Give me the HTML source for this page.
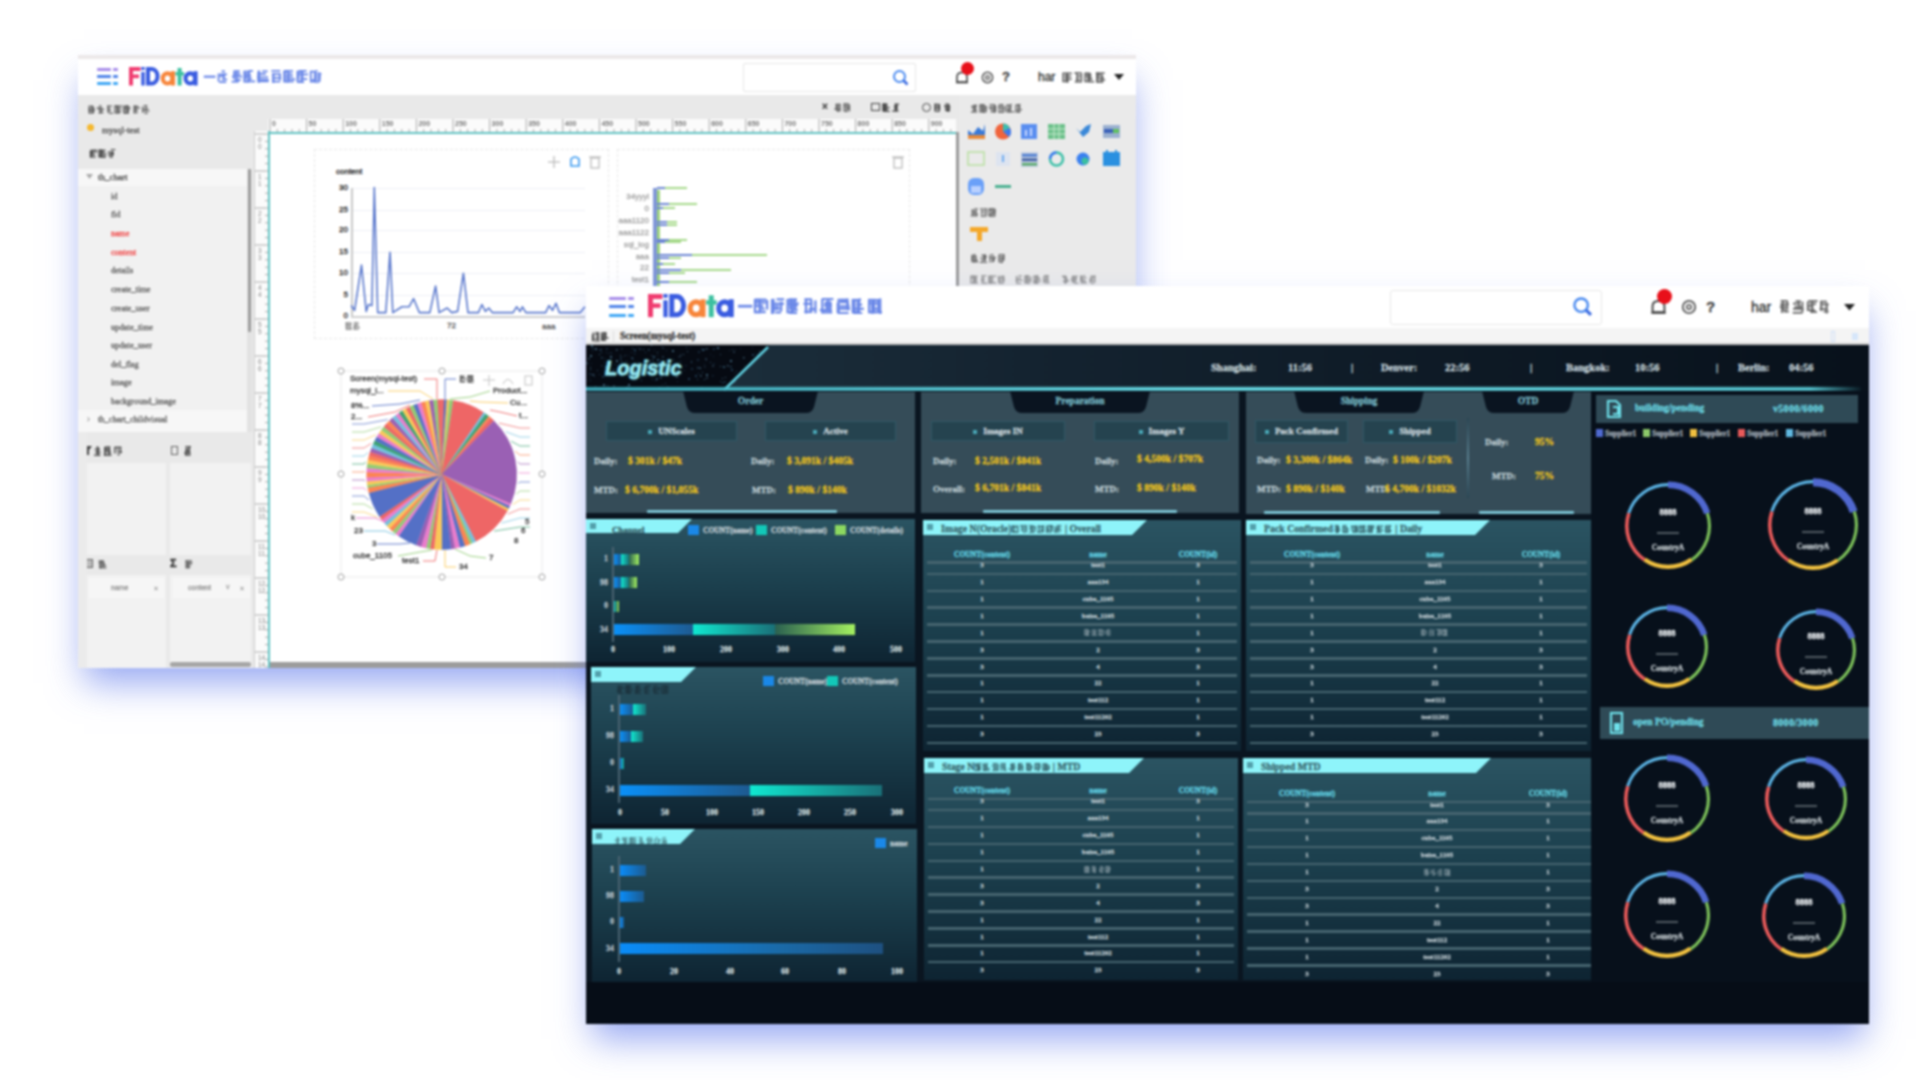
<!DOCTYPE html>
<html><head><meta charset="utf-8">
<style>
*{margin:0;padding:0;box-sizing:border-box}
html,body{width:1920px;height:1080px;overflow:hidden;background:#fff;font-family:"Liberation Sans",sans-serif}
.a{position:absolute}
.t{white-space:nowrap;-webkit-text-stroke:0.35px currentColor}
.win{position:absolute;overflow:hidden}
.inner{position:absolute;width:1920px;height:1080px}
.ser{font-family:"Liberation Serif",serif}
</style></head><body>
<div id="all" style="position:absolute;left:0;top:0;width:1920px;height:1080px;filter:blur(1px)"><div class="win" id="back" style="left:78px;top:55px;width:1058px;height:613px;background:#e9e9e9;box-shadow:1px 20px 34px -5px rgba(70,100,232,.56)"><div class="inner" style="left:-78px;top:-55px">
<div class="a" style="left:78px;top:55px;width:1058px;height:4px;background:#ece8e9"></div>
<div class="a" style="left:78px;top:59px;width:1058px;height:36px;background:#fff"></div>
<div class="a" style="left:97px;top:68px;width:14px;height:3px;background:#a68ce9;border-radius:1px"></div>
<div class="a" style="left:113px;top:68px;width:5px;height:3px;background:#a68ce9;border-radius:1px"></div>
<div class="a" style="left:97px;top:75px;width:14px;height:3px;background:#4f83e8;border-radius:1px"></div>
<div class="a" style="left:113px;top:75px;width:5px;height:3px;background:#4f83e8;border-radius:1px"></div>
<div class="a" style="left:97px;top:82px;width:14px;height:3px;background:#3ea6f4;border-radius:1px"></div>
<div class="a" style="left:113px;top:82px;width:5px;height:3px;background:#3ea6f4;border-radius:1px"></div>
<svg class="a" style="left:129px;top:67px;overflow:visible" width="70.0" height="19.0" viewBox="0 0 70 19"><rect x="0" y="0" width="4" height="18.5" fill="#f03c70"/><rect x="0" y="0" width="11.5" height="4" fill="#f03c70"/><rect x="0" y="7.5" width="10" height="3.6" fill="#f03c70"/><rect x="12.3" y="0" width="3.4" height="3" fill="#3a5ce0"/><rect x="12.3" y="5" width="3.4" height="13.5" fill="#3a5ce0"/><path d="M17 0 H23 A7.5 9.25 0 0 1 23 18.5 H17 Z M21 4 V14.5 H23 A3.5 5.25 0 0 0 23 4 Z" fill="#3a5ce0" fill-rule="evenodd"/><path d="M38.5 4.2 A6.8 7.2 0 1 0 38.5 18.6 A6.8 7.2 0 1 0 38.5 4.2 Z M38.5 8.4 A2.7 3 0 1 1 38.5 14.4 A2.7 3 0 1 1 38.5 8.4 Z" fill="#f7853a" fill-rule="evenodd"/><rect x="42" y="4.2" width="4" height="14.3" fill="#f7853a"/><rect x="48.6" y="1" width="4" height="17.5" fill="#3cc0a0"/><rect x="46.5" y="5" width="8.5" height="3.5" fill="#3cc0a0"/><path d="M61.3 4.2 A6.8 7.2 0 1 0 61.3 18.6 A6.8 7.2 0 1 0 61.3 4.2 Z M61.3 8.4 A2.7 3 0 1 1 61.3 14.4 A2.7 3 0 1 1 61.3 8.4 Z" fill="#3a5ce0" fill-rule="evenodd"/><rect x="64.6" y="4.2" width="4" height="14.3" fill="#3a5ce0"/></svg>
<svg class="a" style="left:203px;top:70.3px;opacity:0.89" width="120" height="13"><g stroke="#5a7be6" fill="none"><line x1="0.8" y1="6.7" x2="12.5" y2="6.7" stroke-width="2.23"/><line x1="18.6" y1="1.3" x2="22.0" y2="1.3" stroke-width="1.86"/><line x1="16.6" y1="4.4" x2="24.0" y2="4.4" stroke-width="1.86"/><line x1="16.5" y1="6.2" x2="21.8" y2="6.2" stroke-width="1.86"/><line x1="18.8" y1="9.4" x2="24.1" y2="9.4" stroke-width="1.86"/><line x1="16.2" y1="12.1" x2="23.2" y2="12.1" stroke-width="1.86"/><line x1="21.1" y1="3.3" x2="21.1" y2="9.6" stroke-width="1.86"/><line x1="15.6" y1="3.5" x2="15.6" y2="11.7" stroke-width="1.86"/><line x1="31.8" y1="1.3" x2="36.9" y2="1.3" stroke-width="1.86"/><line x1="30.0" y1="4.2" x2="37.5" y2="4.2" stroke-width="1.86"/><line x1="28.9" y1="6.6" x2="39.1" y2="6.6" stroke-width="1.86"/><line x1="31.8" y1="10.0" x2="37.7" y2="10.0" stroke-width="1.86"/><line x1="28.6" y1="11.7" x2="35.8" y2="11.7" stroke-width="1.86"/><line x1="33.8" y1="0.4" x2="33.8" y2="9.7" stroke-width="1.86"/><line x1="31.3" y1="0.3" x2="31.3" y2="9.4" stroke-width="1.86"/><rect x="41.3" y="1.6" width="4.1" height="10.0" fill="none" stroke-width="1.86"/><line x1="45.5" y1="0.9" x2="49.9" y2="0.9" stroke-width="1.86"/><line x1="42.8" y1="5.5" x2="48.1" y2="5.5" stroke-width="1.86"/><line x1="44.8" y1="8.6" x2="49.0" y2="8.6" stroke-width="1.86"/><line x1="42.4" y1="11.4" x2="52.2" y2="11.4" stroke-width="1.86"/><line x1="43.1" y1="2.8" x2="43.1" y2="9.4" stroke-width="1.86"/><line x1="46.2" y1="1.9" x2="46.2" y2="12.0" stroke-width="1.86"/><line x1="56.3" y1="0.7" x2="56.3" y2="12.6" stroke-width="1.86"/><line x1="59.2" y1="1.3" x2="64.6" y2="1.3" stroke-width="1.86"/><line x1="56.0" y1="3.9" x2="62.9" y2="3.9" stroke-width="1.86"/><line x1="54.0" y1="7.3" x2="65.1" y2="7.3" stroke-width="1.86"/><line x1="57.1" y1="9.9" x2="65.7" y2="9.9" stroke-width="1.86"/><line x1="55.0" y1="11.3" x2="65.7" y2="11.3" stroke-width="1.86"/><line x1="55.6" y1="0.6" x2="55.6" y2="11.1" stroke-width="1.86"/><line x1="55.3" y1="2.4" x2="55.3" y2="12.6" stroke-width="1.86"/><line x1="68.4" y1="0.8" x2="77.3" y2="0.8" stroke-width="1.86"/><line x1="69.2" y1="4.2" x2="77.2" y2="4.2" stroke-width="1.86"/><line x1="70.4" y1="7.9" x2="78.2" y2="7.9" stroke-width="1.86"/><line x1="69.3" y1="11.5" x2="77.3" y2="11.5" stroke-width="1.86"/><line x1="77.0" y1="3.3" x2="77.0" y2="10.3" stroke-width="1.86"/><line x1="70.2" y1="3.0" x2="70.2" y2="13.1" stroke-width="1.86"/><line x1="70.3" y1="3.8" x2="70.3" y2="12.8" stroke-width="1.86"/><rect x="81.2" y="1.6" width="4.1" height="10.0" fill="none" stroke-width="1.86"/><line x1="81.2" y1="0.7" x2="90.0" y2="0.7" stroke-width="1.86"/><line x1="84.5" y1="3.7" x2="89.5" y2="3.7" stroke-width="1.86"/><line x1="85.4" y1="6.5" x2="89.9" y2="6.5" stroke-width="1.86"/><line x1="85.5" y1="9.3" x2="92.2" y2="9.3" stroke-width="1.86"/><line x1="83.1" y1="11.5" x2="90.7" y2="11.5" stroke-width="1.86"/><line x1="84.4" y1="3.7" x2="84.4" y2="10.1" stroke-width="1.86"/><line x1="81.9" y1="1.1" x2="81.9" y2="11.1" stroke-width="1.86"/><rect x="94.5" y="1.6" width="4.1" height="10.0" fill="none" stroke-width="1.86"/><line x1="95.8" y1="0.9" x2="103.6" y2="0.9" stroke-width="1.86"/><line x1="95.8" y1="4.4" x2="105.1" y2="4.4" stroke-width="1.86"/><line x1="97.4" y1="9.1" x2="104.2" y2="9.1" stroke-width="1.86"/><line x1="94.6" y1="12.1" x2="101.1" y2="12.1" stroke-width="1.86"/><line x1="99.5" y1="1.4" x2="99.5" y2="10.6" stroke-width="1.86"/><line x1="95.4" y1="2.4" x2="95.4" y2="9.6" stroke-width="1.86"/><rect x="107.8" y="1.6" width="4.1" height="10.0" fill="none" stroke-width="1.86"/><line x1="112.5" y1="1.1" x2="114.6" y2="1.1" stroke-width="1.86"/><line x1="111.1" y1="4.1" x2="118.4" y2="4.1" stroke-width="1.86"/><line x1="110.9" y1="7.0" x2="117.9" y2="7.0" stroke-width="1.86"/><line x1="109.1" y1="9.9" x2="117.4" y2="9.9" stroke-width="1.86"/><line x1="111.8" y1="12.5" x2="116.2" y2="12.5" stroke-width="1.86"/><line x1="116.5" y1="2.3" x2="116.5" y2="11.8" stroke-width="1.86"/><line x1="111.9" y1="2.3" x2="111.9" y2="11.7" stroke-width="1.86"/></g></svg>
<div class="a" style="left:743px;top:63px;width:173px;height:29px;background:#fff;border:1px solid #e6e6e6;border-radius:2px"></div>
<svg class="a" style="left:892px;top:69px" width="18" height="18" viewBox="0 0 18 18"><circle cx="7.5" cy="7.5" r="5.5" fill="none" stroke="#4a8af0" stroke-width="2"/><line x1="11.5" y1="11.5" x2="15.5" y2="15.5" stroke="#3a6ae0" stroke-width="2.5"/></svg>
<svg class="a" style="left:954px;top:70px" width="16" height="16" viewBox="0 0 16 16"><path d="M3 12 L3 7 Q3 2.5 8 2.5 Q13 2.5 13 7 L13 12 Z" fill="none" stroke="#444" stroke-width="1.6"/><line x1="2" y1="12.5" x2="14" y2="12.5" stroke="#444" stroke-width="1.6"/></svg>
<div class="a" style="left:961px;top:62px;width:13px;height:13px;background:#e8101a;border-radius:50%"></div>
<svg class="a" style="left:980px;top:70px" width="15" height="15" viewBox="0 0 16 16"><circle cx="8" cy="8" r="5.5" fill="none" stroke="#555" stroke-width="1.6"/><circle cx="8" cy="8" r="2" fill="none" stroke="#555" stroke-width="1.4"/></svg>
<div class="a t " style="left:1002px;top:69.2px;font-size:13px;line-height:15.6px;color:#444;font-weight:bold">?</div>
<div class="a t " style="left:1038px;top:69.8px;font-size:12px;line-height:14.4px;color:#333;">har</div>
<svg class="a" style="left:1062px;top:71.5px;opacity:0.84" width="44" height="11"><g stroke="#444" fill="none"><rect x="1.1" y="1.3" width="3.4" height="8.2" fill="none" stroke-width="1.54"/><line x1="5.0" y1="1.3" x2="9.9" y2="1.3" stroke-width="1.54"/><line x1="2.4" y1="4.3" x2="9.3" y2="4.3" stroke-width="1.54"/><line x1="2.6" y1="7.1" x2="9.7" y2="7.1" stroke-width="1.54"/><line x1="3.9" y1="9.4" x2="6.6" y2="9.4" stroke-width="1.54"/><line x1="5.4" y1="0.8" x2="5.4" y2="10.0" stroke-width="1.54"/><line x1="5.5" y1="2.0" x2="5.5" y2="10.7" stroke-width="1.54"/><line x1="12.3" y1="1.0" x2="19.8" y2="1.0" stroke-width="1.54"/><line x1="14.9" y1="4.1" x2="18.8" y2="4.1" stroke-width="1.54"/><line x1="13.8" y1="7.4" x2="18.4" y2="7.4" stroke-width="1.54"/><line x1="12.8" y1="9.8" x2="19.9" y2="9.8" stroke-width="1.54"/><line x1="19.4" y1="1.3" x2="19.4" y2="9.6" stroke-width="1.54"/><line x1="15.1" y1="0.4" x2="15.1" y2="9.3" stroke-width="1.54"/><rect x="23.1" y="1.3" width="3.4" height="8.2" fill="none" stroke-width="1.54"/><line x1="23.9" y1="1.6" x2="29.1" y2="1.6" stroke-width="1.54"/><line x1="23.9" y1="4.0" x2="29.3" y2="4.0" stroke-width="1.54"/><line x1="25.4" y1="6.9" x2="30.4" y2="6.9" stroke-width="1.54"/><line x1="26.3" y1="9.7" x2="32.3" y2="9.7" stroke-width="1.54"/><line x1="26.1" y1="2.7" x2="26.1" y2="8.6" stroke-width="1.54"/><line x1="28.3" y1="2.2" x2="28.3" y2="8.6" stroke-width="1.54"/><line x1="26.4" y1="2.1" x2="26.4" y2="9.6" stroke-width="1.54"/><line x1="35.6" y1="0.6" x2="35.6" y2="10.4" stroke-width="1.54"/><line x1="33.8" y1="1.1" x2="42.7" y2="1.1" stroke-width="1.54"/><line x1="34.3" y1="3.0" x2="39.6" y2="3.0" stroke-width="1.54"/><line x1="35.6" y1="5.6" x2="41.9" y2="5.6" stroke-width="1.54"/><line x1="37.2" y1="7.9" x2="43.2" y2="7.9" stroke-width="1.54"/><line x1="34.5" y1="10.1" x2="41.3" y2="10.1" stroke-width="1.54"/><line x1="40.2" y1="2.5" x2="40.2" y2="9.5" stroke-width="1.54"/><line x1="34.9" y1="0.7" x2="34.9" y2="10.3" stroke-width="1.54"/></g></svg>
<svg class="a" style="left:1114px;top:74px" width="10" height="7"><path d="M0 0 L10 0 L5 6 Z" fill="#222"/></svg>
<svg class="a" style="left:87px;top:105.0px;opacity:0.79" width="63" height="9"><g stroke="#444" fill="none"><line x1="2.1" y1="0.5" x2="2.1" y2="8.5" stroke-width="1.26"/><line x1="3.0" y1="1.2" x2="6.0" y2="1.2" stroke-width="1.26"/><line x1="3.7" y1="2.6" x2="6.5" y2="2.6" stroke-width="1.26"/><line x1="1.2" y1="4.5" x2="8.1" y2="4.5" stroke-width="1.26"/><line x1="2.5" y1="5.9" x2="7.4" y2="5.9" stroke-width="1.26"/><line x1="3.5" y1="8.1" x2="6.4" y2="8.1" stroke-width="1.26"/><line x1="5.5" y1="0.6" x2="5.5" y2="8.2" stroke-width="1.26"/><line x1="6.5" y1="1.7" x2="6.5" y2="8.2" stroke-width="1.26"/><line x1="2.7" y1="2.4" x2="2.7" y2="8.9" stroke-width="1.26"/><line x1="12.1" y1="0.7" x2="14.3" y2="0.7" stroke-width="1.26"/><line x1="9.7" y1="2.7" x2="15.4" y2="2.7" stroke-width="1.26"/><line x1="10.5" y1="4.4" x2="17.2" y2="4.4" stroke-width="1.26"/><line x1="12.6" y1="6.0" x2="15.7" y2="6.0" stroke-width="1.26"/><line x1="11.4" y1="7.7" x2="16.5" y2="7.7" stroke-width="1.26"/><line x1="13.3" y1="2.7" x2="13.3" y2="8.7" stroke-width="1.26"/><line x1="13.6" y1="1.8" x2="13.6" y2="7.5" stroke-width="1.26"/><line x1="20.1" y1="1.1" x2="25.1" y2="1.1" stroke-width="1.26"/><line x1="20.5" y1="3.6" x2="23.8" y2="3.6" stroke-width="1.26"/><line x1="21.8" y1="5.7" x2="24.1" y2="5.7" stroke-width="1.26"/><line x1="21.9" y1="8.3" x2="26.0" y2="8.3" stroke-width="1.26"/><line x1="21.3" y1="0.4" x2="21.3" y2="7.8" stroke-width="1.26"/><line x1="21.1" y1="1.3" x2="21.1" y2="7.4" stroke-width="1.26"/><rect x="27.9" y="1.1" width="2.8" height="6.8" fill="none" stroke-width="1.26"/><line x1="27.6" y1="1.0" x2="35.4" y2="1.0" stroke-width="1.26"/><line x1="29.0" y1="3.3" x2="34.8" y2="3.3" stroke-width="1.26"/><line x1="29.3" y1="5.8" x2="34.5" y2="5.8" stroke-width="1.26"/><line x1="29.5" y1="7.7" x2="33.6" y2="7.7" stroke-width="1.26"/><line x1="30.0" y1="1.3" x2="30.0" y2="6.6" stroke-width="1.26"/><line x1="31.1" y1="2.2" x2="31.1" y2="8.7" stroke-width="1.26"/><line x1="31.4" y1="0.9" x2="31.4" y2="6.8" stroke-width="1.26"/><rect x="36.9" y="1.1" width="2.8" height="6.8" fill="none" stroke-width="1.26"/><line x1="39.3" y1="0.6" x2="41.4" y2="0.6" stroke-width="1.26"/><line x1="37.3" y1="2.4" x2="43.5" y2="2.4" stroke-width="1.26"/><line x1="37.8" y1="4.3" x2="43.3" y2="4.3" stroke-width="1.26"/><line x1="39.1" y1="5.9" x2="41.7" y2="5.9" stroke-width="1.26"/><line x1="37.4" y1="8.1" x2="41.9" y2="8.1" stroke-width="1.26"/><line x1="37.5" y1="1.7" x2="37.5" y2="8.5" stroke-width="1.26"/><line x1="41.2" y1="1.5" x2="41.2" y2="8.6" stroke-width="1.26"/><line x1="40.7" y1="0.6" x2="40.7" y2="6.9" stroke-width="1.26"/><line x1="47.1" y1="0.5" x2="47.1" y2="8.5" stroke-width="1.26"/><line x1="47.8" y1="1.3" x2="51.4" y2="1.3" stroke-width="1.26"/><line x1="47.7" y1="3.0" x2="53.1" y2="3.0" stroke-width="1.26"/><line x1="48.3" y1="5.4" x2="50.9" y2="5.4" stroke-width="1.26"/><line x1="48.7" y1="7.7" x2="50.7" y2="7.7" stroke-width="1.26"/><line x1="48.0" y1="0.3" x2="48.0" y2="8.5" stroke-width="1.26"/><line x1="49.0" y1="2.1" x2="49.0" y2="6.6" stroke-width="1.26"/><line x1="56.6" y1="0.5" x2="60.4" y2="0.5" stroke-width="1.26"/><line x1="55.8" y1="3.6" x2="61.5" y2="3.6" stroke-width="1.26"/><line x1="55.8" y1="5.8" x2="62.5" y2="5.8" stroke-width="1.26"/><line x1="57.4" y1="8.4" x2="60.8" y2="8.4" stroke-width="1.26"/><line x1="55.6" y1="1.5" x2="55.6" y2="7.7" stroke-width="1.26"/><line x1="58.9" y1="0.4" x2="58.9" y2="6.8" stroke-width="1.26"/></g></svg>
<div class="a" style="left:87px;top:124px;width:7px;height:7px;background:#f5b82e;border-radius:50%"></div>
<div class="a t ser" style="left:102px;top:124.6px;font-size:9px;line-height:10.8px;color:#555;">mysql-test</div>
<svg class="a" style="left:89px;top:148.5px;opacity:0.84" width="27" height="9"><g stroke="#333" fill="none"><line x1="2.1" y1="0.5" x2="2.1" y2="8.5" stroke-width="1.26"/><line x1="4.1" y1="1.2" x2="8.2" y2="1.2" stroke-width="1.26"/><line x1="0.8" y1="2.9" x2="8.3" y2="2.9" stroke-width="1.26"/><line x1="3.3" y1="5.7" x2="6.3" y2="5.7" stroke-width="1.26"/><line x1="2.4" y1="8.1" x2="6.7" y2="8.1" stroke-width="1.26"/><line x1="1.4" y1="1.9" x2="1.4" y2="8.6" stroke-width="1.26"/><line x1="2.5" y1="1.2" x2="2.5" y2="8.3" stroke-width="1.26"/><line x1="3.9" y1="0.5" x2="3.9" y2="6.7" stroke-width="1.26"/><rect x="9.9" y="1.1" width="2.8" height="6.8" fill="none" stroke-width="1.26"/><line x1="12.4" y1="1.3" x2="16.5" y2="1.3" stroke-width="1.26"/><line x1="11.8" y1="3.0" x2="15.6" y2="3.0" stroke-width="1.26"/><line x1="11.3" y1="4.6" x2="17.4" y2="4.6" stroke-width="1.26"/><line x1="10.5" y1="6.6" x2="17.2" y2="6.6" stroke-width="1.26"/><line x1="12.3" y1="8.3" x2="16.9" y2="8.3" stroke-width="1.26"/><line x1="11.2" y1="0.9" x2="11.2" y2="7.8" stroke-width="1.26"/><line x1="12.7" y1="1.2" x2="12.7" y2="6.8" stroke-width="1.26"/><line x1="11.6" y1="0.5" x2="11.6" y2="8.5" stroke-width="1.26"/><line x1="21.7" y1="0.5" x2="26.4" y2="0.5" stroke-width="1.26"/><line x1="18.7" y1="3.1" x2="24.2" y2="3.1" stroke-width="1.26"/><line x1="19.6" y1="4.9" x2="24.0" y2="4.9" stroke-width="1.26"/><line x1="19.2" y1="6.2" x2="23.5" y2="6.2" stroke-width="1.26"/><line x1="20.3" y1="8.1" x2="24.0" y2="8.1" stroke-width="1.26"/><line x1="24.2" y1="2.6" x2="24.2" y2="6.4" stroke-width="1.26"/><line x1="23.2" y1="2.0" x2="23.2" y2="7.0" stroke-width="1.26"/></g></svg>
<div class="a" style="left:78px;top:169px;width:169px;height:263px;background:#f1f1f1"></div>
<div class="a" style="left:78px;top:169px;width:169px;height:17px;background:#f7f7f7"></div>
<div class="a" style="left:78px;top:410px;width:169px;height:22px;background:#f7f7f7"></div>
<svg class="a" style="left:86px;top:174px" width="7" height="6"><path d="M0 0 L7 0 L3.5 5 Z" fill="#aaa"/></svg>
<div class="a t ser" style="left:98px;top:171.6px;font-size:9px;line-height:10.8px;color:#555;">th_chart</div>
<div class="a t ser" style="left:111px;top:190.9px;font-size:8.5px;line-height:10.2px;color:#666;">id</div>
<div class="a t ser" style="left:111px;top:208.9px;font-size:8.5px;line-height:10.2px;color:#666;">fid</div>
<div class="a t ser" style="left:111px;top:227.9px;font-size:8.5px;line-height:10.2px;color:#f04a4a;">name</div>
<div class="a t ser" style="left:111px;top:246.9px;font-size:8.5px;line-height:10.2px;color:#f04a4a;">content</div>
<div class="a t ser" style="left:111px;top:264.9px;font-size:8.5px;line-height:10.2px;color:#666;">details</div>
<div class="a t ser" style="left:111px;top:283.9px;font-size:8.5px;line-height:10.2px;color:#666;">create_time</div>
<div class="a t ser" style="left:111px;top:302.9px;font-size:8.5px;line-height:10.2px;color:#666;">create_user</div>
<div class="a t ser" style="left:111px;top:321.9px;font-size:8.5px;line-height:10.2px;color:#666;">update_time</div>
<div class="a t ser" style="left:111px;top:339.9px;font-size:8.5px;line-height:10.2px;color:#666;">update_user</div>
<div class="a t ser" style="left:111px;top:358.9px;font-size:8.5px;line-height:10.2px;color:#666;">del_flag</div>
<div class="a t ser" style="left:111px;top:376.9px;font-size:8.5px;line-height:10.2px;color:#666;">image</div>
<div class="a t ser" style="left:111px;top:395.9px;font-size:8.5px;line-height:10.2px;color:#666;">background_image</div>
<div class="a t " style="left:87px;top:413.6px;font-size:9px;line-height:10.8px;color:#aaa;">›</div>
<div class="a t ser" style="left:98px;top:413.9px;font-size:8.5px;line-height:10.2px;color:#666;">th_chart_childvisual</div>
<div class="a" style="left:247px;top:169px;width:5px;height:263px;background:#e2e2e2"></div>
<div class="a" style="left:248px;top:169px;width:3px;height:163px;background:#9c9c9c;border-radius:1px"></div>
<div class="a" style="left:78px;top:432px;width:174px;height:236px;background:#e9e9e9"></div>
<svg class="a" style="left:84px;top:446px" width="8" height="10"><path d="M0 0 L8 0 L5 4 L5 9 L3 9 L3 4 Z" fill="#444"/></svg>
<svg class="a" style="left:93px;top:446.0px;opacity:0.84" width="30" height="10"><g stroke="#333" fill="none"><line x1="3.2" y1="1.3" x2="5.9" y2="1.3" stroke-width="1.40"/><line x1="1.7" y1="3.4" x2="7.1" y2="3.4" stroke-width="1.40"/><line x1="2.2" y1="6.4" x2="7.7" y2="6.4" stroke-width="1.40"/><line x1="1.0" y1="9.3" x2="7.4" y2="9.3" stroke-width="1.40"/><line x1="5.3" y1="2.0" x2="5.3" y2="9.9" stroke-width="1.40"/><line x1="4.2" y1="2.8" x2="4.2" y2="8.2" stroke-width="1.40"/><line x1="12.4" y1="0.5" x2="12.4" y2="9.5" stroke-width="1.40"/><line x1="13.0" y1="1.0" x2="17.4" y2="1.0" stroke-width="1.40"/><line x1="11.7" y1="3.0" x2="17.3" y2="3.0" stroke-width="1.40"/><line x1="12.7" y1="4.8" x2="17.6" y2="4.8" stroke-width="1.40"/><line x1="14.3" y1="6.8" x2="18.2" y2="6.8" stroke-width="1.40"/><line x1="10.7" y1="9.2" x2="18.6" y2="9.2" stroke-width="1.40"/><line x1="15.9" y1="1.2" x2="15.9" y2="9.1" stroke-width="1.40"/><line x1="11.9" y1="0.9" x2="11.9" y2="8.2" stroke-width="1.40"/><line x1="21.5" y1="1.3" x2="28.4" y2="1.3" stroke-width="1.40"/><line x1="23.6" y1="3.4" x2="26.0" y2="3.4" stroke-width="1.40"/><line x1="23.8" y1="5.9" x2="29.1" y2="5.9" stroke-width="1.40"/><line x1="24.4" y1="8.6" x2="26.7" y2="8.6" stroke-width="1.40"/><line x1="21.8" y1="1.3" x2="21.8" y2="7.4" stroke-width="1.40"/><line x1="27.5" y1="1.1" x2="27.5" y2="7.5" stroke-width="1.40"/></g></svg>
<div class="a" style="left:171px;top:446px;width:7px;height:9px;border:1px solid #666"></div>
<svg class="a" style="left:183px;top:446.0px;opacity:0.84" width="10" height="10"><g stroke="#333" fill="none"><line x1="2.3" y1="0.6" x2="8.0" y2="0.6" stroke-width="1.40"/><line x1="3.3" y1="3.1" x2="7.2" y2="3.1" stroke-width="1.40"/><line x1="3.8" y1="5.2" x2="6.4" y2="5.2" stroke-width="1.40"/><line x1="1.1" y1="6.8" x2="7.6" y2="6.8" stroke-width="1.40"/><line x1="1.8" y1="9.0" x2="7.7" y2="9.0" stroke-width="1.40"/><line x1="3.4" y1="1.8" x2="3.4" y2="9.2" stroke-width="1.40"/><line x1="6.4" y1="0.6" x2="6.4" y2="7.8" stroke-width="1.40"/><line x1="3.2" y1="2.9" x2="3.2" y2="8.5" stroke-width="1.40"/></g></svg>
<div class="a" style="left:87px;top:463px;width:79px;height:92px;background:#f2f2f2"></div>
<div class="a" style="left:170px;top:463px;width:81px;height:92px;background:#f2f2f2"></div>
<div class="a" style="left:85px;top:559px;width:8px;height:9px;border:1px solid #666;background:#bbb"></div>
<svg class="a" style="left:98px;top:559.5px;opacity:0.84" width="9" height="9"><g stroke="#444" fill="none"><line x1="2.1" y1="0.5" x2="2.1" y2="8.5" stroke-width="1.26"/><line x1="0.6" y1="1.0" x2="6.1" y2="1.0" stroke-width="1.26"/><line x1="0.7" y1="2.9" x2="6.0" y2="2.9" stroke-width="1.26"/><line x1="3.2" y1="5.5" x2="8.2" y2="5.5" stroke-width="1.26"/><line x1="1.4" y1="7.8" x2="8.4" y2="7.8" stroke-width="1.26"/><line x1="4.4" y1="0.6" x2="4.4" y2="7.2" stroke-width="1.26"/><line x1="6.1" y1="2.3" x2="6.1" y2="6.5" stroke-width="1.26"/><line x1="2.1" y1="2.2" x2="2.1" y2="8.0" stroke-width="1.26"/></g></svg>
<div class="a t " style="left:170px;top:557.4px;font-size:11px;line-height:13.2px;color:#333;font-weight:bold">Σ</div>
<svg class="a" style="left:184px;top:559.5px;opacity:0.84" width="9" height="9"><g stroke="#444" fill="none"><line x1="2.1" y1="0.5" x2="2.1" y2="8.5" stroke-width="1.26"/><line x1="1.5" y1="0.8" x2="7.9" y2="0.8" stroke-width="1.26"/><line x1="2.9" y1="2.6" x2="8.4" y2="2.6" stroke-width="1.26"/><line x1="2.5" y1="4.3" x2="7.7" y2="4.3" stroke-width="1.26"/><line x1="2.1" y1="6.7" x2="6.5" y2="6.7" stroke-width="1.26"/><line x1="3.7" y1="7.7" x2="5.5" y2="7.7" stroke-width="1.26"/><line x1="4.1" y1="1.5" x2="4.1" y2="8.5" stroke-width="1.26"/><line x1="4.3" y1="2.2" x2="4.3" y2="6.3" stroke-width="1.26"/></g></svg>
<div class="a" style="left:87px;top:575px;width:79px;height:93px;background:#f2f2f2"></div>
<div class="a" style="left:170px;top:575px;width:81px;height:93px;background:#f2f2f2"></div>
<div class="a" style="left:89px;top:578px;width:75px;height:20px;background:#f6f6f6"></div>
<div class="a t " style="left:111px;top:583.8px;font-size:7px;line-height:8.4px;color:#999;">name</div>
<div class="a t " style="left:154px;top:584.8px;font-size:7px;line-height:8.4px;color:#aaa;">×</div>
<div class="a" style="left:173px;top:578px;width:77px;height:20px;background:#f6f6f6"></div>
<div class="a t " style="left:188px;top:583.8px;font-size:7px;line-height:8.4px;color:#999;">content</div>
<div class="a t " style="left:226px;top:582.8px;font-size:7px;line-height:8.4px;color:#aaa;">v</div>
<div class="a t " style="left:240px;top:584.8px;font-size:7px;line-height:8.4px;color:#aaa;">×</div>
<div class="a" style="left:170px;top:662px;width:81px;height:5px;background:#a6a6a6;border-radius:2px"></div>
<div class="a" style="left:78px;top:432px;width:9px;height:236px;background:#ebebeb"></div>
<div class="a" style="left:268px;top:119px;width:688px;height:13px;background:#fbfbfb"></div>
<div class="a" style="left:255px;top:131px;width:13px;height:537px;background:#fbfbfb"></div>
<svg class="a" style="left:268px;top:119px" width="688" height="13"><line x1="2.0" y1="0" x2="2.0" y2="13" stroke="#aaa" stroke-width="1"/><text x="4.0" y="7" font-size="7" fill="#777" font-weight="bold" font-family="Liberation Sans">0</text><line x1="9.3" y1="10" x2="9.3" y2="13" stroke="#aaa" stroke-width="1"/><line x1="16.6" y1="10" x2="16.6" y2="13" stroke="#aaa" stroke-width="1"/><line x1="24.0" y1="10" x2="24.0" y2="13" stroke="#aaa" stroke-width="1"/><line x1="31.3" y1="10" x2="31.3" y2="13" stroke="#aaa" stroke-width="1"/><line x1="38.6" y1="0" x2="38.6" y2="13" stroke="#aaa" stroke-width="1"/><text x="40.6" y="7" font-size="7" fill="#777" font-weight="bold" font-family="Liberation Sans">50</text><line x1="45.9" y1="10" x2="45.9" y2="13" stroke="#aaa" stroke-width="1"/><line x1="53.2" y1="10" x2="53.2" y2="13" stroke="#aaa" stroke-width="1"/><line x1="60.6" y1="10" x2="60.6" y2="13" stroke="#aaa" stroke-width="1"/><line x1="67.9" y1="10" x2="67.9" y2="13" stroke="#aaa" stroke-width="1"/><line x1="75.2" y1="0" x2="75.2" y2="13" stroke="#aaa" stroke-width="1"/><text x="77.2" y="7" font-size="7" fill="#777" font-weight="bold" font-family="Liberation Sans">100</text><line x1="82.5" y1="10" x2="82.5" y2="13" stroke="#aaa" stroke-width="1"/><line x1="89.8" y1="10" x2="89.8" y2="13" stroke="#aaa" stroke-width="1"/><line x1="97.2" y1="10" x2="97.2" y2="13" stroke="#aaa" stroke-width="1"/><line x1="104.5" y1="10" x2="104.5" y2="13" stroke="#aaa" stroke-width="1"/><line x1="111.8" y1="0" x2="111.8" y2="13" stroke="#aaa" stroke-width="1"/><text x="113.8" y="7" font-size="7" fill="#777" font-weight="bold" font-family="Liberation Sans">150</text><line x1="119.1" y1="10" x2="119.1" y2="13" stroke="#aaa" stroke-width="1"/><line x1="126.4" y1="10" x2="126.4" y2="13" stroke="#aaa" stroke-width="1"/><line x1="133.8" y1="10" x2="133.8" y2="13" stroke="#aaa" stroke-width="1"/><line x1="141.1" y1="10" x2="141.1" y2="13" stroke="#aaa" stroke-width="1"/><line x1="148.4" y1="0" x2="148.4" y2="13" stroke="#aaa" stroke-width="1"/><text x="150.4" y="7" font-size="7" fill="#777" font-weight="bold" font-family="Liberation Sans">200</text><line x1="155.7" y1="10" x2="155.7" y2="13" stroke="#aaa" stroke-width="1"/><line x1="163.0" y1="10" x2="163.0" y2="13" stroke="#aaa" stroke-width="1"/><line x1="170.4" y1="10" x2="170.4" y2="13" stroke="#aaa" stroke-width="1"/><line x1="177.7" y1="10" x2="177.7" y2="13" stroke="#aaa" stroke-width="1"/><line x1="185.0" y1="0" x2="185.0" y2="13" stroke="#aaa" stroke-width="1"/><text x="187.0" y="7" font-size="7" fill="#777" font-weight="bold" font-family="Liberation Sans">250</text><line x1="192.3" y1="10" x2="192.3" y2="13" stroke="#aaa" stroke-width="1"/><line x1="199.6" y1="10" x2="199.6" y2="13" stroke="#aaa" stroke-width="1"/><line x1="207.0" y1="10" x2="207.0" y2="13" stroke="#aaa" stroke-width="1"/><line x1="214.3" y1="10" x2="214.3" y2="13" stroke="#aaa" stroke-width="1"/><line x1="221.6" y1="0" x2="221.6" y2="13" stroke="#aaa" stroke-width="1"/><text x="223.6" y="7" font-size="7" fill="#777" font-weight="bold" font-family="Liberation Sans">300</text><line x1="228.9" y1="10" x2="228.9" y2="13" stroke="#aaa" stroke-width="1"/><line x1="236.2" y1="10" x2="236.2" y2="13" stroke="#aaa" stroke-width="1"/><line x1="243.6" y1="10" x2="243.6" y2="13" stroke="#aaa" stroke-width="1"/><line x1="250.9" y1="10" x2="250.9" y2="13" stroke="#aaa" stroke-width="1"/><line x1="258.2" y1="0" x2="258.2" y2="13" stroke="#aaa" stroke-width="1"/><text x="260.2" y="7" font-size="7" fill="#777" font-weight="bold" font-family="Liberation Sans">350</text><line x1="265.5" y1="10" x2="265.5" y2="13" stroke="#aaa" stroke-width="1"/><line x1="272.8" y1="10" x2="272.8" y2="13" stroke="#aaa" stroke-width="1"/><line x1="280.2" y1="10" x2="280.2" y2="13" stroke="#aaa" stroke-width="1"/><line x1="287.5" y1="10" x2="287.5" y2="13" stroke="#aaa" stroke-width="1"/><line x1="294.8" y1="0" x2="294.8" y2="13" stroke="#aaa" stroke-width="1"/><text x="296.8" y="7" font-size="7" fill="#777" font-weight="bold" font-family="Liberation Sans">400</text><line x1="302.1" y1="10" x2="302.1" y2="13" stroke="#aaa" stroke-width="1"/><line x1="309.4" y1="10" x2="309.4" y2="13" stroke="#aaa" stroke-width="1"/><line x1="316.8" y1="10" x2="316.8" y2="13" stroke="#aaa" stroke-width="1"/><line x1="324.1" y1="10" x2="324.1" y2="13" stroke="#aaa" stroke-width="1"/><line x1="331.4" y1="0" x2="331.4" y2="13" stroke="#aaa" stroke-width="1"/><text x="333.4" y="7" font-size="7" fill="#777" font-weight="bold" font-family="Liberation Sans">450</text><line x1="338.7" y1="10" x2="338.7" y2="13" stroke="#aaa" stroke-width="1"/><line x1="346.0" y1="10" x2="346.0" y2="13" stroke="#aaa" stroke-width="1"/><line x1="353.4" y1="10" x2="353.4" y2="13" stroke="#aaa" stroke-width="1"/><line x1="360.7" y1="10" x2="360.7" y2="13" stroke="#aaa" stroke-width="1"/><line x1="368.0" y1="0" x2="368.0" y2="13" stroke="#aaa" stroke-width="1"/><text x="370.0" y="7" font-size="7" fill="#777" font-weight="bold" font-family="Liberation Sans">500</text><line x1="375.3" y1="10" x2="375.3" y2="13" stroke="#aaa" stroke-width="1"/><line x1="382.6" y1="10" x2="382.6" y2="13" stroke="#aaa" stroke-width="1"/><line x1="390.0" y1="10" x2="390.0" y2="13" stroke="#aaa" stroke-width="1"/><line x1="397.3" y1="10" x2="397.3" y2="13" stroke="#aaa" stroke-width="1"/><line x1="404.6" y1="0" x2="404.6" y2="13" stroke="#aaa" stroke-width="1"/><text x="406.6" y="7" font-size="7" fill="#777" font-weight="bold" font-family="Liberation Sans">550</text><line x1="411.9" y1="10" x2="411.9" y2="13" stroke="#aaa" stroke-width="1"/><line x1="419.2" y1="10" x2="419.2" y2="13" stroke="#aaa" stroke-width="1"/><line x1="426.6" y1="10" x2="426.6" y2="13" stroke="#aaa" stroke-width="1"/><line x1="433.9" y1="10" x2="433.9" y2="13" stroke="#aaa" stroke-width="1"/><line x1="441.2" y1="0" x2="441.2" y2="13" stroke="#aaa" stroke-width="1"/><text x="443.2" y="7" font-size="7" fill="#777" font-weight="bold" font-family="Liberation Sans">600</text><line x1="448.5" y1="10" x2="448.5" y2="13" stroke="#aaa" stroke-width="1"/><line x1="455.8" y1="10" x2="455.8" y2="13" stroke="#aaa" stroke-width="1"/><line x1="463.2" y1="10" x2="463.2" y2="13" stroke="#aaa" stroke-width="1"/><line x1="470.5" y1="10" x2="470.5" y2="13" stroke="#aaa" stroke-width="1"/><line x1="477.8" y1="0" x2="477.8" y2="13" stroke="#aaa" stroke-width="1"/><text x="479.8" y="7" font-size="7" fill="#777" font-weight="bold" font-family="Liberation Sans">650</text><line x1="485.1" y1="10" x2="485.1" y2="13" stroke="#aaa" stroke-width="1"/><line x1="492.4" y1="10" x2="492.4" y2="13" stroke="#aaa" stroke-width="1"/><line x1="499.8" y1="10" x2="499.8" y2="13" stroke="#aaa" stroke-width="1"/><line x1="507.1" y1="10" x2="507.1" y2="13" stroke="#aaa" stroke-width="1"/><line x1="514.4" y1="0" x2="514.4" y2="13" stroke="#aaa" stroke-width="1"/><text x="516.4" y="7" font-size="7" fill="#777" font-weight="bold" font-family="Liberation Sans">700</text><line x1="521.7" y1="10" x2="521.7" y2="13" stroke="#aaa" stroke-width="1"/><line x1="529.0" y1="10" x2="529.0" y2="13" stroke="#aaa" stroke-width="1"/><line x1="536.4" y1="10" x2="536.4" y2="13" stroke="#aaa" stroke-width="1"/><line x1="543.7" y1="10" x2="543.7" y2="13" stroke="#aaa" stroke-width="1"/><line x1="551.0" y1="0" x2="551.0" y2="13" stroke="#aaa" stroke-width="1"/><text x="553.0" y="7" font-size="7" fill="#777" font-weight="bold" font-family="Liberation Sans">750</text><line x1="558.3" y1="10" x2="558.3" y2="13" stroke="#aaa" stroke-width="1"/><line x1="565.6" y1="10" x2="565.6" y2="13" stroke="#aaa" stroke-width="1"/><line x1="573.0" y1="10" x2="573.0" y2="13" stroke="#aaa" stroke-width="1"/><line x1="580.3" y1="10" x2="580.3" y2="13" stroke="#aaa" stroke-width="1"/><line x1="587.6" y1="0" x2="587.6" y2="13" stroke="#aaa" stroke-width="1"/><text x="589.6" y="7" font-size="7" fill="#777" font-weight="bold" font-family="Liberation Sans">800</text><line x1="594.9" y1="10" x2="594.9" y2="13" stroke="#aaa" stroke-width="1"/><line x1="602.2" y1="10" x2="602.2" y2="13" stroke="#aaa" stroke-width="1"/><line x1="609.6" y1="10" x2="609.6" y2="13" stroke="#aaa" stroke-width="1"/><line x1="616.9" y1="10" x2="616.9" y2="13" stroke="#aaa" stroke-width="1"/><line x1="624.2" y1="0" x2="624.2" y2="13" stroke="#aaa" stroke-width="1"/><text x="626.2" y="7" font-size="7" fill="#777" font-weight="bold" font-family="Liberation Sans">850</text><line x1="631.5" y1="10" x2="631.5" y2="13" stroke="#aaa" stroke-width="1"/><line x1="638.8" y1="10" x2="638.8" y2="13" stroke="#aaa" stroke-width="1"/><line x1="646.2" y1="10" x2="646.2" y2="13" stroke="#aaa" stroke-width="1"/><line x1="653.5" y1="10" x2="653.5" y2="13" stroke="#aaa" stroke-width="1"/><line x1="660.8" y1="0" x2="660.8" y2="13" stroke="#aaa" stroke-width="1"/><text x="662.8" y="7" font-size="7" fill="#777" font-weight="bold" font-family="Liberation Sans">900</text><line x1="668.1" y1="10" x2="668.1" y2="13" stroke="#aaa" stroke-width="1"/><line x1="675.4" y1="10" x2="675.4" y2="13" stroke="#aaa" stroke-width="1"/><line x1="682.8" y1="10" x2="682.8" y2="13" stroke="#aaa" stroke-width="1"/><line x1="690.1" y1="10" x2="690.1" y2="13" stroke="#aaa" stroke-width="1"/></svg>
<svg class="a" style="left:255px;top:131px" width="13" height="537"><line x1="0" y1="3.0" x2="13" y2="3.0" stroke="#aaa" stroke-width="1"/><text x="3" y="11.0" font-size="6.5" fill="#888" font-family="Liberation Sans">0</text><text x="3" y="18.0" font-size="6.5" fill="#888" font-family="Liberation Sans">0</text><line x1="10" y1="10.4" x2="13" y2="10.4" stroke="#aaa" stroke-width="1"/><line x1="10" y1="17.8" x2="13" y2="17.8" stroke="#aaa" stroke-width="1"/><line x1="10" y1="25.2" x2="13" y2="25.2" stroke="#aaa" stroke-width="1"/><line x1="10" y1="32.6" x2="13" y2="32.6" stroke="#aaa" stroke-width="1"/><line x1="0" y1="40.0" x2="13" y2="40.0" stroke="#aaa" stroke-width="1"/><text x="3" y="48.0" font-size="6.5" fill="#888" font-family="Liberation Sans">1</text><text x="3" y="55.0" font-size="6.5" fill="#888" font-family="Liberation Sans">1</text><line x1="10" y1="47.4" x2="13" y2="47.4" stroke="#aaa" stroke-width="1"/><line x1="10" y1="54.8" x2="13" y2="54.8" stroke="#aaa" stroke-width="1"/><line x1="10" y1="62.2" x2="13" y2="62.2" stroke="#aaa" stroke-width="1"/><line x1="10" y1="69.6" x2="13" y2="69.6" stroke="#aaa" stroke-width="1"/><line x1="0" y1="77.0" x2="13" y2="77.0" stroke="#aaa" stroke-width="1"/><text x="3" y="85.0" font-size="6.5" fill="#888" font-family="Liberation Sans">2</text><text x="3" y="92.0" font-size="6.5" fill="#888" font-family="Liberation Sans">2</text><line x1="10" y1="84.4" x2="13" y2="84.4" stroke="#aaa" stroke-width="1"/><line x1="10" y1="91.8" x2="13" y2="91.8" stroke="#aaa" stroke-width="1"/><line x1="10" y1="99.2" x2="13" y2="99.2" stroke="#aaa" stroke-width="1"/><line x1="10" y1="106.6" x2="13" y2="106.6" stroke="#aaa" stroke-width="1"/><line x1="0" y1="114.0" x2="13" y2="114.0" stroke="#aaa" stroke-width="1"/><text x="3" y="122.0" font-size="6.5" fill="#888" font-family="Liberation Sans">3</text><text x="3" y="129.0" font-size="6.5" fill="#888" font-family="Liberation Sans">3</text><line x1="10" y1="121.4" x2="13" y2="121.4" stroke="#aaa" stroke-width="1"/><line x1="10" y1="128.8" x2="13" y2="128.8" stroke="#aaa" stroke-width="1"/><line x1="10" y1="136.2" x2="13" y2="136.2" stroke="#aaa" stroke-width="1"/><line x1="10" y1="143.6" x2="13" y2="143.6" stroke="#aaa" stroke-width="1"/><line x1="0" y1="151.0" x2="13" y2="151.0" stroke="#aaa" stroke-width="1"/><text x="3" y="159.0" font-size="6.5" fill="#888" font-family="Liberation Sans">4</text><text x="3" y="166.0" font-size="6.5" fill="#888" font-family="Liberation Sans">4</text><line x1="10" y1="158.4" x2="13" y2="158.4" stroke="#aaa" stroke-width="1"/><line x1="10" y1="165.8" x2="13" y2="165.8" stroke="#aaa" stroke-width="1"/><line x1="10" y1="173.2" x2="13" y2="173.2" stroke="#aaa" stroke-width="1"/><line x1="10" y1="180.6" x2="13" y2="180.6" stroke="#aaa" stroke-width="1"/><line x1="0" y1="188.0" x2="13" y2="188.0" stroke="#aaa" stroke-width="1"/><text x="3" y="196.0" font-size="6.5" fill="#888" font-family="Liberation Sans">5</text><text x="3" y="203.0" font-size="6.5" fill="#888" font-family="Liberation Sans">5</text><line x1="10" y1="195.4" x2="13" y2="195.4" stroke="#aaa" stroke-width="1"/><line x1="10" y1="202.8" x2="13" y2="202.8" stroke="#aaa" stroke-width="1"/><line x1="10" y1="210.2" x2="13" y2="210.2" stroke="#aaa" stroke-width="1"/><line x1="10" y1="217.6" x2="13" y2="217.6" stroke="#aaa" stroke-width="1"/><line x1="0" y1="225.0" x2="13" y2="225.0" stroke="#aaa" stroke-width="1"/><text x="3" y="233.0" font-size="6.5" fill="#888" font-family="Liberation Sans">6</text><text x="3" y="240.0" font-size="6.5" fill="#888" font-family="Liberation Sans">6</text><line x1="10" y1="232.4" x2="13" y2="232.4" stroke="#aaa" stroke-width="1"/><line x1="10" y1="239.8" x2="13" y2="239.8" stroke="#aaa" stroke-width="1"/><line x1="10" y1="247.2" x2="13" y2="247.2" stroke="#aaa" stroke-width="1"/><line x1="10" y1="254.6" x2="13" y2="254.6" stroke="#aaa" stroke-width="1"/><line x1="0" y1="262.0" x2="13" y2="262.0" stroke="#aaa" stroke-width="1"/><text x="3" y="270.0" font-size="6.5" fill="#888" font-family="Liberation Sans">7</text><text x="3" y="277.0" font-size="6.5" fill="#888" font-family="Liberation Sans">7</text><line x1="10" y1="269.4" x2="13" y2="269.4" stroke="#aaa" stroke-width="1"/><line x1="10" y1="276.8" x2="13" y2="276.8" stroke="#aaa" stroke-width="1"/><line x1="10" y1="284.2" x2="13" y2="284.2" stroke="#aaa" stroke-width="1"/><line x1="10" y1="291.6" x2="13" y2="291.6" stroke="#aaa" stroke-width="1"/><line x1="0" y1="299.0" x2="13" y2="299.0" stroke="#aaa" stroke-width="1"/><text x="3" y="307.0" font-size="6.5" fill="#888" font-family="Liberation Sans">8</text><text x="3" y="314.0" font-size="6.5" fill="#888" font-family="Liberation Sans">8</text><line x1="10" y1="306.4" x2="13" y2="306.4" stroke="#aaa" stroke-width="1"/><line x1="10" y1="313.8" x2="13" y2="313.8" stroke="#aaa" stroke-width="1"/><line x1="10" y1="321.2" x2="13" y2="321.2" stroke="#aaa" stroke-width="1"/><line x1="10" y1="328.6" x2="13" y2="328.6" stroke="#aaa" stroke-width="1"/><line x1="0" y1="336.0" x2="13" y2="336.0" stroke="#aaa" stroke-width="1"/><text x="3" y="344.0" font-size="6.5" fill="#888" font-family="Liberation Sans">9</text><text x="3" y="351.0" font-size="6.5" fill="#888" font-family="Liberation Sans">9</text><line x1="10" y1="343.4" x2="13" y2="343.4" stroke="#aaa" stroke-width="1"/><line x1="10" y1="350.8" x2="13" y2="350.8" stroke="#aaa" stroke-width="1"/><line x1="10" y1="358.2" x2="13" y2="358.2" stroke="#aaa" stroke-width="1"/><line x1="10" y1="365.6" x2="13" y2="365.6" stroke="#aaa" stroke-width="1"/><line x1="0" y1="373.0" x2="13" y2="373.0" stroke="#aaa" stroke-width="1"/><text x="3" y="381.0" font-size="6.5" fill="#888" font-family="Liberation Sans">10</text><text x="3" y="388.0" font-size="6.5" fill="#888" font-family="Liberation Sans">10</text><line x1="10" y1="380.4" x2="13" y2="380.4" stroke="#aaa" stroke-width="1"/><line x1="10" y1="387.8" x2="13" y2="387.8" stroke="#aaa" stroke-width="1"/><line x1="10" y1="395.2" x2="13" y2="395.2" stroke="#aaa" stroke-width="1"/><line x1="10" y1="402.6" x2="13" y2="402.6" stroke="#aaa" stroke-width="1"/><line x1="0" y1="410.0" x2="13" y2="410.0" stroke="#aaa" stroke-width="1"/><text x="3" y="418.0" font-size="6.5" fill="#888" font-family="Liberation Sans">11</text><text x="3" y="425.0" font-size="6.5" fill="#888" font-family="Liberation Sans">11</text><line x1="10" y1="417.4" x2="13" y2="417.4" stroke="#aaa" stroke-width="1"/><line x1="10" y1="424.8" x2="13" y2="424.8" stroke="#aaa" stroke-width="1"/><line x1="10" y1="432.2" x2="13" y2="432.2" stroke="#aaa" stroke-width="1"/><line x1="10" y1="439.6" x2="13" y2="439.6" stroke="#aaa" stroke-width="1"/><line x1="0" y1="447.0" x2="13" y2="447.0" stroke="#aaa" stroke-width="1"/><text x="3" y="455.0" font-size="6.5" fill="#888" font-family="Liberation Sans">12</text><text x="3" y="462.0" font-size="6.5" fill="#888" font-family="Liberation Sans">12</text><line x1="10" y1="454.4" x2="13" y2="454.4" stroke="#aaa" stroke-width="1"/><line x1="10" y1="461.8" x2="13" y2="461.8" stroke="#aaa" stroke-width="1"/><line x1="10" y1="469.2" x2="13" y2="469.2" stroke="#aaa" stroke-width="1"/><line x1="10" y1="476.6" x2="13" y2="476.6" stroke="#aaa" stroke-width="1"/><line x1="0" y1="484.0" x2="13" y2="484.0" stroke="#aaa" stroke-width="1"/><text x="3" y="492.0" font-size="6.5" fill="#888" font-family="Liberation Sans">13</text><text x="3" y="499.0" font-size="6.5" fill="#888" font-family="Liberation Sans">13</text><line x1="10" y1="491.4" x2="13" y2="491.4" stroke="#aaa" stroke-width="1"/><line x1="10" y1="498.8" x2="13" y2="498.8" stroke="#aaa" stroke-width="1"/><line x1="10" y1="506.2" x2="13" y2="506.2" stroke="#aaa" stroke-width="1"/><line x1="10" y1="513.6" x2="13" y2="513.6" stroke="#aaa" stroke-width="1"/><line x1="0" y1="521.0" x2="13" y2="521.0" stroke="#aaa" stroke-width="1"/><text x="3" y="529.0" font-size="6.5" fill="#888" font-family="Liberation Sans">14</text><text x="3" y="536.0" font-size="6.5" fill="#888" font-family="Liberation Sans">14</text><line x1="10" y1="528.4" x2="13" y2="528.4" stroke="#aaa" stroke-width="1"/><line x1="10" y1="535.8" x2="13" y2="535.8" stroke="#aaa" stroke-width="1"/><line x1="10" y1="543.2" x2="13" y2="543.2" stroke="#aaa" stroke-width="1"/><line x1="10" y1="550.6" x2="13" y2="550.6" stroke="#aaa" stroke-width="1"/></svg>
<div class="a" style="left:254px;top:131px;width:1px;height:537px;background:#cfcfcf"></div>
<div class="a" style="left:268px;top:132px;width:688px;height:2px;background:#62c3c3"></div>
<div class="a" style="left:268px;top:131px;width:2px;height:537px;background:#62c3c3"></div>
<div class="a" style="left:270px;top:134px;width:686px;height:534px;background:#fff"></div>
<div class="a" style="left:956px;top:132px;width:3px;height:160px;background:#9a9a9a"></div>
<div class="a" style="left:270px;top:662px;width:686px;height:6px;background:#9c9c9c"></div>
<div class="a t " style="left:822px;top:101.0px;font-size:10px;line-height:12.0px;color:#444;font-weight:bold">×</div>
<svg class="a" style="left:833px;top:102.5px;opacity:0.84" width="18" height="9"><g stroke="#444" fill="none"><line x1="2.7" y1="1.3" x2="7.5" y2="1.3" stroke-width="1.26"/><line x1="3.3" y1="3.3" x2="6.3" y2="3.3" stroke-width="1.26"/><line x1="1.3" y1="6.0" x2="7.4" y2="6.0" stroke-width="1.26"/><line x1="3.8" y1="7.9" x2="6.3" y2="7.9" stroke-width="1.26"/><line x1="4.9" y1="2.5" x2="4.9" y2="8.8" stroke-width="1.26"/><line x1="7.1" y1="1.2" x2="7.1" y2="8.5" stroke-width="1.26"/><line x1="3.3" y1="0.9" x2="3.3" y2="7.4" stroke-width="1.26"/><line x1="11.1" y1="0.5" x2="11.1" y2="8.5" stroke-width="1.26"/><line x1="10.8" y1="0.8" x2="15.4" y2="0.8" stroke-width="1.26"/><line x1="10.9" y1="3.2" x2="14.9" y2="3.2" stroke-width="1.26"/><line x1="12.4" y1="5.8" x2="16.0" y2="5.8" stroke-width="1.26"/><line x1="11.5" y1="8.4" x2="14.9" y2="8.4" stroke-width="1.26"/><line x1="15.9" y1="0.8" x2="15.9" y2="6.4" stroke-width="1.26"/><line x1="13.6" y1="1.5" x2="13.6" y2="7.8" stroke-width="1.26"/><line x1="16.5" y1="1.8" x2="16.5" y2="8.5" stroke-width="1.26"/></g></svg>
<div class="a" style="left:871px;top:103px;width:9px;height:8px;border:1.5px solid #444"></div>
<svg class="a" style="left:882px;top:102.5px;opacity:0.89" width="18" height="9"><g stroke="#333" fill="none"><rect x="0.9" y="1.1" width="2.8" height="6.8" fill="none" stroke-width="1.26"/><line x1="0.8" y1="1.2" x2="5.6" y2="1.2" stroke-width="1.26"/><line x1="3.7" y1="2.9" x2="5.6" y2="2.9" stroke-width="1.26"/><line x1="1.1" y1="4.6" x2="7.7" y2="4.6" stroke-width="1.26"/><line x1="1.4" y1="6.4" x2="6.0" y2="6.4" stroke-width="1.26"/><line x1="2.4" y1="8.3" x2="7.7" y2="8.3" stroke-width="1.26"/><line x1="3.6" y1="2.2" x2="3.6" y2="7.2" stroke-width="1.26"/><line x1="2.2" y1="1.3" x2="2.2" y2="8.5" stroke-width="1.26"/><line x1="1.8" y1="1.7" x2="1.8" y2="6.4" stroke-width="1.26"/><line x1="12.5" y1="1.2" x2="17.1" y2="1.2" stroke-width="1.26"/><line x1="11.8" y1="3.7" x2="16.0" y2="3.7" stroke-width="1.26"/><line x1="12.4" y1="5.9" x2="15.6" y2="5.9" stroke-width="1.26"/><line x1="10.1" y1="8.0" x2="16.6" y2="8.0" stroke-width="1.26"/><line x1="14.7" y1="0.9" x2="14.7" y2="7.4" stroke-width="1.26"/><line x1="13.7" y1="0.7" x2="13.7" y2="8.7" stroke-width="1.26"/><line x1="13.3" y1="2.0" x2="13.3" y2="7.1" stroke-width="1.26"/></g></svg>
<div class="a" style="left:922px;top:103px;width:9px;height:9px;border:1.5px solid #444;border-radius:50%"></div>
<svg class="a" style="left:933px;top:102.5px;opacity:0.89" width="18" height="9"><g stroke="#333" fill="none"><line x1="2.1" y1="0.5" x2="2.1" y2="8.5" stroke-width="1.26"/><line x1="3.2" y1="1.3" x2="5.3" y2="1.3" stroke-width="1.26"/><line x1="3.4" y1="3.3" x2="6.3" y2="3.3" stroke-width="1.26"/><line x1="1.8" y1="5.4" x2="7.2" y2="5.4" stroke-width="1.26"/><line x1="2.2" y1="8.2" x2="6.9" y2="8.2" stroke-width="1.26"/><line x1="2.5" y1="0.8" x2="2.5" y2="6.8" stroke-width="1.26"/><line x1="6.1" y1="0.8" x2="6.1" y2="7.8" stroke-width="1.26"/><line x1="6.5" y1="1.3" x2="6.5" y2="7.0" stroke-width="1.26"/><line x1="12.3" y1="1.0" x2="14.6" y2="1.0" stroke-width="1.26"/><line x1="11.0" y1="3.0" x2="15.0" y2="3.0" stroke-width="1.26"/><line x1="12.4" y1="4.2" x2="17.4" y2="4.2" stroke-width="1.26"/><line x1="12.3" y1="6.6" x2="16.8" y2="6.6" stroke-width="1.26"/><line x1="12.8" y1="7.7" x2="17.1" y2="7.7" stroke-width="1.26"/><line x1="16.1" y1="1.2" x2="16.1" y2="7.0" stroke-width="1.26"/><line x1="13.0" y1="2.4" x2="13.0" y2="7.4" stroke-width="1.26"/><line x1="15.2" y1="0.4" x2="15.2" y2="8.8" stroke-width="1.26"/></g></svg>
<div class="a" style="left:314px;top:149px;width:295px;height:190px;border:1px dashed #e8e8e8"></div>
<div class="a t " style="left:336px;top:167.2px;font-size:8px;line-height:9.6px;color:#333;">content</div>
<div class="a t" style="left:320px;width:28px;text-align:right;top:183px;font-size:8px;line-height:10px;color:#333">30</div>
<div class="a" style="left:353px;top:188px;width:232px;height:1px;background:#eef0f6"></div>
<div class="a t" style="left:320px;width:28px;text-align:right;top:205px;font-size:8px;line-height:10px;color:#333">25</div>
<div class="a" style="left:353px;top:210px;width:232px;height:1px;background:#eef0f6"></div>
<div class="a t" style="left:320px;width:28px;text-align:right;top:225px;font-size:8px;line-height:10px;color:#333">20</div>
<div class="a" style="left:353px;top:230px;width:232px;height:1px;background:#eef0f6"></div>
<div class="a t" style="left:320px;width:28px;text-align:right;top:247px;font-size:8px;line-height:10px;color:#333">15</div>
<div class="a" style="left:353px;top:252px;width:232px;height:1px;background:#eef0f6"></div>
<div class="a t" style="left:320px;width:28px;text-align:right;top:268px;font-size:8px;line-height:10px;color:#333">10</div>
<div class="a" style="left:353px;top:273px;width:232px;height:1px;background:#eef0f6"></div>
<div class="a t" style="left:320px;width:28px;text-align:right;top:290px;font-size:8px;line-height:10px;color:#333">5</div>
<div class="a" style="left:353px;top:295px;width:232px;height:1px;background:#eef0f6"></div>
<div class="a t" style="left:320px;width:28px;text-align:right;top:311px;font-size:8px;line-height:10px;color:#333">0</div>
<div class="a" style="left:353px;top:316px;width:232px;height:1px;background:#eef0f6"></div>
<div class="a" style="left:351px;top:188px;width:2px;height:130px;background:#c9c9c9"></div>
<div class="a" style="left:351px;top:316px;width:234px;height:2px;background:#cfcfcf"></div>
<svg class="a" style="left:345px;top:322.0px;opacity:0.73" width="16" height="8"><g stroke="#666" fill="none"><line x1="1.9" y1="0.4" x2="1.9" y2="7.6" stroke-width="1.12"/><line x1="0.6" y1="0.8" x2="6.3" y2="0.8" stroke-width="1.12"/><line x1="1.1" y1="2.1" x2="7.3" y2="2.1" stroke-width="1.12"/><line x1="0.9" y1="3.7" x2="5.7" y2="3.7" stroke-width="1.12"/><line x1="2.2" y1="5.7" x2="7.2" y2="5.7" stroke-width="1.12"/><line x1="0.7" y1="7.4" x2="6.8" y2="7.4" stroke-width="1.12"/><line x1="1.3" y1="0.5" x2="1.3" y2="6.1" stroke-width="1.12"/><line x1="5.0" y1="1.9" x2="5.0" y2="6.7" stroke-width="1.12"/><line x1="1.4" y1="1.0" x2="1.4" y2="6.8" stroke-width="1.12"/><line x1="8.7" y1="0.6" x2="13.6" y2="0.6" stroke-width="1.12"/><line x1="10.7" y1="2.4" x2="13.7" y2="2.4" stroke-width="1.12"/><line x1="8.8" y1="4.1" x2="13.8" y2="4.1" stroke-width="1.12"/><line x1="11.5" y1="5.6" x2="15.0" y2="5.6" stroke-width="1.12"/><line x1="8.5" y1="7.3" x2="13.8" y2="7.3" stroke-width="1.12"/><line x1="10.5" y1="1.4" x2="10.5" y2="6.7" stroke-width="1.12"/><line x1="9.2" y1="2.4" x2="9.2" y2="7.5" stroke-width="1.12"/><line x1="10.3" y1="1.5" x2="10.3" y2="6.3" stroke-width="1.12"/></g></svg>
<div class="a t " style="left:447px;top:321.2px;font-size:8px;line-height:9.6px;color:#666;">72</div>
<div class="a t " style="left:542px;top:322.2px;font-size:8px;line-height:9.6px;color:#666;">aaa</div>
<svg class="a" style="left:0;top:0" width="1920" height="1080"><polyline points="351.1,305.6 354.6,310.3 361.5,265.1 366.2,311.4 368.5,304.5 371.9,305.6 374.3,187.6 377.7,312.6 385.8,312.6 390.0,252.4 392.8,312.6 402.0,306.8 409.0,306.8 413.6,298.7 419.4,312.6 429.8,312.6 435.6,286.0 439.1,312.6 447.2,308.0 451.8,312.6 457.6,311.4 463.4,273.2 468.0,312.6 478.4,312.6 481.9,304.5 485.4,311.4 488.8,308.0 492.3,312.6 513.1,312.6 516.6,306.8 520.1,311.4 522.4,306.8 525.9,312.6 545.6,312.6 549.0,305.6 552.5,310.3 556.0,303.3 559.4,312.6 580.3,312.6 584.9,306.8" fill="none" stroke="#5a78cc" stroke-width="1.6" stroke-linejoin="round"/></svg>
<svg class="a" style="left:546px;top:154px" width="60" height="16" viewBox="0 0 60 16"><g stroke="#bbb" stroke-width="1.3" fill="none"><line x1="8" y1="2" x2="8" y2="14"/><line x1="2" y1="8" x2="14" y2="8"/></g><path d="M25 5 Q29 1 33 5 L33 12 L25 12 Z" fill="none" stroke="#3a9af0" stroke-width="1.6"/><rect x="45" y="4" width="8" height="10" fill="none" stroke="#bbb" stroke-width="1.3"/><line x1="43" y1="3" x2="55" y2="3" stroke="#bbb" stroke-width="1.3"/></svg>
<div class="a" style="left:617px;top:149px;width:293px;height:200px;border:1px dashed #e8e8e8"></div>
<svg class="a" style="left:890px;top:154px" width="16" height="16"><rect x="4" y="4" width="8" height="10" fill="none" stroke="#bbb" stroke-width="1.3"/><line x1="2" y1="3" x2="14" y2="3" stroke="#bbb" stroke-width="1.3"/></svg>
<div class="a t" style="left:590px;width:59px;text-align:right;top:192px;font-size:8px;line-height:10px;color:#aaa">34yyyl</div>
<div class="a t" style="left:590px;width:59px;text-align:right;top:204px;font-size:8px;line-height:10px;color:#aaa">0</div>
<div class="a t" style="left:590px;width:59px;text-align:right;top:216px;font-size:8px;line-height:10px;color:#aaa">aaa1120</div>
<div class="a t" style="left:590px;width:59px;text-align:right;top:228px;font-size:8px;line-height:10px;color:#aaa">aaa1122</div>
<div class="a t" style="left:590px;width:59px;text-align:right;top:240px;font-size:8px;line-height:10px;color:#aaa">sql_log</div>
<div class="a t" style="left:590px;width:59px;text-align:right;top:252px;font-size:8px;line-height:10px;color:#aaa">aaa</div>
<div class="a t" style="left:590px;width:59px;text-align:right;top:263px;font-size:8px;line-height:10px;color:#aaa">22</div>
<div class="a t" style="left:590px;width:59px;text-align:right;top:275px;font-size:8px;line-height:10px;color:#aaa">test1</div>
<div class="a" style="left:653px;top:188px;width:4px;height:100px;background:#7f96d8"></div>
<div class="a" style="left:657px;top:190px;width:3px;height:98px;background:#9fd47c"></div>
<div class="a" style="left:657px;top:187px;width:8px;height:2px;background:#6c86d2"></div>
<div class="a" style="left:665px;top:187px;width:22px;height:1.5px;background:#a6d98a"></div>
<div class="a" style="left:657px;top:203px;width:12px;height:2px;background:#6c86d2"></div>
<div class="a" style="left:669px;top:203px;width:28px;height:1.5px;background:#a6d98a"></div>
<div class="a" style="left:657px;top:207px;width:6px;height:2px;background:#6c86d2"></div>
<div class="a" style="left:663px;top:207px;width:12px;height:1.5px;background:#a6d98a"></div>
<div class="a" style="left:657px;top:221px;width:10px;height:2px;background:#6c86d2"></div>
<div class="a" style="left:667px;top:221px;width:10px;height:1.5px;background:#a6d98a"></div>
<div class="a" style="left:657px;top:224px;width:10px;height:2px;background:#6c86d2"></div>
<div class="a" style="left:667px;top:224px;width:10px;height:1.5px;background:#a6d98a"></div>
<div class="a" style="left:657px;top:239px;width:12px;height:2px;background:#6c86d2"></div>
<div class="a" style="left:669px;top:239px;width:18px;height:1.5px;background:#a6d98a"></div>
<div class="a" style="left:657px;top:241px;width:8px;height:2px;background:#6c86d2"></div>
<div class="a" style="left:665px;top:241px;width:16px;height:1.5px;background:#a6d98a"></div>
<div class="a" style="left:657px;top:254px;width:35px;height:2px;background:#6c86d2"></div>
<div class="a" style="left:692px;top:254px;width:75px;height:1.5px;background:#a6d98a"></div>
<div class="a" style="left:657px;top:257px;width:12px;height:2px;background:#6c86d2"></div>
<div class="a" style="left:669px;top:257px;width:12px;height:1.5px;background:#a6d98a"></div>
<div class="a" style="left:657px;top:263px;width:6px;height:2px;background:#6c86d2"></div>
<div class="a" style="left:663px;top:263px;width:12px;height:1.5px;background:#a6d98a"></div>
<div class="a" style="left:657px;top:269px;width:24px;height:2px;background:#6c86d2"></div>
<div class="a" style="left:681px;top:269px;width:50px;height:1.5px;background:#a6d98a"></div>
<div class="a" style="left:657px;top:272px;width:12px;height:2px;background:#6c86d2"></div>
<div class="a" style="left:669px;top:272px;width:16px;height:1.5px;background:#a6d98a"></div>
<div class="a" style="left:657px;top:281px;width:12px;height:2px;background:#6c86d2"></div>
<div class="a" style="left:669px;top:281px;width:28px;height:1.5px;background:#a6d98a"></div>
<div class="a" style="left:959px;top:95px;width:177px;height:191px;background:#eaeaea"></div>
<svg class="a" style="left:970px;top:104.0px;opacity:0.79" width="54" height="9"><g stroke="#444" fill="none"><line x1="3.2" y1="1.3" x2="7.1" y2="1.3" stroke-width="1.26"/><line x1="1.2" y1="2.3" x2="6.5" y2="2.3" stroke-width="1.26"/><line x1="1.6" y1="4.1" x2="6.2" y2="4.1" stroke-width="1.26"/><line x1="2.8" y1="6.3" x2="6.7" y2="6.3" stroke-width="1.26"/><line x1="0.9" y1="8.0" x2="7.3" y2="8.0" stroke-width="1.26"/><line x1="5.6" y1="1.9" x2="5.6" y2="6.8" stroke-width="1.26"/><line x1="3.9" y1="2.3" x2="3.9" y2="7.9" stroke-width="1.26"/><rect x="9.9" y="1.1" width="2.8" height="6.8" fill="none" stroke-width="1.26"/><line x1="10.1" y1="0.7" x2="14.7" y2="0.7" stroke-width="1.26"/><line x1="9.8" y1="3.2" x2="17.2" y2="3.2" stroke-width="1.26"/><line x1="11.4" y1="5.6" x2="16.3" y2="5.6" stroke-width="1.26"/><line x1="12.5" y1="8.3" x2="15.5" y2="8.3" stroke-width="1.26"/><line x1="16.2" y1="1.7" x2="16.2" y2="8.3" stroke-width="1.26"/><line x1="14.2" y1="0.9" x2="14.2" y2="8.4" stroke-width="1.26"/><line x1="11.9" y1="2.7" x2="11.9" y2="7.7" stroke-width="1.26"/><line x1="19.6" y1="0.6" x2="24.7" y2="0.6" stroke-width="1.26"/><line x1="19.3" y1="2.8" x2="24.3" y2="2.8" stroke-width="1.26"/><line x1="18.9" y1="4.3" x2="25.6" y2="4.3" stroke-width="1.26"/><line x1="20.5" y1="6.1" x2="24.2" y2="6.1" stroke-width="1.26"/><line x1="20.7" y1="7.9" x2="24.9" y2="7.9" stroke-width="1.26"/><line x1="25.6" y1="1.4" x2="25.6" y2="8.2" stroke-width="1.26"/><line x1="24.6" y1="0.5" x2="24.6" y2="8.9" stroke-width="1.26"/><line x1="29.1" y1="0.5" x2="29.1" y2="8.5" stroke-width="1.26"/><line x1="29.2" y1="0.6" x2="33.6" y2="0.6" stroke-width="1.26"/><line x1="27.9" y1="3.2" x2="35.1" y2="3.2" stroke-width="1.26"/><line x1="30.7" y1="5.5" x2="33.7" y2="5.5" stroke-width="1.26"/><line x1="28.4" y1="8.3" x2="34.1" y2="8.3" stroke-width="1.26"/><line x1="31.9" y1="0.7" x2="31.9" y2="8.8" stroke-width="1.26"/><line x1="34.6" y1="2.2" x2="34.6" y2="7.9" stroke-width="1.26"/><rect x="36.9" y="1.1" width="2.8" height="6.8" fill="none" stroke-width="1.26"/><line x1="39.7" y1="0.7" x2="42.1" y2="0.7" stroke-width="1.26"/><line x1="39.5" y1="3.4" x2="41.9" y2="3.4" stroke-width="1.26"/><line x1="36.8" y1="5.7" x2="41.4" y2="5.7" stroke-width="1.26"/><line x1="40.1" y1="7.8" x2="44.3" y2="7.8" stroke-width="1.26"/><line x1="39.3" y1="1.8" x2="39.3" y2="8.3" stroke-width="1.26"/><line x1="39.8" y1="1.6" x2="39.8" y2="8.5" stroke-width="1.26"/><rect x="45.9" y="1.1" width="2.8" height="6.8" fill="none" stroke-width="1.26"/><line x1="47.2" y1="0.6" x2="50.7" y2="0.6" stroke-width="1.26"/><line x1="47.6" y1="3.2" x2="50.8" y2="3.2" stroke-width="1.26"/><line x1="46.5" y1="5.7" x2="52.1" y2="5.7" stroke-width="1.26"/><line x1="47.8" y1="7.9" x2="50.4" y2="7.9" stroke-width="1.26"/><line x1="48.9" y1="1.3" x2="48.9" y2="6.6" stroke-width="1.26"/><line x1="48.5" y1="2.4" x2="48.5" y2="8.8" stroke-width="1.26"/></g></svg>
<svg class="a" style="left:0;top:0" width="1920" height="1080"><path d="M968 139 L968 130 L973 134 L978 127 L983 131 L985 124 L985 139 Z" fill="#3a7ad8"/><rect x="968" y="135" width="17" height="4" fill="#e88a3a"/><circle cx="1003" cy="131.5" r="8" fill="#f0643c"/><path d="M1003 131.5 L1003 123.5 A8 8 0 0 1 1010 128 Z" fill="#39bfb0"/><path d="M1003 131.5 L1010 128 A8 8 0 0 1 1009 137 Z" fill="#3a7af0"/><rect x="1021" y="124" width="16" height="15" fill="#5a8ef0"/><rect x="1025" y="130" width="2" height="6" fill="#c8d8ff"/><rect x="1030" y="128" width="2" height="8" fill="#c8d8ff"/><rect x="1048" y="124" width="17" height="15" fill="#6cc08a"/><g stroke="#c8ecd0" stroke-width="1"><line x1="1048" y1="129" x2="1065" y2="129"/><line x1="1048" y1="134" x2="1065" y2="134"/><line x1="1054" y1="124" x2="1054" y2="139"/><line x1="1059" y1="124" x2="1059" y2="139"/></g><path d="M1076 128 L1080 132 L1086 126 L1091 124 L1089 132 L1083 137 Z" fill="#3a88d8"/><rect x="1103" y="125" width="17" height="13" fill="#9ab0d0"/><rect x="1104" y="129" width="15" height="4" fill="#3a60b8"/><rect x="1113" y="129" width="6" height="4" fill="#60c060"/><rect x="968" y="152" width="16" height="13" fill="none" stroke="#b8e0a0" stroke-width="1.5"/><rect x="996" y="152" width="14" height="14" fill="#dde4f0"/><path d="M1003 155 L1003 162" stroke="#4a9af0" stroke-width="1.5"/><rect x="1021" y="152" width="17" height="15" fill="#c0cce0"/><rect x="1022" y="154" width="15" height="2.5" fill="#4a7ad0"/><rect x="1022" y="158.5" width="15" height="2.5" fill="#3a5aa0"/><rect x="1022" y="163" width="15" height="2.5" fill="#5aaa6a"/><circle cx="1056.5" cy="159" r="6.5" fill="none" stroke="#3cc0a8" stroke-width="2.5"/><path d="M1050 159 A6.5 6.5 0 0 1 1056.5 152.5" fill="none" stroke="#3a7af0" stroke-width="2.5"/><circle cx="1083" cy="159" r="6.5" fill="#3a80f0"/><circle cx="1085" cy="161" r="3.5" fill="#3cc0a0"/><rect x="1103" y="152" width="17" height="14" fill="#2a90e0"/><rect x="1106" y="150" width="2" height="4" fill="#2a90e0"/><rect x="1115" y="150" width="2" height="4" fill="#2a90e0"/><rect x="968" y="178" width="16" height="17" rx="6" fill="#6aa0f8"/><rect x="971" y="186" width="10" height="7" fill="#b8d0ff"/><rect x="995" y="185" width="16" height="3" fill="#4ab090"/><path d="M970 227 L988 227 L988 232 L982 232 L982 241 L977 241 L977 232 L970 232 Z" fill="#f4a82a"/></svg>
<svg class="a" style="left:970px;top:207.5px;opacity:0.79" width="27" height="9"><g stroke="#555" fill="none"><line x1="4.1" y1="0.9" x2="7.9" y2="0.9" stroke-width="1.26"/><line x1="2.0" y1="3.0" x2="6.7" y2="3.0" stroke-width="1.26"/><line x1="3.8" y1="4.6" x2="7.0" y2="4.6" stroke-width="1.26"/><line x1="2.1" y1="6.3" x2="8.2" y2="6.3" stroke-width="1.26"/><line x1="0.7" y1="7.9" x2="7.6" y2="7.9" stroke-width="1.26"/><line x1="6.0" y1="1.6" x2="6.0" y2="8.3" stroke-width="1.26"/><line x1="3.3" y1="1.6" x2="3.3" y2="6.5" stroke-width="1.26"/><line x1="2.1" y1="1.2" x2="2.1" y2="7.7" stroke-width="1.26"/><line x1="9.9" y1="0.9" x2="17.2" y2="0.9" stroke-width="1.26"/><line x1="11.9" y1="3.3" x2="17.3" y2="3.3" stroke-width="1.26"/><line x1="13.1" y1="6.0" x2="16.6" y2="6.0" stroke-width="1.26"/><line x1="10.9" y1="8.4" x2="16.0" y2="8.4" stroke-width="1.26"/><line x1="11.7" y1="2.0" x2="11.7" y2="7.8" stroke-width="1.26"/><line x1="16.1" y1="0.3" x2="16.1" y2="8.4" stroke-width="1.26"/><rect x="18.9" y="1.1" width="2.8" height="6.8" fill="none" stroke-width="1.26"/><line x1="19.4" y1="0.5" x2="24.2" y2="0.5" stroke-width="1.26"/><line x1="18.8" y1="2.5" x2="26.1" y2="2.5" stroke-width="1.26"/><line x1="20.0" y1="4.8" x2="24.4" y2="4.8" stroke-width="1.26"/><line x1="18.7" y1="6.4" x2="23.4" y2="6.4" stroke-width="1.26"/><line x1="19.6" y1="8.5" x2="24.9" y2="8.5" stroke-width="1.26"/><line x1="24.9" y1="0.5" x2="24.9" y2="8.6" stroke-width="1.26"/><line x1="23.7" y1="0.2" x2="23.7" y2="7.2" stroke-width="1.26"/><line x1="24.8" y1="2.4" x2="24.8" y2="6.3" stroke-width="1.26"/></g></svg>
<svg class="a" style="left:970px;top:253.5px;opacity:0.79" width="36" height="9"><g stroke="#444" fill="none"><line x1="2.1" y1="0.5" x2="2.1" y2="8.5" stroke-width="1.26"/><line x1="3.7" y1="0.6" x2="5.5" y2="0.6" stroke-width="1.26"/><line x1="3.1" y1="2.9" x2="6.3" y2="2.9" stroke-width="1.26"/><line x1="3.6" y1="6.1" x2="7.6" y2="6.1" stroke-width="1.26"/><line x1="3.0" y1="7.8" x2="8.3" y2="7.8" stroke-width="1.26"/><line x1="4.0" y1="0.5" x2="4.0" y2="8.6" stroke-width="1.26"/><line x1="2.1" y1="1.9" x2="2.1" y2="7.0" stroke-width="1.26"/><line x1="5.9" y1="1.4" x2="5.9" y2="7.1" stroke-width="1.26"/><line x1="11.4" y1="1.2" x2="14.7" y2="1.2" stroke-width="1.26"/><line x1="13.0" y1="2.7" x2="17.1" y2="2.7" stroke-width="1.26"/><line x1="10.3" y1="4.2" x2="14.7" y2="4.2" stroke-width="1.26"/><line x1="11.2" y1="6.5" x2="14.5" y2="6.5" stroke-width="1.26"/><line x1="9.8" y1="8.5" x2="17.2" y2="8.5" stroke-width="1.26"/><line x1="14.1" y1="0.8" x2="14.1" y2="7.0" stroke-width="1.26"/><line x1="15.4" y1="0.2" x2="15.4" y2="7.1" stroke-width="1.26"/><line x1="20.1" y1="0.5" x2="20.1" y2="8.5" stroke-width="1.26"/><line x1="21.2" y1="0.6" x2="23.4" y2="0.6" stroke-width="1.26"/><line x1="19.1" y1="3.6" x2="26.1" y2="3.6" stroke-width="1.26"/><line x1="21.8" y1="5.8" x2="25.1" y2="5.8" stroke-width="1.26"/><line x1="21.7" y1="7.7" x2="23.5" y2="7.7" stroke-width="1.26"/><line x1="22.9" y1="1.7" x2="22.9" y2="7.3" stroke-width="1.26"/><line x1="23.5" y1="2.1" x2="23.5" y2="7.7" stroke-width="1.26"/><line x1="29.1" y1="0.5" x2="29.1" y2="8.5" stroke-width="1.26"/><line x1="29.1" y1="0.6" x2="34.4" y2="0.6" stroke-width="1.26"/><line x1="28.5" y1="3.3" x2="34.6" y2="3.3" stroke-width="1.26"/><line x1="28.5" y1="5.9" x2="34.0" y2="5.9" stroke-width="1.26"/><line x1="29.7" y1="8.4" x2="33.1" y2="8.4" stroke-width="1.26"/><line x1="32.1" y1="1.9" x2="32.1" y2="7.8" stroke-width="1.26"/><line x1="33.9" y1="0.5" x2="33.9" y2="6.7" stroke-width="1.26"/></g></svg>
<svg class="a" style="left:970px;top:274.5px;opacity:0.63" width="36" height="9"><g stroke="#666" fill="none"><rect x="0.9" y="1.1" width="2.8" height="6.8" fill="none" stroke-width="1.26"/><line x1="2.3" y1="1.2" x2="7.6" y2="1.2" stroke-width="1.26"/><line x1="0.7" y1="3.0" x2="5.7" y2="3.0" stroke-width="1.26"/><line x1="2.8" y1="4.2" x2="7.1" y2="4.2" stroke-width="1.26"/><line x1="2.8" y1="6.5" x2="5.5" y2="6.5" stroke-width="1.26"/><line x1="3.0" y1="8.0" x2="7.9" y2="8.0" stroke-width="1.26"/><line x1="6.2" y1="1.3" x2="6.2" y2="8.1" stroke-width="1.26"/><line x1="4.6" y1="1.0" x2="4.6" y2="7.0" stroke-width="1.26"/><line x1="4.5" y1="1.8" x2="4.5" y2="7.9" stroke-width="1.26"/><line x1="11.2" y1="0.7" x2="16.5" y2="0.7" stroke-width="1.26"/><line x1="13.0" y1="3.5" x2="14.7" y2="3.5" stroke-width="1.26"/><line x1="11.7" y1="5.9" x2="14.7" y2="5.9" stroke-width="1.26"/><line x1="11.4" y1="8.3" x2="17.4" y2="8.3" stroke-width="1.26"/><line x1="11.9" y1="2.4" x2="11.9" y2="6.7" stroke-width="1.26"/><line x1="12.8" y1="0.8" x2="12.8" y2="7.4" stroke-width="1.26"/><rect x="18.9" y="1.1" width="2.8" height="6.8" fill="none" stroke-width="1.26"/><line x1="21.1" y1="1.1" x2="26.4" y2="1.1" stroke-width="1.26"/><line x1="19.6" y1="3.4" x2="23.7" y2="3.4" stroke-width="1.26"/><line x1="20.0" y1="6.0" x2="23.6" y2="6.0" stroke-width="1.26"/><line x1="19.6" y1="7.9" x2="26.3" y2="7.9" stroke-width="1.26"/><line x1="19.6" y1="1.1" x2="19.6" y2="8.1" stroke-width="1.26"/><line x1="19.7" y1="0.9" x2="19.7" y2="8.2" stroke-width="1.26"/><line x1="29.1" y1="0.5" x2="29.1" y2="8.5" stroke-width="1.26"/><line x1="30.9" y1="1.2" x2="33.0" y2="1.2" stroke-width="1.26"/><line x1="27.7" y1="2.6" x2="33.6" y2="2.6" stroke-width="1.26"/><line x1="30.4" y1="4.3" x2="34.8" y2="4.3" stroke-width="1.26"/><line x1="29.0" y1="6.3" x2="34.2" y2="6.3" stroke-width="1.26"/><line x1="29.2" y1="8.3" x2="33.8" y2="8.3" stroke-width="1.26"/><line x1="33.8" y1="0.6" x2="33.8" y2="7.3" stroke-width="1.26"/><line x1="28.8" y1="1.9" x2="28.8" y2="7.3" stroke-width="1.26"/></g></svg>
<svg class="a" style="left:1015px;top:274.5px;opacity:0.63" width="36" height="9"><g stroke="#666" fill="none"><line x1="3.2" y1="0.9" x2="6.9" y2="0.9" stroke-width="1.26"/><line x1="2.9" y1="3.4" x2="6.0" y2="3.4" stroke-width="1.26"/><line x1="0.7" y1="5.3" x2="7.6" y2="5.3" stroke-width="1.26"/><line x1="1.0" y1="8.3" x2="6.1" y2="8.3" stroke-width="1.26"/><line x1="1.5" y1="0.9" x2="1.5" y2="7.3" stroke-width="1.26"/><line x1="1.9" y1="2.4" x2="1.9" y2="7.2" stroke-width="1.26"/><rect x="9.9" y="1.1" width="2.8" height="6.8" fill="none" stroke-width="1.26"/><line x1="10.4" y1="0.8" x2="14.4" y2="0.8" stroke-width="1.26"/><line x1="11.7" y1="2.4" x2="14.4" y2="2.4" stroke-width="1.26"/><line x1="11.1" y1="4.3" x2="16.0" y2="4.3" stroke-width="1.26"/><line x1="12.1" y1="6.0" x2="15.1" y2="6.0" stroke-width="1.26"/><line x1="11.9" y1="8.3" x2="14.8" y2="8.3" stroke-width="1.26"/><line x1="15.6" y1="1.4" x2="15.6" y2="7.5" stroke-width="1.26"/><line x1="11.2" y1="1.4" x2="11.2" y2="7.3" stroke-width="1.26"/><rect x="18.9" y="1.1" width="2.8" height="6.8" fill="none" stroke-width="1.26"/><line x1="20.7" y1="0.8" x2="23.7" y2="0.8" stroke-width="1.26"/><line x1="21.2" y1="3.0" x2="24.8" y2="3.0" stroke-width="1.26"/><line x1="21.3" y1="4.1" x2="25.6" y2="4.1" stroke-width="1.26"/><line x1="18.8" y1="6.4" x2="26.0" y2="6.4" stroke-width="1.26"/><line x1="19.8" y1="8.2" x2="23.7" y2="8.2" stroke-width="1.26"/><line x1="20.8" y1="1.7" x2="20.8" y2="6.5" stroke-width="1.26"/><line x1="22.0" y1="1.1" x2="22.0" y2="6.5" stroke-width="1.26"/><line x1="21.8" y1="0.9" x2="21.8" y2="7.6" stroke-width="1.26"/><line x1="29.0" y1="0.6" x2="33.8" y2="0.6" stroke-width="1.26"/><line x1="29.9" y1="3.0" x2="33.1" y2="3.0" stroke-width="1.26"/><line x1="28.8" y1="5.3" x2="33.6" y2="5.3" stroke-width="1.26"/><line x1="29.6" y1="7.8" x2="34.5" y2="7.8" stroke-width="1.26"/><line x1="32.8" y1="0.1" x2="32.8" y2="7.4" stroke-width="1.26"/><line x1="30.6" y1="0.2" x2="30.6" y2="7.4" stroke-width="1.26"/><line x1="28.7" y1="1.3" x2="28.7" y2="7.9" stroke-width="1.26"/></g></svg>
<svg class="a" style="left:1061px;top:274.5px;opacity:0.63" width="36" height="9"><g stroke="#666" fill="none"><line x1="0.8" y1="1.2" x2="5.4" y2="1.2" stroke-width="1.26"/><line x1="1.9" y1="2.5" x2="6.2" y2="2.5" stroke-width="1.26"/><line x1="3.7" y1="4.8" x2="7.3" y2="4.8" stroke-width="1.26"/><line x1="1.8" y1="6.2" x2="8.1" y2="6.2" stroke-width="1.26"/><line x1="3.1" y1="7.7" x2="6.0" y2="7.7" stroke-width="1.26"/><line x1="5.3" y1="1.7" x2="5.3" y2="7.4" stroke-width="1.26"/><line x1="4.0" y1="0.7" x2="4.0" y2="8.5" stroke-width="1.26"/><line x1="10.9" y1="1.3" x2="16.8" y2="1.3" stroke-width="1.26"/><line x1="10.5" y1="2.9" x2="15.9" y2="2.9" stroke-width="1.26"/><line x1="9.6" y1="4.5" x2="16.2" y2="4.5" stroke-width="1.26"/><line x1="10.5" y1="6.1" x2="15.0" y2="6.1" stroke-width="1.26"/><line x1="12.8" y1="8.1" x2="17.4" y2="8.1" stroke-width="1.26"/><line x1="11.8" y1="1.3" x2="11.8" y2="8.1" stroke-width="1.26"/><line x1="13.8" y1="1.7" x2="13.8" y2="7.8" stroke-width="1.26"/><line x1="21.7" y1="0.8" x2="24.3" y2="0.8" stroke-width="1.26"/><line x1="21.0" y1="2.9" x2="25.5" y2="2.9" stroke-width="1.26"/><line x1="21.5" y1="4.9" x2="23.8" y2="4.9" stroke-width="1.26"/><line x1="20.3" y1="6.4" x2="25.1" y2="6.4" stroke-width="1.26"/><line x1="19.6" y1="8.0" x2="25.7" y2="8.0" stroke-width="1.26"/><line x1="20.8" y1="0.7" x2="20.8" y2="7.2" stroke-width="1.26"/><line x1="20.5" y1="1.4" x2="20.5" y2="6.6" stroke-width="1.26"/><line x1="19.7" y1="0.2" x2="19.7" y2="6.6" stroke-width="1.26"/><line x1="29.4" y1="1.2" x2="34.4" y2="1.2" stroke-width="1.26"/><line x1="29.8" y1="2.9" x2="33.6" y2="2.9" stroke-width="1.26"/><line x1="28.8" y1="5.7" x2="33.6" y2="5.7" stroke-width="1.26"/><line x1="30.0" y1="8.3" x2="33.1" y2="8.3" stroke-width="1.26"/><line x1="30.7" y1="1.8" x2="30.7" y2="6.8" stroke-width="1.26"/><line x1="33.8" y1="0.6" x2="33.8" y2="7.8" stroke-width="1.26"/><line x1="29.2" y1="2.7" x2="29.2" y2="8.0" stroke-width="1.26"/></g></svg>
<svg class="a" style="left:0;top:0" width="1920" height="1080"><path d="M441.7,474.6 L441.70,399.60 A75,75 0 0 1 444.32,399.65 Z" fill="#ee6666" stroke="#ee6666" stroke-width="0.4"/><path d="M441.7,474.6 L444.32,399.65 A75,75 0 0 1 446.93,399.78 Z" fill="#5470c6" stroke="#5470c6" stroke-width="0.4"/><path d="M441.7,474.6 L446.93,399.78 A75,75 0 0 1 449.54,400.01 Z" fill="#fac858" stroke="#fac858" stroke-width="0.4"/><path d="M441.7,474.6 L449.54,400.01 A75,75 0 0 1 453.43,400.52 Z" fill="#91cc75" stroke="#91cc75" stroke-width="0.4"/><path d="M441.7,474.6 L453.43,400.52 A75,75 0 0 1 483.64,412.42 Z" fill="#ee6666" stroke="#ee6666" stroke-width="0.4"/><path d="M441.7,474.6 L483.64,412.42 A75,75 0 0 1 485.78,413.92 Z" fill="#73c0de" stroke="#73c0de" stroke-width="0.4"/><path d="M441.7,474.6 L485.78,413.92 A75,75 0 0 1 488.90,416.31 Z" fill="#3ba272" stroke="#3ba272" stroke-width="0.4"/><path d="M441.7,474.6 L488.90,416.31 A75,75 0 0 1 490.90,418.00 Z" fill="#fc8452" stroke="#fc8452" stroke-width="0.4"/><path d="M441.7,474.6 L490.90,418.00 A75,75 0 0 1 493.80,420.65 Z" fill="#ee6666" stroke="#ee6666" stroke-width="0.4"/><path d="M441.7,474.6 L493.80,420.65 A75,75 0 0 1 510.74,503.90 Z" fill="#9a60b4" stroke="#9a60b4" stroke-width="0.4"/><path d="M441.7,474.6 L510.74,503.90 A75,75 0 0 1 509.67,506.30 Z" fill="#ea7ccc" stroke="#ea7ccc" stroke-width="0.4"/><path d="M441.7,474.6 L509.67,506.30 A75,75 0 0 1 508.53,508.65 Z" fill="#5470c6" stroke="#5470c6" stroke-width="0.4"/><path d="M441.7,474.6 L508.53,508.65 A75,75 0 0 1 507.30,510.96 Z" fill="#fac858" stroke="#fac858" stroke-width="0.4"/><path d="M441.7,474.6 L507.30,510.96 A75,75 0 0 1 475.75,541.43 Z" fill="#ee6666" stroke="#ee6666" stroke-width="0.4"/><path d="M441.7,474.6 L475.75,541.43 A75,75 0 0 1 472.21,543.12 Z" fill="#73c0de" stroke="#73c0de" stroke-width="0.4"/><path d="M441.7,474.6 L472.21,543.12 A75,75 0 0 1 469.80,544.14 Z" fill="#91cc75" stroke="#91cc75" stroke-width="0.4"/><path d="M441.7,474.6 L469.80,544.14 A75,75 0 0 1 464.88,545.93 Z" fill="#fc8452" stroke="#fc8452" stroke-width="0.4"/><path d="M441.7,474.6 L464.88,545.93 A75,75 0 0 1 459.84,547.37 Z" fill="#5470c6" stroke="#5470c6" stroke-width="0.4"/><path d="M441.7,474.6 L459.84,547.37 A75,75 0 0 1 454.72,548.46 Z" fill="#ea7ccc" stroke="#ea7ccc" stroke-width="0.4"/><path d="M441.7,474.6 L454.72,548.46 A75,75 0 0 1 450.84,549.04 Z" fill="#9a60b4" stroke="#9a60b4" stroke-width="0.4"/><path d="M441.7,474.6 L450.84,549.04 A75,75 0 0 1 441.70,549.60 Z" fill="#5470c6" stroke="#5470c6" stroke-width="0.4"/><path d="M441.7,474.6 L441.70,549.60 A75,75 0 0 1 433.86,549.19 Z" fill="#fac858" stroke="#fac858" stroke-width="0.4"/><path d="M441.7,474.6 L433.86,549.19 A75,75 0 0 1 429.97,548.68 Z" fill="#ee6666" stroke="#ee6666" stroke-width="0.4"/><path d="M441.7,474.6 L429.97,548.68 A75,75 0 0 1 426.11,547.96 Z" fill="#91cc75" stroke="#91cc75" stroke-width="0.4"/><path d="M441.7,474.6 L426.11,547.96 A75,75 0 0 1 421.03,546.69 Z" fill="#ea7ccc" stroke="#ea7ccc" stroke-width="0.4"/><path d="M441.7,474.6 L421.03,546.69 A75,75 0 0 1 416.05,545.08 Z" fill="#9a60b4" stroke="#9a60b4" stroke-width="0.4"/><path d="M441.7,474.6 L416.05,545.08 A75,75 0 0 1 398.68,536.04 Z" fill="#5470c6" stroke="#5470c6" stroke-width="0.4"/><path d="M441.7,474.6 L398.68,536.04 A75,75 0 0 1 395.53,533.70 Z" fill="#ea7ccc" stroke="#ea7ccc" stroke-width="0.4"/><path d="M441.7,474.6 L395.53,533.70 A75,75 0 0 1 392.50,531.20 Z" fill="#91cc75" stroke="#91cc75" stroke-width="0.4"/><path d="M441.7,474.6 L392.50,531.20 A75,75 0 0 1 389.60,528.55 Z" fill="#fc8452" stroke="#fc8452" stroke-width="0.4"/><path d="M441.7,474.6 L389.60,528.55 A75,75 0 0 1 386.85,525.75 Z" fill="#fac858" stroke="#fac858" stroke-width="0.4"/><path d="M441.7,474.6 L386.85,525.75 A75,75 0 0 1 384.25,522.81 Z" fill="#73c0de" stroke="#73c0de" stroke-width="0.4"/><path d="M441.7,474.6 L384.25,522.81 A75,75 0 0 1 381.80,519.74 Z" fill="#ea7ccc" stroke="#ea7ccc" stroke-width="0.4"/><path d="M441.7,474.6 L381.80,519.74 A75,75 0 0 1 379.52,516.54 Z" fill="#ee6666" stroke="#ee6666" stroke-width="0.4"/><path d="M441.7,474.6 L379.52,516.54 A75,75 0 0 1 368.93,492.74 Z" fill="#5470c6" stroke="#5470c6" stroke-width="0.4"/><path d="M441.7,474.6 L368.93,492.74 A75,75 0 0 1 367.84,487.62 Z" fill="#fc8452" stroke="#fc8452" stroke-width="0.4"/><path d="M441.7,474.6 L367.84,487.62 A75,75 0 0 1 367.43,485.04 Z" fill="#91cc75" stroke="#91cc75" stroke-width="0.4"/><path d="M441.7,474.6 L367.43,485.04 A75,75 0 0 1 366.99,481.14 Z" fill="#fac858" stroke="#fac858" stroke-width="0.4"/><path d="M441.7,474.6 L366.99,481.14 A75,75 0 0 1 366.75,477.22 Z" fill="#ea7ccc" stroke="#ea7ccc" stroke-width="0.4"/><path d="M441.7,474.6 L366.75,477.22 A75,75 0 0 1 366.75,471.98 Z" fill="#fc8452" stroke="#fc8452" stroke-width="0.4"/><path d="M441.7,474.6 L366.75,471.98 A75,75 0 0 1 367.00,467.88 Z" fill="#ea7ccc" stroke="#ea7ccc" stroke-width="0.4"/><path d="M441.7,474.6 L367.00,467.88 A75,75 0 0 1 367.48,463.79 Z" fill="#91cc75" stroke="#91cc75" stroke-width="0.4"/><path d="M441.7,474.6 L367.48,463.79 A75,75 0 0 1 368.19,459.74 Z" fill="#fac858" stroke="#fac858" stroke-width="0.4"/><path d="M441.7,474.6 L368.19,459.74 A75,75 0 0 1 369.11,455.73 Z" fill="#fc8452" stroke="#fc8452" stroke-width="0.4"/><path d="M441.7,474.6 L369.11,455.73 A75,75 0 0 1 370.26,451.78 Z" fill="#ee6666" stroke="#ee6666" stroke-width="0.4"/><path d="M441.7,474.6 L370.26,451.78 A75,75 0 0 1 371.61,447.90 Z" fill="#9a60b4" stroke="#9a60b4" stroke-width="0.4"/><path d="M441.7,474.6 L371.61,447.90 A75,75 0 0 1 373.18,444.09 Z" fill="#73c0de" stroke="#73c0de" stroke-width="0.4"/><path d="M441.7,474.6 L373.18,444.09 A75,75 0 0 1 374.96,440.38 Z" fill="#3ba272" stroke="#3ba272" stroke-width="0.4"/><path d="M441.7,474.6 L374.96,440.38 A75,75 0 0 1 376.94,436.78 Z" fill="#5470c6" stroke="#5470c6" stroke-width="0.4"/><path d="M441.7,474.6 L376.94,436.78 A75,75 0 0 1 379.11,433.28 Z" fill="#ea7ccc" stroke="#ea7ccc" stroke-width="0.4"/><path d="M441.7,474.6 L379.11,433.28 A75,75 0 0 1 381.47,429.91 Z" fill="#fac858" stroke="#fac858" stroke-width="0.4"/><path d="M441.7,474.6 L381.47,429.91 A75,75 0 0 1 384.01,426.68 Z" fill="#91cc75" stroke="#91cc75" stroke-width="0.4"/><path d="M441.7,474.6 L384.01,426.68 A75,75 0 0 1 386.72,423.59 Z" fill="#ee6666" stroke="#ee6666" stroke-width="0.4"/><path d="M441.7,474.6 L386.72,423.59 A75,75 0 0 1 389.60,420.65 Z" fill="#fc8452" stroke="#fc8452" stroke-width="0.4"/><path d="M441.7,474.6 L389.60,420.65 A75,75 0 0 1 392.64,417.87 Z" fill="#9a60b4" stroke="#9a60b4" stroke-width="0.4"/><path d="M441.7,474.6 L392.64,417.87 A75,75 0 0 1 395.82,415.27 Z" fill="#73c0de" stroke="#73c0de" stroke-width="0.4"/><path d="M441.7,474.6 L395.82,415.27 A75,75 0 0 1 399.14,412.84 Z" fill="#ea7ccc" stroke="#ea7ccc" stroke-width="0.4"/><path d="M441.7,474.6 L399.14,412.84 A75,75 0 0 1 402.59,410.60 Z" fill="#3ba272" stroke="#3ba272" stroke-width="0.4"/><path d="M441.7,474.6 L402.59,410.60 A75,75 0 0 1 406.16,408.56 Z" fill="#fac858" stroke="#fac858" stroke-width="0.4"/><path d="M441.7,474.6 L406.16,408.56 A75,75 0 0 1 409.83,406.71 Z" fill="#ee6666" stroke="#ee6666" stroke-width="0.4"/><path d="M441.7,474.6 L409.83,406.71 A75,75 0 0 1 413.60,405.06 Z" fill="#91cc75" stroke="#91cc75" stroke-width="0.4"/><path d="M441.7,474.6 L413.60,405.06 A75,75 0 0 1 417.46,403.63 Z" fill="#5470c6" stroke="#5470c6" stroke-width="0.4"/><path d="M441.7,474.6 L417.46,403.63 A75,75 0 0 1 421.39,402.40 Z" fill="#ea7ccc" stroke="#ea7ccc" stroke-width="0.4"/><path d="M441.7,474.6 L421.39,402.40 A75,75 0 0 1 425.38,401.40 Z" fill="#fc8452" stroke="#fc8452" stroke-width="0.4"/><path d="M441.7,474.6 L425.38,401.40 A75,75 0 0 1 429.41,400.61 Z" fill="#fac858" stroke="#fac858" stroke-width="0.4"/><path d="M441.7,474.6 L429.41,400.61 A75,75 0 0 1 433.49,400.05 Z" fill="#9a60b4" stroke="#9a60b4" stroke-width="0.4"/><path d="M441.7,474.6 L433.49,400.05 A75,75 0 0 1 437.59,399.71 Z" fill="#91cc75" stroke="#91cc75" stroke-width="0.4"/><path d="M441.7,474.6 L437.59,399.71 A75,75 0 0 1 441.70,399.60 Z" fill="#ee6666" stroke="#ee6666" stroke-width="0.4"/><polyline points="352,424 364,424 387.8,419.6" fill="none" stroke="#5470c6" stroke-width="0.9" opacity=".8"/><polyline points="352,432 364,432 381.3,426.8" fill="none" stroke="#91cc75" stroke-width="0.9" opacity=".8"/><polyline points="352,440 364,440 375.8,434.8" fill="none" stroke="#fac858" stroke-width="0.9" opacity=".8"/><polyline points="352,448 364,448 371.3,443.4" fill="none" stroke="#ee6666" stroke-width="0.9" opacity=".8"/><polyline points="352,456 364,456 368.0,452.4" fill="none" stroke="#73c0de" stroke-width="0.9" opacity=".8"/><polyline points="352,464 364,464 365.8,461.8" fill="none" stroke="#3ba272" stroke-width="0.9" opacity=".8"/><polyline points="352,472 364,472 364.8,471.5" fill="none" stroke="#fc8452" stroke-width="0.9" opacity=".8"/><polyline points="352,480 364,480 365.0,481.1" fill="none" stroke="#9a60b4" stroke-width="0.9" opacity=".8"/><polyline points="352,488 364,488 366.4,490.7" fill="none" stroke="#ea7ccc" stroke-width="0.9" opacity=".8"/><polyline points="352,496 364,496 369.0,500.0" fill="none" stroke="#5470c6" stroke-width="0.9" opacity=".8"/><polyline points="352,504 364,504 372.8,508.9" fill="none" stroke="#91cc75" stroke-width="0.9" opacity=".8"/><polyline points="352,512 364,512 377.6,517.3" fill="none" stroke="#fac858" stroke-width="0.9" opacity=".8"/><polyline points="530,428 520,428 499.0,423.1" fill="none" stroke="#ee6666" stroke-width="0.9" opacity=".8"/><polyline points="530,437 520,437 505.7,431.7" fill="none" stroke="#73c0de" stroke-width="0.9" opacity=".8"/><polyline points="530,446 520,446 511.1,441.2" fill="none" stroke="#3ba272" stroke-width="0.9" opacity=".8"/><polyline points="530,455 520,455 515.1,451.3" fill="none" stroke="#fc8452" stroke-width="0.9" opacity=".8"/><polyline points="530,464 520,464 517.6,461.8" fill="none" stroke="#9a60b4" stroke-width="0.9" opacity=".8"/><polyline points="530,473 520,473 518.7,472.7" fill="none" stroke="#ea7ccc" stroke-width="0.9" opacity=".8"/><polyline points="530,482 520,482 518.2,483.5" fill="none" stroke="#5470c6" stroke-width="0.9" opacity=".8"/><polyline points="530,491 520,491 516.2,494.2" fill="none" stroke="#91cc75" stroke-width="0.9" opacity=".8"/><polyline points="530,500 520,500 512.7,504.5" fill="none" stroke="#fac858" stroke-width="0.9" opacity=".8"/><polyline points="530,509 520,509 507.7,514.2" fill="none" stroke="#ee6666" stroke-width="0.9" opacity=".8"/><polyline points="530,518 520,518 501.5,523.1" fill="none" stroke="#73c0de" stroke-width="0.9" opacity=".8"/><polyline points="530,527 520,527 494.1,531.1" fill="none" stroke="#3ba272" stroke-width="0.9" opacity=".8"/><polyline points="424,379 437,379 437,399" fill="none" stroke="#ee6666" stroke-width="0.9"/><polyline points="456,379 445,379 445,399" fill="none" stroke="#5470c6" stroke-width="0.9"/><polyline points="388,391 420,391 433,399" fill="none" stroke="#fac858" stroke-width="0.9"/><polyline points="372,406 400,404 420,400" fill="none" stroke="#5470c6" stroke-width="0.9"/><polyline points="368,417 395,412 410,405" fill="none" stroke="#ee6666" stroke-width="0.9"/><polyline points="490,391 470,397 450,399" fill="none" stroke="#91cc75" stroke-width="0.9"/><polyline points="508,403 480,402 470,401" fill="none" stroke="#fac858" stroke-width="0.9"/><polyline points="517,416 500,412 490,410" fill="none" stroke="#ee6666" stroke-width="0.9"/><polyline points="356,518 375,518 385,522" fill="none" stroke="#ea7ccc" stroke-width="0.9"/><polyline points="364,531 385,531 395,535" fill="none" stroke="#73c0de" stroke-width="0.9"/><polyline points="377,544 400,544 410,543" fill="none" stroke="#5470c6" stroke-width="0.9"/><polyline points="398,556 420,552 432,550" fill="none" stroke="#91cc75" stroke-width="0.9"/><polyline points="423,561 435,561 437,550" fill="none" stroke="#ee6666" stroke-width="0.9"/><polyline points="456,567 445,567 445,550" fill="none" stroke="#fac858" stroke-width="0.9"/><polyline points="486,558 470,556 455,549" fill="none" stroke="#91cc75" stroke-width="0.9"/><rect x="341" y="371" width="201" height="206" fill="none" stroke="#e4e4e4" stroke-width="0.8"/><circle cx="341" cy="371" r="3" fill="#fff" stroke="#999" stroke-width="0.9"/><circle cx="341" cy="474" r="3" fill="#fff" stroke="#999" stroke-width="0.9"/><circle cx="341" cy="577" r="3" fill="#fff" stroke="#999" stroke-width="0.9"/><circle cx="442" cy="371" r="3" fill="#fff" stroke="#999" stroke-width="0.9"/><circle cx="442" cy="577" r="3" fill="#fff" stroke="#999" stroke-width="0.9"/><circle cx="542" cy="371" r="3" fill="#fff" stroke="#999" stroke-width="0.9"/><circle cx="542" cy="474" r="3" fill="#fff" stroke="#999" stroke-width="0.9"/><circle cx="542" cy="577" r="3" fill="#fff" stroke="#999" stroke-width="0.9"/><g stroke="#c8c8c8" stroke-width="1.1" fill="none"><line x1="489" y1="375" x2="489" y2="386"/><line x1="483" y1="380" x2="495" y2="380"/><path d="M503 384 Q508 375 513 384"/><rect x="525" y="376" width="7" height="9"/></g></svg>
<div class="a t " style="left:350px;top:374.2px;font-size:8px;line-height:9.6px;color:#444;">Screen(mysql-test)</div>
<div class="a t " style="left:350px;top:386.2px;font-size:8px;line-height:9.6px;color:#444;">mysql_l...</div>
<div class="a t " style="left:493px;top:386.2px;font-size:8px;line-height:9.6px;color:#444;">Product...</div>
<div class="a t " style="left:510px;top:398.2px;font-size:8px;line-height:9.6px;color:#444;">Cu...</div>
<div class="a t " style="left:519px;top:411.2px;font-size:8px;line-height:9.6px;color:#444;">t...</div>
<div class="a t " style="left:351px;top:401.2px;font-size:8px;line-height:9.6px;color:#444;">8%...</div>
<div class="a t " style="left:351px;top:412.2px;font-size:8px;line-height:9.6px;color:#444;">2...</div>
<div class="a t " style="left:351px;top:513.2px;font-size:8px;line-height:9.6px;color:#444;">k</div>
<div class="a t " style="left:354px;top:526.2px;font-size:8px;line-height:9.6px;color:#444;">23</div>
<div class="a t " style="left:372px;top:539.2px;font-size:8px;line-height:9.6px;color:#444;">3</div>
<div class="a t " style="left:353px;top:551.2px;font-size:8px;line-height:9.6px;color:#444;">cube_1105</div>
<div class="a t " style="left:402px;top:556.2px;font-size:8px;line-height:9.6px;color:#444;">test1</div>
<div class="a t " style="left:459px;top:562.2px;font-size:8px;line-height:9.6px;color:#444;">34</div>
<div class="a t " style="left:489px;top:553.2px;font-size:8px;line-height:9.6px;color:#444;">7</div>
<div class="a t " style="left:525px;top:517.2px;font-size:8px;line-height:9.6px;color:#444;">5</div>
<div class="a t " style="left:521px;top:526.2px;font-size:8px;line-height:9.6px;color:#444;">6</div>
<div class="a t " style="left:514px;top:536.2px;font-size:8px;line-height:9.6px;color:#444;">8</div>
<svg class="a" style="left:459px;top:375.0px;opacity:0.84" width="16" height="8"><g stroke="#444" fill="none"><line x1="1.9" y1="0.4" x2="1.9" y2="7.6" stroke-width="1.12"/><line x1="0.9" y1="1.0" x2="5.8" y2="1.0" stroke-width="1.12"/><line x1="1.2" y1="2.5" x2="5.2" y2="2.5" stroke-width="1.12"/><line x1="2.3" y1="3.6" x2="7.4" y2="3.6" stroke-width="1.12"/><line x1="0.9" y1="6.0" x2="6.6" y2="6.0" stroke-width="1.12"/><line x1="2.5" y1="7.1" x2="5.8" y2="7.1" stroke-width="1.12"/><line x1="1.5" y1="1.7" x2="1.5" y2="5.9" stroke-width="1.12"/><line x1="1.4" y1="0.7" x2="1.4" y2="7.4" stroke-width="1.12"/><rect x="8.8" y="1.0" width="2.5" height="6.0" fill="none" stroke-width="1.12"/><line x1="8.6" y1="0.7" x2="14.2" y2="0.7" stroke-width="1.12"/><line x1="9.7" y1="2.4" x2="13.6" y2="2.4" stroke-width="1.12"/><line x1="11.1" y1="4.2" x2="13.5" y2="4.2" stroke-width="1.12"/><line x1="10.4" y1="5.5" x2="14.9" y2="5.5" stroke-width="1.12"/><line x1="9.7" y1="7.6" x2="14.7" y2="7.6" stroke-width="1.12"/><line x1="13.7" y1="0.4" x2="13.7" y2="6.0" stroke-width="1.12"/><line x1="9.8" y1="2.2" x2="9.8" y2="6.2" stroke-width="1.12"/><line x1="11.9" y1="0.3" x2="11.9" y2="6.4" stroke-width="1.12"/></g></svg>
</div></div>
<div class="win" id="front" style="left:586px;top:286px;width:1283px;height:738px;background:#07101b;box-shadow:1px 20px 34px -5px rgba(70,100,232,.56)"><div class="inner" style="left:-586px;top:-286px">
<div class="a" style="left:586px;top:286px;width:1283px;height:42px;background:#fff"></div>
<div class="a" style="left:586px;top:328px;width:1283px;height:15px;background:#f4f4f4"></div>
<div class="a" style="left:586px;top:343px;width:1283px;height:2px;background:#c6c6c6"></div>
<div class="a" style="left:609px;top:297px;width:17px;height:3px;background:#a68ce9;border-radius:1px"></div>
<div class="a" style="left:628px;top:297px;width:6px;height:3px;background:#a68ce9;border-radius:1px"></div>
<div class="a" style="left:609px;top:305px;width:17px;height:3px;background:#4f83e8;border-radius:1px"></div>
<div class="a" style="left:628px;top:305px;width:6px;height:3px;background:#4f83e8;border-radius:1px"></div>
<div class="a" style="left:609px;top:314px;width:17px;height:3px;background:#3ea6f4;border-radius:1px"></div>
<div class="a" style="left:628px;top:314px;width:6px;height:3px;background:#3ea6f4;border-radius:1px"></div>
<svg class="a" style="left:648px;top:294px;overflow:visible" width="87.5" height="23.8" viewBox="0 0 70 19"><rect x="0" y="0" width="4" height="18.5" fill="#f03c70"/><rect x="0" y="0" width="11.5" height="4" fill="#f03c70"/><rect x="0" y="7.5" width="10" height="3.6" fill="#f03c70"/><rect x="12.3" y="0" width="3.4" height="3" fill="#3a5ce0"/><rect x="12.3" y="5" width="3.4" height="13.5" fill="#3a5ce0"/><path d="M17 0 H23 A7.5 9.25 0 0 1 23 18.5 H17 Z M21 4 V14.5 H23 A3.5 5.25 0 0 0 23 4 Z" fill="#3a5ce0" fill-rule="evenodd"/><path d="M38.5 4.2 A6.8 7.2 0 1 0 38.5 18.6 A6.8 7.2 0 1 0 38.5 4.2 Z M38.5 8.4 A2.7 3 0 1 1 38.5 14.4 A2.7 3 0 1 1 38.5 8.4 Z" fill="#f7853a" fill-rule="evenodd"/><rect x="42" y="4.2" width="4" height="14.3" fill="#f7853a"/><rect x="48.6" y="1" width="4" height="17.5" fill="#3cc0a0"/><rect x="46.5" y="5" width="8.5" height="3.5" fill="#3cc0a0"/><path d="M61.3 4.2 A6.8 7.2 0 1 0 61.3 18.6 A6.8 7.2 0 1 0 61.3 4.2 Z M61.3 8.4 A2.7 3 0 1 1 61.3 14.4 A2.7 3 0 1 1 61.3 8.4 Z" fill="#3a5ce0" fill-rule="evenodd"/><rect x="64.6" y="4.2" width="4" height="14.3" fill="#3a5ce0"/></svg>
<svg class="a" style="left:737px;top:297.9px;opacity:0.89" width="147" height="16"><g stroke="#5a7be6" fill="none"><line x1="1.0" y1="8.2" x2="15.3" y2="8.2" stroke-width="2.74"/><rect x="18.0" y="2.0" width="5.0" height="12.2" fill="none" stroke-width="2.28"/><line x1="18.2" y1="1.7" x2="29.5" y2="1.7" stroke-width="2.28"/><line x1="18.7" y1="4.5" x2="28.7" y2="4.5" stroke-width="2.28"/><line x1="19.0" y1="7.9" x2="26.2" y2="7.9" stroke-width="2.28"/><line x1="23.0" y1="10.7" x2="27.7" y2="10.7" stroke-width="2.28"/><line x1="18.5" y1="14.0" x2="28.7" y2="14.0" stroke-width="2.28"/><line x1="30.1" y1="2.0" x2="30.1" y2="11.6" stroke-width="2.28"/><line x1="22.7" y1="2.7" x2="22.7" y2="14.1" stroke-width="2.28"/><line x1="36.4" y1="0.8" x2="36.4" y2="15.5" stroke-width="2.28"/><line x1="39.6" y1="1.3" x2="47.1" y2="1.3" stroke-width="2.28"/><line x1="36.4" y1="5.7" x2="47.0" y2="5.7" stroke-width="2.28"/><line x1="34.7" y1="8.5" x2="42.3" y2="8.5" stroke-width="2.28"/><line x1="34.3" y1="10.9" x2="42.6" y2="10.9" stroke-width="2.28"/><line x1="38.4" y1="14.4" x2="44.0" y2="14.4" stroke-width="2.28"/><line x1="35.1" y1="1.0" x2="35.1" y2="16.1" stroke-width="2.28"/><line x1="35.1" y1="2.6" x2="35.1" y2="15.4" stroke-width="2.28"/><line x1="44.1" y1="3.6" x2="44.1" y2="13.4" stroke-width="2.28"/><rect x="50.6" y="2.0" width="5.0" height="12.2" fill="none" stroke-width="2.28"/><line x1="54.4" y1="1.5" x2="59.9" y2="1.5" stroke-width="2.28"/><line x1="50.0" y1="5.6" x2="61.8" y2="5.6" stroke-width="2.28"/><line x1="52.4" y1="7.7" x2="60.6" y2="7.7" stroke-width="2.28"/><line x1="55.1" y1="11.7" x2="60.6" y2="11.7" stroke-width="2.28"/><line x1="52.2" y1="14.9" x2="60.1" y2="14.9" stroke-width="2.28"/><line x1="58.1" y1="1.3" x2="58.1" y2="12.5" stroke-width="2.28"/><line x1="53.4" y1="0.2" x2="53.4" y2="12.0" stroke-width="2.28"/><line x1="54.8" y1="1.0" x2="54.8" y2="13.1" stroke-width="2.28"/><line x1="69.0" y1="0.8" x2="69.0" y2="15.5" stroke-width="2.28"/><line x1="67.4" y1="1.4" x2="74.9" y2="1.4" stroke-width="2.28"/><line x1="66.5" y1="5.8" x2="75.3" y2="5.8" stroke-width="2.28"/><line x1="71.6" y1="11.1" x2="79.2" y2="11.1" stroke-width="2.28"/><line x1="67.3" y1="13.9" x2="75.2" y2="13.9" stroke-width="2.28"/><line x1="74.3" y1="1.6" x2="74.3" y2="13.7" stroke-width="2.28"/><line x1="78.4" y1="2.4" x2="78.4" y2="15.2" stroke-width="2.28"/><line x1="85.3" y1="0.8" x2="85.3" y2="15.5" stroke-width="2.28"/><line x1="85.0" y1="0.9" x2="96.4" y2="0.9" stroke-width="2.28"/><line x1="87.5" y1="5.5" x2="94.1" y2="5.5" stroke-width="2.28"/><line x1="87.2" y1="7.4" x2="94.9" y2="7.4" stroke-width="2.28"/><line x1="82.8" y1="12.1" x2="94.6" y2="12.1" stroke-width="2.28"/><line x1="85.3" y1="14.4" x2="95.2" y2="14.4" stroke-width="2.28"/><line x1="89.7" y1="2.8" x2="89.7" y2="12.0" stroke-width="2.28"/><line x1="93.5" y1="3.4" x2="93.5" y2="13.6" stroke-width="2.28"/><line x1="91.5" y1="2.1" x2="91.5" y2="13.3" stroke-width="2.28"/><line x1="101.6" y1="0.8" x2="101.6" y2="15.5" stroke-width="2.28"/><line x1="102.5" y1="1.8" x2="110.3" y2="1.8" stroke-width="2.28"/><line x1="102.8" y1="4.1" x2="109.9" y2="4.1" stroke-width="2.28"/><line x1="102.6" y1="8.3" x2="112.7" y2="8.3" stroke-width="2.28"/><line x1="101.8" y1="10.8" x2="113.1" y2="10.8" stroke-width="2.28"/><line x1="100.8" y1="15.1" x2="111.6" y2="15.1" stroke-width="2.28"/><line x1="100.8" y1="4.7" x2="100.8" y2="15.1" stroke-width="2.28"/><line x1="110.5" y1="0.5" x2="110.5" y2="12.3" stroke-width="2.28"/><line x1="110.8" y1="3.9" x2="110.8" y2="12.1" stroke-width="2.28"/><rect x="115.8" y="2.0" width="5.0" height="12.2" fill="none" stroke-width="2.28"/><line x1="121.5" y1="1.6" x2="124.1" y2="1.6" stroke-width="2.28"/><line x1="119.7" y1="6.6" x2="125.1" y2="6.6" stroke-width="2.28"/><line x1="118.0" y1="10.8" x2="126.8" y2="10.8" stroke-width="2.28"/><line x1="116.3" y1="15.3" x2="125.3" y2="15.3" stroke-width="2.28"/><line x1="117.4" y1="2.7" x2="117.4" y2="15.3" stroke-width="2.28"/><line x1="122.1" y1="1.2" x2="122.1" y2="15.3" stroke-width="2.28"/><rect x="132.1" y="2.0" width="5.0" height="12.2" fill="none" stroke-width="2.28"/><line x1="132.4" y1="2.1" x2="142.1" y2="2.1" stroke-width="2.28"/><line x1="131.6" y1="5.3" x2="142.0" y2="5.3" stroke-width="2.28"/><line x1="136.8" y1="10.9" x2="140.7" y2="10.9" stroke-width="2.28"/><line x1="133.9" y1="14.2" x2="144.9" y2="14.2" stroke-width="2.28"/><line x1="143.2" y1="0.4" x2="143.2" y2="16.2" stroke-width="2.28"/><line x1="135.2" y1="3.1" x2="135.2" y2="15.7" stroke-width="2.28"/><line x1="141.2" y1="1.0" x2="141.2" y2="14.7" stroke-width="2.28"/></g></svg>
<div class="a" style="left:1390px;top:290px;width:212px;height:35px;background:#fff;border:1px solid #e8e8e8;border-radius:3px"></div>
<svg class="a" style="left:1572px;top:296px" width="22" height="22" viewBox="0 0 18 18"><circle cx="7.5" cy="7.5" r="5.5" fill="none" stroke="#4a8af0" stroke-width="2"/><line x1="11.5" y1="11.5" x2="15.5" y2="15.5" stroke="#3a6ae0" stroke-width="2.5"/></svg>
<svg class="a" style="left:1649px;top:298px" width="19" height="19" viewBox="0 0 16 16"><path d="M3 12 L3 7 Q3 2.5 8 2.5 Q13 2.5 13 7 L13 12 Z" fill="none" stroke="#444" stroke-width="1.6"/><line x1="2" y1="12.5" x2="14" y2="12.5" stroke="#444" stroke-width="1.6"/></svg>
<div class="a" style="left:1657px;top:289px;width:15px;height:15px;background:#e8101a;border-radius:50%"></div>
<svg class="a" style="left:1680px;top:298px" width="18" height="18" viewBox="0 0 16 16"><circle cx="8" cy="8" r="5.5" fill="none" stroke="#555" stroke-width="1.6"/><circle cx="8" cy="8" r="2" fill="none" stroke="#555" stroke-width="1.4"/></svg>
<div class="a t " style="left:1706px;top:298.0px;font-size:15px;line-height:18.0px;color:#444;font-weight:bold">?</div>
<div class="a t " style="left:1751px;top:298.6px;font-size:14px;line-height:16.8px;color:#333;">har</div>
<svg class="a" style="left:1778px;top:300.2px;opacity:0.79" width="54" height="14"><g stroke="#444" fill="none"><line x1="2.6" y1="0.7" x2="9.4" y2="0.7" stroke-width="1.89"/><line x1="2.3" y1="4.2" x2="10.8" y2="4.2" stroke-width="1.89"/><line x1="1.8" y1="7.0" x2="8.5" y2="7.0" stroke-width="1.89"/><line x1="3.3" y1="9.7" x2="8.6" y2="9.7" stroke-width="1.89"/><line x1="5.8" y1="11.6" x2="10.8" y2="11.6" stroke-width="1.89"/><line x1="4.9" y1="0.0" x2="4.9" y2="9.7" stroke-width="1.89"/><line x1="4.0" y1="2.9" x2="4.0" y2="13.0" stroke-width="1.89"/><line x1="9.3" y1="0.8" x2="9.3" y2="9.7" stroke-width="1.89"/><line x1="17.6" y1="1.2" x2="22.8" y2="1.2" stroke-width="1.89"/><line x1="15.0" y1="3.6" x2="21.9" y2="3.6" stroke-width="1.89"/><line x1="16.5" y1="6.8" x2="23.8" y2="6.8" stroke-width="1.89"/><line x1="15.0" y1="8.9" x2="25.6" y2="8.9" stroke-width="1.89"/><line x1="14.7" y1="12.8" x2="24.5" y2="12.8" stroke-width="1.89"/><line x1="24.4" y1="1.6" x2="24.4" y2="12.5" stroke-width="1.89"/><line x1="21.2" y1="1.8" x2="21.2" y2="9.7" stroke-width="1.89"/><line x1="30.2" y1="1.1" x2="39.5" y2="1.1" stroke-width="1.89"/><line x1="31.5" y1="3.8" x2="38.1" y2="3.8" stroke-width="1.89"/><line x1="30.0" y1="6.4" x2="35.6" y2="6.4" stroke-width="1.89"/><line x1="29.2" y1="10.0" x2="36.9" y2="10.0" stroke-width="1.89"/><line x1="32.2" y1="11.9" x2="39.0" y2="11.9" stroke-width="1.89"/><line x1="34.2" y1="0.4" x2="34.2" y2="13.1" stroke-width="1.89"/><line x1="29.8" y1="1.5" x2="29.8" y2="11.0" stroke-width="1.89"/><line x1="42.1" y1="1.6" x2="48.8" y2="1.6" stroke-width="1.89"/><line x1="44.0" y1="4.5" x2="50.7" y2="4.5" stroke-width="1.89"/><line x1="41.6" y1="8.8" x2="49.5" y2="8.8" stroke-width="1.89"/><line x1="45.5" y1="11.5" x2="50.5" y2="11.5" stroke-width="1.89"/><line x1="48.7" y1="2.8" x2="48.7" y2="13.5" stroke-width="1.89"/><line x1="43.1" y1="1.9" x2="43.1" y2="11.1" stroke-width="1.89"/></g></svg>
<svg class="a" style="left:1844px;top:304px" width="11" height="7"><path d="M0 0 L11 0 L5.5 6.5 Z" fill="#222"/></svg>
<svg class="a" style="left:591px;top:332.2px;opacity:0.95" width="19" height="10"><g stroke="#444" fill="none"><line x1="2.2" y1="0.5" x2="2.2" y2="9.0" stroke-width="1.33"/><line x1="3.7" y1="0.9" x2="7.3" y2="0.9" stroke-width="1.33"/><line x1="3.6" y1="3.1" x2="5.6" y2="3.1" stroke-width="1.33"/><line x1="3.2" y1="6.5" x2="8.2" y2="6.5" stroke-width="1.33"/><line x1="3.1" y1="8.9" x2="8.8" y2="8.9" stroke-width="1.33"/><line x1="6.6" y1="0.3" x2="6.6" y2="8.0" stroke-width="1.33"/><line x1="1.5" y1="2.5" x2="1.5" y2="9.3" stroke-width="1.33"/><line x1="7.4" y1="0.1" x2="7.4" y2="7.7" stroke-width="1.33"/><rect x="10.5" y="1.1" width="2.9" height="7.1" fill="none" stroke-width="1.33"/><line x1="12.0" y1="0.8" x2="15.5" y2="0.8" stroke-width="1.33"/><line x1="10.6" y1="3.5" x2="15.4" y2="3.5" stroke-width="1.33"/><line x1="11.2" y1="6.0" x2="17.7" y2="6.0" stroke-width="1.33"/><line x1="11.6" y1="8.3" x2="15.3" y2="8.3" stroke-width="1.33"/><line x1="14.8" y1="0.5" x2="14.8" y2="6.9" stroke-width="1.33"/><line x1="11.8" y1="2.6" x2="11.8" y2="9.0" stroke-width="1.33"/></g></svg>
<div class="a" style="left:613px;top:331px;width:1px;height:11px;background:#ddd"></div>
<div class="a t ser" style="left:620px;top:331.3px;font-size:9.5px;line-height:11.4px;color:#3a3a3a;font-weight:bold">Screen(mysql-test)</div>
<div class="a" style="left:1831px;top:331px;width:4px;height:11px;border:1px solid #cfe0f8"></div>
<div class="a" style="left:1852px;top:333px;width:6px;height:7px;background:#d6e6fa"></div>
<svg class="a" style="left:0;top:0" width="1920" height="1080"><defs><linearGradient id="hb" x1="0" x2="1" y1="0" y2="0"><stop offset="0" stop-color="#1f3340"/><stop offset=".35" stop-color="#142330"/><stop offset="1" stop-color="#08111b"/></linearGradient><linearGradient id="cl" x1="0" x2="1"><stop offset="0" stop-color="#3fb0c0"/><stop offset=".5" stop-color="#6ee8f2"/><stop offset=".96" stop-color="#5ad0dc"/><stop offset="1" stop-color="#0a1a24"/></linearGradient></defs><rect x="586" y="345" width="1283" height="46" fill="url(#hb)"/><path d="M586 345 L770 345 L727 389 L586 389 Z" fill="#060a12"/></svg>
<svg class="a" style="left:0;top:0" width="1920" height="1080"><rect x="645" y="352" width="1" height="1" fill="#1e3a50"/><rect x="735" y="349" width="1" height="1" fill="#203040"/><rect x="752" y="354" width="2" height="2" fill="#1e3a50"/><rect x="662" y="356" width="2" height="2" fill="#203040"/><rect x="597" y="370" width="1" height="1" fill="#2a4a60"/><rect x="691" y="362" width="1" height="1" fill="#2a4a60"/><rect x="687" y="351" width="1" height="1" fill="#3a5a70"/><rect x="684" y="370" width="1" height="1" fill="#203040"/><rect x="605" y="370" width="1.5" height="1.5" fill="#2a4a60"/><rect x="604" y="376" width="1" height="1" fill="#203040"/><rect x="699" y="367" width="2" height="2" fill="#203040"/><rect x="727" y="365" width="1.5" height="1.5" fill="#3a5a70"/><rect x="641" y="380" width="1" height="1" fill="#2a4a60"/><rect x="691" y="368" width="2" height="2" fill="#15283a"/><rect x="638" y="388" width="2" height="2" fill="#1e3a50"/><rect x="616" y="360" width="2" height="2" fill="#3a5a70"/><rect x="593" y="374" width="1.5" height="1.5" fill="#203040"/><rect x="648" y="360" width="2" height="2" fill="#3a5a70"/><rect x="599" y="349" width="2" height="2" fill="#15283a"/><rect x="713" y="348" width="2" height="2" fill="#15283a"/><rect x="638" y="362" width="1" height="1" fill="#15283a"/><rect x="697" y="367" width="1.5" height="1.5" fill="#2a4a60"/><rect x="610" y="356" width="2" height="2" fill="#3a5a70"/><rect x="601" y="365" width="1.5" height="1.5" fill="#203040"/><rect x="743" y="357" width="1.5" height="1.5" fill="#3a5a70"/><rect x="710" y="362" width="1" height="1" fill="#2a4a60"/><rect x="601" y="352" width="1" height="1" fill="#2a4a60"/><rect x="674" y="371" width="1.5" height="1.5" fill="#15283a"/><rect x="587" y="363" width="1.5" height="1.5" fill="#15283a"/><rect x="680" y="372" width="2" height="2" fill="#1e3a50"/><rect x="657" y="363" width="2" height="2" fill="#1e3a50"/><rect x="701" y="348" width="1" height="1" fill="#1e3a50"/><rect x="666" y="350" width="1" height="1" fill="#203040"/><rect x="605" y="370" width="1" height="1" fill="#203040"/><rect x="599" y="354" width="1" height="1" fill="#3a5a70"/><rect x="701" y="387" width="1.5" height="1.5" fill="#203040"/><rect x="672" y="350" width="2" height="2" fill="#3a5a70"/><rect x="673" y="359" width="1" height="1" fill="#2a4a60"/><rect x="722" y="378" width="1" height="1" fill="#3a5a70"/><rect x="680" y="354" width="1.5" height="1.5" fill="#203040"/><rect x="613" y="369" width="1.5" height="1.5" fill="#1e3a50"/><rect x="713" y="356" width="1" height="1" fill="#15283a"/><rect x="651" y="355" width="1.5" height="1.5" fill="#203040"/><rect x="702" y="372" width="1" height="1" fill="#2a4a60"/><rect x="735" y="378" width="1" height="1" fill="#2a4a60"/><rect x="680" y="361" width="1" height="1" fill="#1e3a50"/><rect x="730" y="366" width="1.5" height="1.5" fill="#2a4a60"/><rect x="667" y="386" width="1.5" height="1.5" fill="#15283a"/><rect x="601" y="349" width="1" height="1" fill="#3a5a70"/><rect x="647" y="366" width="1" height="1" fill="#203040"/><rect x="673" y="374" width="1" height="1" fill="#1e3a50"/><rect x="723" y="366" width="2" height="2" fill="#2a4a60"/><rect x="730" y="360" width="2" height="2" fill="#3a5a70"/><rect x="659" y="387" width="1" height="1" fill="#2a4a60"/><rect x="767" y="346" width="2" height="2" fill="#203040"/><rect x="733" y="351" width="2" height="2" fill="#203040"/><rect x="706" y="360" width="1" height="1" fill="#203040"/><rect x="590" y="380" width="1" height="1" fill="#1e3a50"/><rect x="665" y="383" width="1" height="1" fill="#2a4a60"/><rect x="632" y="358" width="1.5" height="1.5" fill="#2a4a60"/><rect x="633" y="363" width="1" height="1" fill="#2a4a60"/><rect x="752" y="361" width="2" height="2" fill="#3a5a70"/><rect x="610" y="352" width="1" height="1" fill="#203040"/><rect x="697" y="379" width="1" height="1" fill="#2a4a60"/><rect x="612" y="372" width="1" height="1" fill="#1e3a50"/><rect x="645" y="368" width="2" height="2" fill="#203040"/><rect x="729" y="350" width="1" height="1" fill="#203040"/><rect x="631" y="357" width="2" height="2" fill="#1e3a50"/><rect x="688" y="378" width="2" height="2" fill="#1e3a50"/><rect x="645" y="388" width="1" height="1" fill="#203040"/><rect x="712" y="365" width="2" height="2" fill="#203040"/><rect x="678" y="356" width="1.5" height="1.5" fill="#203040"/><rect x="623" y="365" width="1" height="1" fill="#3a5a70"/><rect x="657" y="359" width="2" height="2" fill="#2a4a60"/><rect x="599" y="374" width="1" height="1" fill="#1e3a50"/><rect x="653" y="356" width="2" height="2" fill="#2a4a60"/><rect x="626" y="387" width="2" height="2" fill="#3a5a70"/><rect x="616" y="374" width="1" height="1" fill="#2a4a60"/><rect x="715" y="389" width="1.5" height="1.5" fill="#3a5a70"/><rect x="663" y="361" width="1.5" height="1.5" fill="#1e3a50"/><rect x="590" y="369" width="1" height="1" fill="#3a5a70"/><rect x="656" y="368" width="1" height="1" fill="#15283a"/><rect x="607" y="385" width="1" height="1" fill="#2a4a60"/><rect x="601" y="357" width="1.5" height="1.5" fill="#2a4a60"/><rect x="724" y="381" width="2" height="2" fill="#15283a"/><rect x="613" y="385" width="2" height="2" fill="#203040"/><rect x="713" y="349" width="1" height="1" fill="#1e3a50"/><rect x="663" y="348" width="1" height="1" fill="#1e3a50"/><rect x="732" y="349" width="1" height="1" fill="#2a4a60"/><rect x="634" y="350" width="1.5" height="1.5" fill="#1e3a50"/><rect x="594" y="376" width="1" height="1" fill="#1e3a50"/><rect x="634" y="353" width="1.5" height="1.5" fill="#15283a"/><rect x="683" y="354" width="1" height="1" fill="#3a5a70"/><rect x="635" y="380" width="1" height="1" fill="#15283a"/><rect x="589" y="377" width="1" height="1" fill="#203040"/><rect x="680" y="356" width="1" height="1" fill="#3a5a70"/><rect x="706" y="374" width="2" height="2" fill="#3a5a70"/><rect x="625" y="355" width="1" height="1" fill="#2a4a60"/><rect x="660" y="360" width="1" height="1" fill="#1e3a50"/><rect x="589" y="373" width="2" height="2" fill="#15283a"/><rect x="616" y="349" width="1.5" height="1.5" fill="#3a5a70"/><rect x="695" y="375" width="2" height="2" fill="#1e3a50"/><rect x="620" y="357" width="1.5" height="1.5" fill="#1e3a50"/><rect x="652" y="359" width="1.5" height="1.5" fill="#203040"/><rect x="630" y="387" width="1" height="1" fill="#15283a"/><rect x="651" y="345" width="1" height="1" fill="#3a5a70"/><rect x="672" y="367" width="1" height="1" fill="#2a4a60"/><rect x="678" y="345" width="1" height="1" fill="#15283a"/><rect x="612" y="371" width="1" height="1" fill="#3a5a70"/><rect x="641" y="373" width="1" height="1" fill="#1e3a50"/><rect x="706" y="377" width="2" height="2" fill="#203040"/><rect x="725" y="377" width="1" height="1" fill="#3a5a70"/><rect x="638" y="372" width="1" height="1" fill="#2a4a60"/><rect x="736" y="376" width="2" height="2" fill="#203040"/><rect x="720" y="381" width="1" height="1" fill="#2a4a60"/><rect x="736" y="371" width="1" height="1" fill="#2a4a60"/><rect x="592" y="351" width="1" height="1" fill="#15283a"/><rect x="655" y="365" width="1" height="1" fill="#1e3a50"/><rect x="700" y="375" width="1.5" height="1.5" fill="#3a5a70"/><rect x="587" y="380" width="1" height="1" fill="#203040"/><rect x="706" y="348" width="1.5" height="1.5" fill="#3a5a70"/><rect x="733" y="382" width="1" height="1" fill="#2a4a60"/><rect x="628" y="374" width="2" height="2" fill="#3a5a70"/><rect x="740" y="348" width="1" height="1" fill="#15283a"/><rect x="698" y="373" width="1" height="1" fill="#1e3a50"/><rect x="646" y="374" width="1" height="1" fill="#15283a"/><rect x="588" y="348" width="1" height="1" fill="#15283a"/><rect x="712" y="375" width="1.5" height="1.5" fill="#15283a"/><rect x="671" y="366" width="1" height="1" fill="#1e3a50"/><rect x="643" y="349" width="1" height="1" fill="#3a5a70"/><rect x="639" y="348" width="2" height="2" fill="#203040"/><rect x="600" y="349" width="1.5" height="1.5" fill="#203040"/><rect x="759" y="351" width="1.5" height="1.5" fill="#203040"/><rect x="628" y="384" width="2" height="2" fill="#3a5a70"/><rect x="591" y="345" width="2" height="2" fill="#3a5a70"/><rect x="660" y="377" width="1.5" height="1.5" fill="#3a5a70"/><rect x="654" y="350" width="1" height="1" fill="#15283a"/><rect x="645" y="360" width="1" height="1" fill="#3a5a70"/><rect x="757" y="354" width="1.5" height="1.5" fill="#1e3a50"/><rect x="632" y="348" width="1" height="1" fill="#3a5a70"/><rect x="652" y="364" width="1" height="1" fill="#15283a"/><rect x="637" y="347" width="1" height="1" fill="#15283a"/><rect x="631" y="357" width="1.5" height="1.5" fill="#203040"/><rect x="621" y="361" width="1" height="1" fill="#3a5a70"/><rect x="734" y="373" width="1" height="1" fill="#203040"/><rect x="717" y="347" width="2" height="2" fill="#3a5a70"/><rect x="698" y="351" width="2" height="2" fill="#15283a"/><rect x="595" y="386" width="1" height="1" fill="#2a4a60"/><rect x="672" y="360" width="1.5" height="1.5" fill="#15283a"/><rect x="721" y="388" width="2" height="2" fill="#15283a"/><rect x="705" y="358" width="2" height="2" fill="#203040"/><rect x="608" y="373" width="1" height="1" fill="#1e3a50"/><rect x="677" y="381" width="1" height="1" fill="#203040"/><rect x="668" y="360" width="2" height="2" fill="#3a5a70"/><rect x="611" y="353" width="1" height="1" fill="#1e3a50"/><rect x="648" y="349" width="1.5" height="1.5" fill="#2a4a60"/><rect x="633" y="370" width="2" height="2" fill="#1e3a50"/><rect x="656" y="378" width="2" height="2" fill="#2a4a60"/><rect x="635" y="378" width="1.5" height="1.5" fill="#3a5a70"/><rect x="691" y="361" width="1" height="1" fill="#203040"/><rect x="603" y="384" width="2" height="2" fill="#3a5a70"/><rect x="704" y="364" width="1" height="1" fill="#15283a"/><rect x="609" y="364" width="2" height="2" fill="#3a5a70"/><rect x="586" y="362" width="2" height="2" fill="#203040"/><rect x="606" y="352" width="1" height="1" fill="#203040"/><rect x="704" y="379" width="1" height="1" fill="#3a5a70"/><rect x="686" y="347" width="1" height="1" fill="#2a4a60"/><rect x="690" y="347" width="1" height="1" fill="#15283a"/><rect x="700" y="368" width="1" height="1" fill="#3a5a70"/><rect x="604" y="358" width="1" height="1" fill="#203040"/><rect x="657" y="355" width="1" height="1" fill="#203040"/><rect x="588" y="358" width="1.5" height="1.5" fill="#3a5a70"/><rect x="747" y="366" width="1" height="1" fill="#2a4a60"/><rect x="591" y="363" width="1" height="1" fill="#15283a"/><rect x="590" y="367" width="1" height="1" fill="#3a5a70"/><rect x="633" y="374" width="1" height="1" fill="#15283a"/><rect x="676" y="376" width="1.5" height="1.5" fill="#3a5a70"/><rect x="710" y="354" width="1" height="1" fill="#15283a"/><rect x="623" y="388" width="1" height="1" fill="#15283a"/><rect x="628" y="355" width="1" height="1" fill="#15283a"/><rect x="620" y="355" width="1" height="1" fill="#3a5a70"/><rect x="759" y="351" width="1" height="1" fill="#3a5a70"/><rect x="625" y="388" width="2" height="2" fill="#2a4a60"/><rect x="595" y="348" width="2" height="2" fill="#3a5a70"/><rect x="719" y="389" width="1.5" height="1.5" fill="#2a4a60"/><rect x="621" y="374" width="2" height="2" fill="#203040"/><rect x="592" y="374" width="1.5" height="1.5" fill="#3a5a70"/><rect x="606" y="348" width="1.5" height="1.5" fill="#1e3a50"/><rect x="662" y="384" width="1" height="1" fill="#203040"/><rect x="655" y="379" width="2" height="2" fill="#15283a"/><rect x="602" y="376" width="1.5" height="1.5" fill="#2a4a60"/><rect x="685" y="365" width="1.5" height="1.5" fill="#15283a"/><rect x="720" y="366" width="1" height="1" fill="#3a5a70"/><rect x="734" y="379" width="2" height="2" fill="#1e3a50"/><rect x="592" y="348" width="1.5" height="1.5" fill="#1e3a50"/><rect x="621" y="348" width="1.5" height="1.5" fill="#203040"/><rect x="652" y="360" width="1" height="1" fill="#203040"/><rect x="634" y="377" width="1.5" height="1.5" fill="#15283a"/><rect x="640" y="377" width="1" height="1" fill="#203040"/><rect x="590" y="355" width="2" height="2" fill="#3a5a70"/><rect x="632" y="364" width="1" height="1" fill="#3a5a70"/><rect x="755" y="353" width="1" height="1" fill="#15283a"/><rect x="697" y="359" width="2" height="2" fill="#15283a"/><rect x="652" y="379" width="1" height="1" fill="#1e3a50"/><rect x="657" y="352" width="1" height="1" fill="#3a5a70"/><rect x="704" y="366" width="1.5" height="1.5" fill="#203040"/><rect x="615" y="364" width="1" height="1" fill="#1e3a50"/><rect x="634" y="349" width="2" height="2" fill="#1e3a50"/><rect x="677" y="376" width="1" height="1" fill="#3a5a70"/><rect x="629" y="363" width="1" height="1" fill="#203040"/><rect x="722" y="382" width="1.5" height="1.5" fill="#1e3a50"/><rect x="639" y="370" width="1.5" height="1.5" fill="#15283a"/><rect x="720" y="354" width="1" height="1" fill="#2a4a60"/><rect x="631" y="352" width="1" height="1" fill="#203040"/><rect x="645" y="362" width="1" height="1" fill="#2a4a60"/><rect x="704" y="349" width="1" height="1" fill="#3a5a70"/><rect x="605" y="366" width="2" height="2" fill="#2a4a60"/><rect x="752" y="347" width="1" height="1" fill="#15283a"/><rect x="608" y="353" width="1" height="1" fill="#203040"/><rect x="744" y="365" width="1" height="1" fill="#15283a"/><rect x="605" y="371" width="1.5" height="1.5" fill="#203040"/><rect x="626" y="361" width="1" height="1" fill="#2a4a60"/><rect x="623" y="356" width="1" height="1" fill="#203040"/><rect x="734" y="381" width="1.5" height="1.5" fill="#3a5a70"/><rect x="620" y="359" width="1" height="1" fill="#2a4a60"/><rect x="731" y="369" width="2" height="2" fill="#1e3a50"/><rect x="604" y="362" width="1" height="1" fill="#203040"/><rect x="702" y="349" width="2" height="2" fill="#2a4a60"/><rect x="713" y="363" width="1.5" height="1.5" fill="#15283a"/><rect x="662" y="347" width="1.5" height="1.5" fill="#203040"/><rect x="661" y="346" width="1" height="1" fill="#15283a"/><rect x="657" y="363" width="2" height="2" fill="#1e3a50"/><rect x="750" y="364" width="2" height="2" fill="#1e3a50"/><rect x="691" y="361" width="1" height="1" fill="#2a4a60"/><line x1="724" y1="390" x2="768" y2="347" stroke="#5fd0e0" stroke-width="2.5"/><rect x="586" y="387.5" width="1275" height="3" fill="url(#cl)"/><rect x="586" y="386" width="1275" height="6" fill="url(#cl)" opacity=".25"/></svg>
<div class="a t" style="left:605px;top:356px;font-size:20px;line-height:24px;font-weight:bold;font-style:italic;color:#92e4ee;-webkit-text-stroke:0.8px #92e4ee;text-shadow:0 0 4px rgba(100,220,240,.35)">Logistic</div>
<div class="a t ser" style="left:1211px;top:361.7px;font-size:10.5px;line-height:12.6px;color:#c4d2d8;font-weight:bold">Shanghai:</div>
<div class="a t ser" style="left:1288px;top:361.7px;font-size:10.5px;line-height:12.6px;color:#c4d2d8;font-weight:bold">11:56</div>
<div class="a t ser" style="left:1351px;top:361.7px;font-size:10.5px;line-height:12.6px;color:#c4d2d8;font-weight:bold">|</div>
<div class="a t ser" style="left:1381px;top:361.7px;font-size:10.5px;line-height:12.6px;color:#c4d2d8;font-weight:bold">Denver:</div>
<div class="a t ser" style="left:1445px;top:361.7px;font-size:10.5px;line-height:12.6px;color:#c4d2d8;font-weight:bold">22:56</div>
<div class="a t ser" style="left:1530px;top:361.7px;font-size:10.5px;line-height:12.6px;color:#c4d2d8;font-weight:bold">|</div>
<div class="a t ser" style="left:1566px;top:361.7px;font-size:10.5px;line-height:12.6px;color:#c4d2d8;font-weight:bold">Bangkok:</div>
<div class="a t ser" style="left:1635px;top:361.7px;font-size:10.5px;line-height:12.6px;color:#c4d2d8;font-weight:bold">10:56</div>
<div class="a t ser" style="left:1716px;top:361.7px;font-size:10.5px;line-height:12.6px;color:#c4d2d8;font-weight:bold">|</div>
<div class="a t ser" style="left:1738px;top:361.7px;font-size:10.5px;line-height:12.6px;color:#c4d2d8;font-weight:bold">Berlin:</div>
<div class="a t ser" style="left:1789px;top:361.7px;font-size:10.5px;line-height:12.6px;color:#c4d2d8;font-weight:bold">04:56</div>
<div class="a" style="left:586px;top:391px;width:1283px;height:128px;background:#0a1520"></div>
<div class="a" style="left:586px;top:392px;width:329px;height:121px;background:#354c58"></div>
<svg class="a" style="left:683px;top:391px" width="135" height="23"><path d="M0 0 L135 0 L131 16 Q129 22 123 22 L12 22 Q6 22 4 16 Z" fill="#0a1420"/></svg>
<div class="a t ser" style="left:600.5px;width:300px;text-align:center;top:396.3px;font-size:9.5px;line-height:11.4px;color:#78bcc8;font-weight:bold">Order</div>
<div class="a" style="left:606px;top:421px;width:131px;height:20px;background:#25434f;border:1.5px solid #2f5866"></div>
<div class="a t ser" style="left:606px;width:131px;top:421px;height:20px;line-height:20px;text-align:center;font-size:9px;color:#c8d4da;font-weight:bold"><span style="display:inline-block;width:4px;height:4px;background:#4aa8b8;margin-right:6px;vertical-align:middle"></span>UNScales</div>
<div class="a" style="left:765px;top:421px;width:131px;height:20px;background:#25434f;border:1.5px solid #2f5866"></div>
<div class="a t ser" style="left:765px;width:131px;top:421px;height:20px;line-height:20px;text-align:center;font-size:9px;color:#c8d4da;font-weight:bold"><span style="display:inline-block;width:4px;height:4px;background:#4aa8b8;margin-right:6px;vertical-align:middle"></span>Active</div>
<div class="a t ser" style="left:594px;top:455.6px;font-size:9px;line-height:10.8px;color:#bccacf;font-weight:bold">Daily:</div>
<div class="a t ser" style="left:628px;top:455.2px;font-size:9.6px;line-height:11.5px;color:#e8c020;font-weight:bold">$ 301k / $47k</div>
<div class="a t ser" style="left:751px;top:455.6px;font-size:9px;line-height:10.8px;color:#bccacf;font-weight:bold">Daily:</div>
<div class="a t ser" style="left:787px;top:455.2px;font-size:9.6px;line-height:11.5px;color:#e8c020;font-weight:bold">$ 3,091k / $405k</div>
<div class="a t ser" style="left:594px;top:484.6px;font-size:9px;line-height:10.8px;color:#bccacf;font-weight:bold">MTD:</div>
<div class="a t ser" style="left:625px;top:484.2px;font-size:9.6px;line-height:11.5px;color:#e8c020;font-weight:bold">$ 6,700k / $1,055k</div>
<div class="a t ser" style="left:752px;top:484.6px;font-size:9px;line-height:10.8px;color:#bccacf;font-weight:bold">MTD:</div>
<div class="a t ser" style="left:788px;top:484.2px;font-size:9.6px;line-height:11.5px;color:#e8c020;font-weight:bold">$ 890k / $140k</div>
<div class="a" style="left:647px;top:510px;width:190px;height:3px;background:#7cc4d4;border-radius:1px"></div>
<div class="a" style="left:921px;top:392px;width:318px;height:121px;background:#354c58"></div>
<svg class="a" style="left:1010px;top:391px" width="140" height="23"><path d="M0 0 L140 0 L136 16 Q134 22 128 22 L12 22 Q6 22 4 16 Z" fill="#0a1420"/></svg>
<div class="a t ser" style="left:930.0px;width:300px;text-align:center;top:396.3px;font-size:9.5px;line-height:11.4px;color:#78bcc8;font-weight:bold">Preparation</div>
<div class="a" style="left:931px;top:421px;width:134px;height:20px;background:#25434f;border:1.5px solid #2f5866"></div>
<div class="a t ser" style="left:931px;width:134px;top:421px;height:20px;line-height:20px;text-align:center;font-size:9px;color:#c8d4da;font-weight:bold"><span style="display:inline-block;width:4px;height:4px;background:#4aa8b8;margin-right:6px;vertical-align:middle"></span>Images IN</div>
<div class="a" style="left:1094px;top:421px;width:135px;height:20px;background:#25434f;border:1.5px solid #2f5866"></div>
<div class="a t ser" style="left:1094px;width:135px;top:421px;height:20px;line-height:20px;text-align:center;font-size:9px;color:#c8d4da;font-weight:bold"><span style="display:inline-block;width:4px;height:4px;background:#4aa8b8;margin-right:6px;vertical-align:middle"></span>Images Y</div>
<div class="a t ser" style="left:933px;top:455.6px;font-size:9px;line-height:10.8px;color:#bccacf;font-weight:bold">Daily:</div>
<div class="a t ser" style="left:975px;top:455.2px;font-size:9.6px;line-height:11.5px;color:#e8c020;font-weight:bold">$ 2,501k / $841k</div>
<div class="a t ser" style="left:1095px;top:455.6px;font-size:9px;line-height:10.8px;color:#bccacf;font-weight:bold">Daily:</div>
<div class="a t ser" style="left:1137px;top:453.2px;font-size:9.6px;line-height:11.5px;color:#e8c020;font-weight:bold">$ 4,500k / $707k</div>
<div class="a t ser" style="left:933px;top:483.6px;font-size:9px;line-height:10.8px;color:#bccacf;font-weight:bold">Overall:</div>
<div class="a t ser" style="left:975px;top:482.2px;font-size:9.6px;line-height:11.5px;color:#e8c020;font-weight:bold">$ 6,701k / $841k</div>
<div class="a t ser" style="left:1095px;top:483.6px;font-size:9px;line-height:10.8px;color:#bccacf;font-weight:bold">MTD:</div>
<div class="a t ser" style="left:1137px;top:482.2px;font-size:9.6px;line-height:11.5px;color:#e8c020;font-weight:bold">$ 890k / $140k</div>
<div class="a" style="left:983px;top:510px;width:194px;height:3px;background:#7cc4d4;border-radius:1px"></div>
<div class="a" style="left:1246px;top:392px;width:345px;height:122px;background:#354c58"></div>
<svg class="a" style="left:1294px;top:391px" width="130" height="23"><path d="M0 0 L130 0 L126 16 Q124 22 118 22 L12 22 Q6 22 4 16 Z" fill="#0a1420"/></svg>
<div class="a t ser" style="left:1209.0px;width:300px;text-align:center;top:396.3px;font-size:9.5px;line-height:11.4px;color:#78bcc8;font-weight:bold">Shipping</div>
<svg class="a" style="left:1482px;top:391px" width="92" height="23"><path d="M0 0 L92 0 L88 16 Q86 22 80 22 L12 22 Q6 22 4 16 Z" fill="#0a1420"/></svg>
<div class="a t ser" style="left:1378.0px;width:300px;text-align:center;top:396.3px;font-size:9.5px;line-height:11.4px;color:#78bcc8;font-weight:bold">OTD</div>
<div class="a" style="left:1255px;top:420px;width:93px;height:23px;background:#25434f;border:1.5px solid #2f5866"></div>
<div class="a t ser" style="left:1255px;width:93px;top:420px;height:23px;line-height:23px;text-align:center;font-size:9px;color:#c8d4da;font-weight:bold"><span style="display:inline-block;width:4px;height:4px;background:#4aa8b8;margin-right:6px;vertical-align:middle"></span>Pack Confirmed</div>
<div class="a" style="left:1363px;top:420px;width:94px;height:23px;background:#25434f;border:1.5px solid #2f5866"></div>
<div class="a t ser" style="left:1363px;width:94px;top:420px;height:23px;line-height:23px;text-align:center;font-size:9px;color:#c8d4da;font-weight:bold"><span style="display:inline-block;width:4px;height:4px;background:#4aa8b8;margin-right:6px;vertical-align:middle"></span>Shipped</div>
<div class="a" style="left:1467px;top:418px;width:2px;height:80px;background:linear-gradient(#2a4654,#5a8090,#2a4654)"></div>
<div class="a t ser" style="left:1257px;top:454.6px;font-size:9px;line-height:10.8px;color:#bccacf;font-weight:bold">Daily:</div>
<div class="a t ser" style="left:1286px;top:454.2px;font-size:9.6px;line-height:11.5px;color:#e8c020;font-weight:bold">$ 3,300k / $864k</div>
<div class="a t ser" style="left:1365px;top:454.6px;font-size:9px;line-height:10.8px;color:#bccacf;font-weight:bold">Daily:</div>
<div class="a t ser" style="left:1393px;top:454.2px;font-size:9.6px;line-height:11.5px;color:#e8c020;font-weight:bold">$ 100k / $207k</div>
<div class="a t ser" style="left:1257px;top:483.6px;font-size:9px;line-height:10.8px;color:#bccacf;font-weight:bold">MTD:</div>
<div class="a t ser" style="left:1286px;top:483.2px;font-size:9.6px;line-height:11.5px;color:#e8c020;font-weight:bold">$ 890k / $140k</div>
<div class="a t ser" style="left:1366px;top:483.6px;font-size:9px;line-height:10.8px;color:#bccacf;font-weight:bold">MTD:</div>
<div class="a t ser" style="left:1385px;top:483.2px;font-size:9.6px;line-height:11.5px;color:#e8c020;font-weight:bold">$ 4,700k / $1032k</div>
<div class="a t ser" style="left:1485px;top:436.6px;font-size:9px;line-height:10.8px;color:#bccacf;font-weight:bold">Daily:</div>
<div class="a t ser" style="left:1535px;top:436.2px;font-size:9.6px;line-height:11.5px;color:#e8c020;font-weight:bold">95%</div>
<div class="a t ser" style="left:1492px;top:470.6px;font-size:9px;line-height:10.8px;color:#bccacf;font-weight:bold">MTD:</div>
<div class="a t ser" style="left:1535px;top:470.2px;font-size:9.6px;line-height:11.5px;color:#e8c020;font-weight:bold">75%</div>
<div class="a" style="left:1264px;top:511px;width:176px;height:3px;background:#7cc4d4;border-radius:1px"></div>
<div class="a" style="left:1479px;top:511px;width:95px;height:3px;background:#7cc4d4;border-radius:1px"></div>
<div class="a" style="left:586px;top:514px;width:1010px;height:510px;background:#0a1520"></div>
<div class="a" style="left:586px;top:982px;width:1283px;height:42px;background:#060d17"></div>
<div class="a" style="left:586px;top:519px;width:329px;height:143px;background:linear-gradient(180deg,#2b5462 0%,#1c404e 45%,#0e2432 100%)"></div>
<svg class="a" style="left:586px;top:519px" width="106" height="14"><path d="M0 0 L106 0 L92 14 L0 14 Z" fill="#8ef4fa"/></svg>
<div class="a" style="left:590px;top:523px;width:6px;height:6px;background:#3a7a88;opacity:.7"></div>
<div class="a t ser" style="left:612px;top:524.6px;font-size:9px;line-height:10.8px;color:#1e3440;font-weight:bold;opacity:.8">Channel</div>
<div class="a" style="left:688px;top:525px;width:11px;height:10px;background:#1a88e8"></div>
<div class="a t ser" style="left:703px;top:525.5px;font-size:7.5px;line-height:9.0px;color:#c0ccd2;font-weight:bold">COUNT(name)</div>
<div class="a" style="left:756px;top:525px;width:11px;height:10px;background:#12c8b8"></div>
<div class="a t ser" style="left:771px;top:525.5px;font-size:7.5px;line-height:9.0px;color:#c0ccd2;font-weight:bold">COUNT(content)</div>
<div class="a" style="left:835px;top:525px;width:11px;height:10px;background:#8cd860"></div>
<div class="a t ser" style="left:850px;top:525.5px;font-size:7.5px;line-height:9.0px;color:#c0ccd2;font-weight:bold">COUNT(details)</div>
<div class="a" style="left:612px;top:547px;width:2px;height:95px;background:#4a6270"></div>
<div class="a" style="left:614px;top:553.5px;width:7px;height:11px;background:linear-gradient(90deg,#0a90f8,#1e5a90)"></div>
<div class="a" style="left:621px;top:553.5px;width:8px;height:11px;background:linear-gradient(90deg,#10e8d0,#1a7078)"></div>
<div class="a" style="left:629px;top:553.5px;width:10px;height:11px;background:linear-gradient(90deg,#2a6050,#a4f060)"></div>
<div class="a" style="left:614px;top:577.0px;width:7px;height:11px;background:linear-gradient(90deg,#0a90f8,#1e5a90)"></div>
<div class="a" style="left:621px;top:577.0px;width:8px;height:11px;background:linear-gradient(90deg,#10e8d0,#1a7078)"></div>
<div class="a" style="left:629px;top:577.0px;width:8px;height:11px;background:linear-gradient(90deg,#2a6050,#a4f060)"></div>
<div class="a" style="left:614px;top:600.5px;width:2px;height:11px;background:linear-gradient(90deg,#10e8d0,#1a7078)"></div>
<div class="a" style="left:616px;top:600.5px;width:3px;height:11px;background:linear-gradient(90deg,#2a6050,#a4f060)"></div>
<div class="a" style="left:614px;top:624.0px;width:79px;height:11px;background:linear-gradient(90deg,#0a90f8,#1e5a90)"></div>
<div class="a" style="left:693px;top:624.0px;width:82px;height:11px;background:linear-gradient(90deg,#10e8d0,#1a7078)"></div>
<div class="a" style="left:775px;top:624.0px;width:80px;height:11px;background:linear-gradient(90deg,#2a6050,#a4f060)"></div>
<div class="a t ser" style="left:590px;width:18px;text-align:right;top:554px;font-size:8px;line-height:10px;color:#b0bcc4;font-weight:bold">1</div>
<div class="a t ser" style="left:590px;width:18px;text-align:right;top:577.5px;font-size:8px;line-height:10px;color:#b0bcc4;font-weight:bold">98</div>
<div class="a t ser" style="left:590px;width:18px;text-align:right;top:601px;font-size:8px;line-height:10px;color:#b0bcc4;font-weight:bold">0</div>
<div class="a t ser" style="left:590px;width:18px;text-align:right;top:624.5px;font-size:8px;line-height:10px;color:#b0bcc4;font-weight:bold">34</div>
<div class="a t ser" style="left:463px;width:300px;text-align:center;top:645.2px;font-size:8px;line-height:9.6px;color:#c8d2d8;font-weight:bold">0</div>
<div class="a t ser" style="left:519px;width:300px;text-align:center;top:645.2px;font-size:8px;line-height:9.6px;color:#c8d2d8;font-weight:bold">100</div>
<div class="a t ser" style="left:576px;width:300px;text-align:center;top:645.2px;font-size:8px;line-height:9.6px;color:#c8d2d8;font-weight:bold">200</div>
<div class="a t ser" style="left:633px;width:300px;text-align:center;top:645.2px;font-size:8px;line-height:9.6px;color:#c8d2d8;font-weight:bold">300</div>
<div class="a t ser" style="left:689px;width:300px;text-align:center;top:645.2px;font-size:8px;line-height:9.6px;color:#c8d2d8;font-weight:bold">400</div>
<div class="a t ser" style="left:746px;width:300px;text-align:center;top:645.2px;font-size:8px;line-height:9.6px;color:#c8d2d8;font-weight:bold">500</div>
<div class="a" style="left:591px;top:667px;width:325px;height:157px;background:linear-gradient(180deg,#2b5462 0%,#1c404e 45%,#0e2432 100%)"></div>
<svg class="a" style="left:591px;top:667px" width="105" height="15"><path d="M0 0 L105 0 L90 15 L0 15 Z" fill="#8ef4fa"/></svg>
<div class="a" style="left:595px;top:671px;width:6px;height:6px;background:#3a7a88;opacity:.7"></div>
<svg class="a" style="left:616px;top:684.5px;opacity:0.68" width="54" height="9"><g stroke="#1a2a34" fill="none"><line x1="2.1" y1="0.5" x2="2.1" y2="8.5" stroke-width="1.26"/><line x1="2.4" y1="1.3" x2="6.6" y2="1.3" stroke-width="1.26"/><line x1="3.6" y1="3.4" x2="8.3" y2="3.4" stroke-width="1.26"/><line x1="0.6" y1="5.6" x2="5.8" y2="5.6" stroke-width="1.26"/><line x1="3.2" y1="8.4" x2="7.5" y2="8.4" stroke-width="1.26"/><line x1="3.2" y1="1.7" x2="3.2" y2="7.4" stroke-width="1.26"/><line x1="4.5" y1="2.5" x2="4.5" y2="7.8" stroke-width="1.26"/><rect x="9.9" y="1.1" width="2.8" height="6.8" fill="none" stroke-width="1.26"/><line x1="9.8" y1="0.8" x2="15.1" y2="0.8" stroke-width="1.26"/><line x1="12.8" y1="2.4" x2="15.3" y2="2.4" stroke-width="1.26"/><line x1="11.9" y1="4.5" x2="17.1" y2="4.5" stroke-width="1.26"/><line x1="11.6" y1="6.7" x2="15.9" y2="6.7" stroke-width="1.26"/><line x1="10.9" y1="8.5" x2="15.2" y2="8.5" stroke-width="1.26"/><line x1="11.7" y1="0.2" x2="11.7" y2="8.4" stroke-width="1.26"/><line x1="12.8" y1="1.8" x2="12.8" y2="7.2" stroke-width="1.26"/><line x1="11.1" y1="0.8" x2="11.1" y2="7.7" stroke-width="1.26"/><line x1="20.1" y1="0.5" x2="20.1" y2="8.5" stroke-width="1.26"/><line x1="20.0" y1="0.9" x2="24.0" y2="0.9" stroke-width="1.26"/><line x1="19.9" y1="2.3" x2="24.3" y2="2.3" stroke-width="1.26"/><line x1="19.4" y1="4.5" x2="25.7" y2="4.5" stroke-width="1.26"/><line x1="18.6" y1="6.3" x2="24.6" y2="6.3" stroke-width="1.26"/><line x1="18.6" y1="8.5" x2="25.2" y2="8.5" stroke-width="1.26"/><line x1="21.6" y1="1.6" x2="21.6" y2="7.3" stroke-width="1.26"/><line x1="21.2" y1="1.6" x2="21.2" y2="7.9" stroke-width="1.26"/><line x1="29.4" y1="0.9" x2="34.7" y2="0.9" stroke-width="1.26"/><line x1="27.9" y1="2.9" x2="33.1" y2="2.9" stroke-width="1.26"/><line x1="30.4" y1="5.5" x2="33.6" y2="5.5" stroke-width="1.26"/><line x1="29.0" y1="8.4" x2="33.2" y2="8.4" stroke-width="1.26"/><line x1="28.9" y1="2.7" x2="28.9" y2="8.5" stroke-width="1.26"/><line x1="30.4" y1="0.9" x2="30.4" y2="8.5" stroke-width="1.26"/><line x1="39.3" y1="0.5" x2="41.4" y2="0.5" stroke-width="1.26"/><line x1="38.5" y1="2.8" x2="44.2" y2="2.8" stroke-width="1.26"/><line x1="36.6" y1="4.6" x2="44.3" y2="4.6" stroke-width="1.26"/><line x1="38.6" y1="6.5" x2="41.3" y2="6.5" stroke-width="1.26"/><line x1="38.0" y1="8.3" x2="43.4" y2="8.3" stroke-width="1.26"/><line x1="38.4" y1="0.2" x2="38.4" y2="8.2" stroke-width="1.26"/><line x1="38.2" y1="2.0" x2="38.2" y2="8.1" stroke-width="1.26"/><rect x="45.9" y="1.1" width="2.8" height="6.8" fill="none" stroke-width="1.26"/><line x1="48.2" y1="0.7" x2="50.5" y2="0.7" stroke-width="1.26"/><line x1="48.5" y1="2.4" x2="52.4" y2="2.4" stroke-width="1.26"/><line x1="45.9" y1="4.5" x2="50.7" y2="4.5" stroke-width="1.26"/><line x1="48.9" y1="6.1" x2="52.1" y2="6.1" stroke-width="1.26"/><line x1="46.3" y1="8.5" x2="51.6" y2="8.5" stroke-width="1.26"/><line x1="51.6" y1="0.3" x2="51.6" y2="8.7" stroke-width="1.26"/><line x1="49.3" y1="0.1" x2="49.3" y2="7.5" stroke-width="1.26"/></g></svg>
<div class="a" style="left:763px;top:676px;width:11px;height:10px;background:#1a88e8"></div>
<div class="a t ser" style="left:778px;top:676.5px;font-size:7.5px;line-height:9.0px;color:#c0ccd2;font-weight:bold">COUNT(name)</div>
<div class="a" style="left:827px;top:676px;width:11px;height:10px;background:#12c8b8"></div>
<div class="a t ser" style="left:842px;top:676.5px;font-size:7.5px;line-height:9.0px;color:#c0ccd2;font-weight:bold">COUNT(content)</div>
<div class="a" style="left:618px;top:695px;width:2px;height:108px;background:#4a6270"></div>
<div class="a" style="left:620px;top:703.5px;width:13px;height:11px;background:linear-gradient(90deg,#0a90f8,#1e5a90)"></div>
<div class="a" style="left:633px;top:703.5px;width:13px;height:11px;background:linear-gradient(90deg,#10e8d0,#1a7078)"></div>
<div class="a" style="left:620px;top:730.5px;width:11px;height:11px;background:linear-gradient(90deg,#0a90f8,#1e5a90)"></div>
<div class="a" style="left:631px;top:730.5px;width:12px;height:11px;background:linear-gradient(90deg,#10e8d0,#1a7078)"></div>
<div class="a" style="left:620px;top:757.5px;width:2px;height:11px;background:linear-gradient(90deg,#0a90f8,#1e5a90)"></div>
<div class="a" style="left:622px;top:757.5px;width:2px;height:11px;background:linear-gradient(90deg,#10e8d0,#1a7078)"></div>
<div class="a" style="left:620px;top:784.5px;width:130px;height:11px;background:linear-gradient(90deg,#0a90f8,#1e5a90)"></div>
<div class="a" style="left:750px;top:784.5px;width:132px;height:11px;background:linear-gradient(90deg,#10e8d0,#1a7078)"></div>
<div class="a t ser" style="left:594px;width:20px;text-align:right;top:704px;font-size:8px;line-height:10px;color:#b0bcc4;font-weight:bold">1</div>
<div class="a t ser" style="left:594px;width:20px;text-align:right;top:731px;font-size:8px;line-height:10px;color:#b0bcc4;font-weight:bold">98</div>
<div class="a t ser" style="left:594px;width:20px;text-align:right;top:758px;font-size:8px;line-height:10px;color:#b0bcc4;font-weight:bold">0</div>
<div class="a t ser" style="left:594px;width:20px;text-align:right;top:785px;font-size:8px;line-height:10px;color:#b0bcc4;font-weight:bold">34</div>
<div class="a t ser" style="left:470px;width:300px;text-align:center;top:808.2px;font-size:8px;line-height:9.6px;color:#c8d2d8;font-weight:bold">0</div>
<div class="a t ser" style="left:515px;width:300px;text-align:center;top:808.2px;font-size:8px;line-height:9.6px;color:#c8d2d8;font-weight:bold">50</div>
<div class="a t ser" style="left:562px;width:300px;text-align:center;top:808.2px;font-size:8px;line-height:9.6px;color:#c8d2d8;font-weight:bold">100</div>
<div class="a t ser" style="left:608px;width:300px;text-align:center;top:808.2px;font-size:8px;line-height:9.6px;color:#c8d2d8;font-weight:bold">150</div>
<div class="a t ser" style="left:654px;width:300px;text-align:center;top:808.2px;font-size:8px;line-height:9.6px;color:#c8d2d8;font-weight:bold">200</div>
<div class="a t ser" style="left:700px;width:300px;text-align:center;top:808.2px;font-size:8px;line-height:9.6px;color:#c8d2d8;font-weight:bold">250</div>
<div class="a t ser" style="left:747px;width:300px;text-align:center;top:808.2px;font-size:8px;line-height:9.6px;color:#c8d2d8;font-weight:bold">300</div>
<div class="a" style="left:592px;top:829px;width:325px;height:153px;background:linear-gradient(180deg,#2b5462 0%,#1c404e 45%,#0e2432 100%)"></div>
<svg class="a" style="left:592px;top:829px" width="103" height="15"><path d="M0 0 L103 0 L88 15 L0 15 Z" fill="#8ef4fa"/></svg>
<div class="a" style="left:596px;top:833px;width:6px;height:6px;background:#3a7a88;opacity:.7"></div>
<svg class="a" style="left:613px;top:837.0px;opacity:0.53" width="56" height="8"><g stroke="#1a2a34" fill="none"><line x1="3.4" y1="0.9" x2="6.1" y2="0.9" stroke-width="1.12"/><line x1="1.7" y1="3.1" x2="6.9" y2="3.1" stroke-width="1.12"/><line x1="2.8" y1="4.8" x2="5.2" y2="4.8" stroke-width="1.12"/><line x1="1.1" y1="7.3" x2="5.7" y2="7.3" stroke-width="1.12"/><line x1="4.9" y1="0.9" x2="4.9" y2="7.5" stroke-width="1.12"/><line x1="5.0" y1="1.1" x2="5.0" y2="7.0" stroke-width="1.12"/><line x1="8.9" y1="1.0" x2="14.7" y2="1.0" stroke-width="1.12"/><line x1="8.8" y1="2.3" x2="14.1" y2="2.3" stroke-width="1.12"/><line x1="9.6" y1="4.1" x2="13.9" y2="4.1" stroke-width="1.12"/><line x1="11.4" y1="5.2" x2="15.0" y2="5.2" stroke-width="1.12"/><line x1="9.3" y1="7.0" x2="13.3" y2="7.0" stroke-width="1.12"/><line x1="12.3" y1="2.3" x2="12.3" y2="7.8" stroke-width="1.12"/><line x1="11.8" y1="1.2" x2="11.8" y2="6.2" stroke-width="1.12"/><rect x="16.8" y="1.0" width="2.5" height="6.0" fill="none" stroke-width="1.12"/><line x1="17.0" y1="0.8" x2="23.5" y2="0.8" stroke-width="1.12"/><line x1="17.0" y1="2.3" x2="22.1" y2="2.3" stroke-width="1.12"/><line x1="17.9" y1="4.0" x2="23.4" y2="4.0" stroke-width="1.12"/><line x1="17.4" y1="5.5" x2="21.4" y2="5.5" stroke-width="1.12"/><line x1="19.6" y1="6.9" x2="23.1" y2="6.9" stroke-width="1.12"/><line x1="17.9" y1="1.8" x2="17.9" y2="7.0" stroke-width="1.12"/><line x1="22.2" y1="2.2" x2="22.2" y2="7.3" stroke-width="1.12"/><line x1="19.2" y1="2.3" x2="19.2" y2="7.3" stroke-width="1.12"/><line x1="25.6" y1="0.5" x2="29.2" y2="0.5" stroke-width="1.12"/><line x1="26.6" y1="2.7" x2="29.5" y2="2.7" stroke-width="1.12"/><line x1="25.3" y1="4.0" x2="28.9" y2="4.0" stroke-width="1.12"/><line x1="27.0" y1="5.2" x2="31.4" y2="5.2" stroke-width="1.12"/><line x1="25.7" y1="6.9" x2="31.0" y2="6.9" stroke-width="1.12"/><line x1="28.6" y1="1.3" x2="28.6" y2="7.4" stroke-width="1.12"/><line x1="28.2" y1="1.6" x2="28.2" y2="7.8" stroke-width="1.12"/><line x1="35.4" y1="0.4" x2="37.7" y2="0.4" stroke-width="1.12"/><line x1="33.2" y1="2.6" x2="38.0" y2="2.6" stroke-width="1.12"/><line x1="34.8" y1="3.9" x2="39.4" y2="3.9" stroke-width="1.12"/><line x1="34.3" y1="5.6" x2="37.7" y2="5.6" stroke-width="1.12"/><line x1="35.5" y1="7.0" x2="37.0" y2="7.0" stroke-width="1.12"/><line x1="34.9" y1="0.0" x2="34.9" y2="7.8" stroke-width="1.12"/><line x1="38.6" y1="0.5" x2="38.6" y2="6.5" stroke-width="1.12"/><line x1="42.6" y1="0.4" x2="44.9" y2="0.4" stroke-width="1.12"/><line x1="42.3" y1="2.6" x2="47.5" y2="2.6" stroke-width="1.12"/><line x1="43.2" y1="5.2" x2="46.9" y2="5.2" stroke-width="1.12"/><line x1="40.7" y1="7.2" x2="46.2" y2="7.2" stroke-width="1.12"/><line x1="41.7" y1="1.7" x2="41.7" y2="7.1" stroke-width="1.12"/><line x1="46.4" y1="2.1" x2="46.4" y2="5.8" stroke-width="1.12"/><line x1="49.9" y1="0.4" x2="49.9" y2="7.6" stroke-width="1.12"/><line x1="50.7" y1="0.6" x2="52.8" y2="0.6" stroke-width="1.12"/><line x1="51.3" y1="2.8" x2="53.0" y2="2.8" stroke-width="1.12"/><line x1="49.3" y1="4.3" x2="53.3" y2="4.3" stroke-width="1.12"/><line x1="49.0" y1="5.4" x2="54.2" y2="5.4" stroke-width="1.12"/><line x1="49.0" y1="7.5" x2="53.9" y2="7.5" stroke-width="1.12"/><line x1="52.6" y1="1.9" x2="52.6" y2="8.0" stroke-width="1.12"/><line x1="52.4" y1="2.2" x2="52.4" y2="6.4" stroke-width="1.12"/></g></svg>
<div class="a" style="left:875px;top:838px;width:11px;height:10px;background:#1a88e8"></div>
<div class="a t ser" style="left:890px;top:838.5px;font-size:7.5px;line-height:9.0px;color:#c0ccd2;font-weight:bold">name</div>
<div class="a" style="left:618px;top:856px;width:2px;height:106px;background:#4a6270"></div>
<div class="a" style="left:620px;top:864.5px;width:26px;height:11px;background:linear-gradient(90deg,#0a8cf8,#1c5a8e)"></div>
<div class="a" style="left:620px;top:890.5px;width:24px;height:11px;background:linear-gradient(90deg,#0a8cf8,#1c5a8e)"></div>
<div class="a" style="left:620px;top:916.5px;width:4px;height:11px;background:linear-gradient(90deg,#0a8cf8,#1c5a8e)"></div>
<div class="a" style="left:620px;top:943.0px;width:263px;height:11px;background:linear-gradient(90deg,#0a8cf8,#1a6aa8 60%,#1e5080)"></div>
<div class="a t ser" style="left:594px;width:20px;text-align:right;top:865px;font-size:8px;line-height:10px;color:#b0bcc4;font-weight:bold">1</div>
<div class="a t ser" style="left:594px;width:20px;text-align:right;top:891px;font-size:8px;line-height:10px;color:#b0bcc4;font-weight:bold">98</div>
<div class="a t ser" style="left:594px;width:20px;text-align:right;top:917px;font-size:8px;line-height:10px;color:#b0bcc4;font-weight:bold">0</div>
<div class="a t ser" style="left:594px;width:20px;text-align:right;top:943.5px;font-size:8px;line-height:10px;color:#b0bcc4;font-weight:bold">34</div>
<div class="a t ser" style="left:469px;width:300px;text-align:center;top:967.2px;font-size:8px;line-height:9.6px;color:#c8d2d8;font-weight:bold">0</div>
<div class="a t ser" style="left:524px;width:300px;text-align:center;top:967.2px;font-size:8px;line-height:9.6px;color:#c8d2d8;font-weight:bold">20</div>
<div class="a t ser" style="left:580px;width:300px;text-align:center;top:967.2px;font-size:8px;line-height:9.6px;color:#c8d2d8;font-weight:bold">40</div>
<div class="a t ser" style="left:635px;width:300px;text-align:center;top:967.2px;font-size:8px;line-height:9.6px;color:#c8d2d8;font-weight:bold">60</div>
<div class="a t ser" style="left:692px;width:300px;text-align:center;top:967.2px;font-size:8px;line-height:9.6px;color:#c8d2d8;font-weight:bold">80</div>
<div class="a t ser" style="left:747px;width:300px;text-align:center;top:967.2px;font-size:8px;line-height:9.6px;color:#c8d2d8;font-weight:bold">100</div>
<div class="a" style="left:923px;top:520px;width:318px;height:231px;background:linear-gradient(180deg,#2b5462 0%,#1c404e 45%,#0e2432 100%)"></div>
<svg class="a" style="left:923px;top:520px" width="224" height="15"><path d="M0 0 L224 0 L209 15 L0 15 Z" fill="#8ef4fa"/></svg>
<div class="a" style="left:927px;top:524px;width:6px;height:6px;background:#3a7a88;opacity:.7"></div>
<div class="a t ser" style="left:941px;top:523.1px;font-size:9.8px;line-height:11.8px;color:#1e3a44;font-weight:bold;opacity:.75">Image N(Oracle)<svg style="display:inline-block;vertical-align:-1px" width="51" height="8"><g stroke="#1e3a44" fill="none"><line x1="2.0" y1="0.4" x2="2.0" y2="8.1" stroke-width="1.19"/><line x1="1.0" y1="1.1" x2="7.7" y2="1.1" stroke-width="1.19"/><line x1="1.5" y1="2.8" x2="5.9" y2="2.8" stroke-width="1.19"/><line x1="1.9" y1="5.8" x2="5.4" y2="5.8" stroke-width="1.19"/><line x1="2.5" y1="7.4" x2="7.5" y2="7.4" stroke-width="1.19"/><line x1="1.3" y1="0.2" x2="1.3" y2="8.0" stroke-width="1.19"/><line x1="7.1" y1="2.1" x2="7.1" y2="7.0" stroke-width="1.19"/><line x1="9.1" y1="0.7" x2="15.8" y2="0.7" stroke-width="1.19"/><line x1="11.0" y1="2.9" x2="15.1" y2="2.9" stroke-width="1.19"/><line x1="11.3" y1="5.2" x2="14.9" y2="5.2" stroke-width="1.19"/><line x1="12.0" y1="7.4" x2="14.0" y2="7.4" stroke-width="1.19"/><line x1="11.0" y1="1.2" x2="11.0" y2="6.5" stroke-width="1.19"/><line x1="15.3" y1="0.5" x2="15.3" y2="7.7" stroke-width="1.19"/><line x1="17.6" y1="0.9" x2="22.9" y2="0.9" stroke-width="1.19"/><line x1="19.2" y1="2.2" x2="24.2" y2="2.2" stroke-width="1.19"/><line x1="17.6" y1="4.0" x2="22.7" y2="4.0" stroke-width="1.19"/><line x1="19.8" y1="5.6" x2="23.5" y2="5.6" stroke-width="1.19"/><line x1="17.7" y1="7.6" x2="23.7" y2="7.6" stroke-width="1.19"/><line x1="20.5" y1="0.9" x2="20.5" y2="8.3" stroke-width="1.19"/><line x1="24.2" y1="1.0" x2="24.2" y2="6.3" stroke-width="1.19"/><line x1="27.5" y1="0.4" x2="27.5" y2="8.1" stroke-width="1.19"/><line x1="26.7" y1="1.3" x2="33.2" y2="1.3" stroke-width="1.19"/><line x1="29.2" y1="2.6" x2="30.7" y2="2.6" stroke-width="1.19"/><line x1="29.1" y1="4.7" x2="30.7" y2="4.7" stroke-width="1.19"/><line x1="29.2" y1="5.6" x2="31.8" y2="5.6" stroke-width="1.19"/><line x1="26.2" y1="7.4" x2="31.0" y2="7.4" stroke-width="1.19"/><line x1="32.5" y1="2.4" x2="32.5" y2="6.8" stroke-width="1.19"/><line x1="32.3" y1="0.4" x2="32.3" y2="7.8" stroke-width="1.19"/><line x1="32.4" y1="0.5" x2="32.4" y2="6.3" stroke-width="1.19"/><line x1="36.0" y1="0.4" x2="36.0" y2="8.1" stroke-width="1.19"/><line x1="37.0" y1="0.7" x2="41.8" y2="0.7" stroke-width="1.19"/><line x1="37.4" y1="2.2" x2="41.9" y2="2.2" stroke-width="1.19"/><line x1="36.8" y1="4.4" x2="39.4" y2="4.4" stroke-width="1.19"/><line x1="36.5" y1="5.8" x2="39.8" y2="5.8" stroke-width="1.19"/><line x1="37.3" y1="7.7" x2="40.3" y2="7.7" stroke-width="1.19"/><line x1="40.9" y1="0.2" x2="40.9" y2="6.5" stroke-width="1.19"/><line x1="35.7" y1="0.8" x2="35.7" y2="7.9" stroke-width="1.19"/><line x1="40.8" y1="1.3" x2="40.8" y2="6.4" stroke-width="1.19"/><line x1="45.7" y1="0.7" x2="50.4" y2="0.7" stroke-width="1.19"/><line x1="45.0" y1="3.1" x2="50.0" y2="3.1" stroke-width="1.19"/><line x1="43.7" y1="5.4" x2="50.3" y2="5.4" stroke-width="1.19"/><line x1="43.1" y1="8.1" x2="49.8" y2="8.1" stroke-width="1.19"/><line x1="47.0" y1="0.7" x2="47.0" y2="6.1" stroke-width="1.19"/><line x1="46.2" y1="2.1" x2="46.2" y2="8.4" stroke-width="1.19"/><line x1="43.9" y1="1.1" x2="43.9" y2="8.4" stroke-width="1.19"/></g></svg> | Overall</div>
<div class="a t ser" style="left:832px;width:300px;text-align:center;top:549.5px;font-size:7.5px;line-height:9.0px;color:#62d2e2;font-weight:bold">COUNT(content)</div>
<div class="a t ser" style="left:948px;width:300px;text-align:center;top:549.5px;font-size:7.5px;line-height:9.0px;color:#62d2e2;font-weight:bold">name</div>
<div class="a t ser" style="left:1048px;width:300px;text-align:center;top:549.5px;font-size:7.5px;line-height:9.0px;color:#62d2e2;font-weight:bold">COUNT(id)</div>
<div class="a" style="left:927px;top:561.3px;width:310px;height:2.6px;background:#46646f"></div>
<div class="a" style="left:927px;top:572.5999999999999px;width:310px;height:2.6px;background:#46646f"></div>
<div class="a t ser" style="left:832px;width:300px;text-align:center;top:561.1px;font-size:7px;line-height:8.4px;color:#b8c4ca;font-weight:bold">3</div>
<div class="a t ser" style="left:948px;width:300px;text-align:center;top:561.1px;font-size:7px;line-height:8.4px;color:#b8c4ca;font-weight:bold">test1</div>
<div class="a t ser" style="left:1048px;width:300px;text-align:center;top:561.1px;font-size:7px;line-height:8.4px;color:#b8c4ca;font-weight:bold">3</div>
<div class="a" style="left:927px;top:589.4999999999999px;width:310px;height:2.6px;background:#46646f"></div>
<div class="a t ser" style="left:832px;width:300px;text-align:center;top:578.0px;font-size:7px;line-height:8.4px;color:#b8c4ca;font-weight:bold">1</div>
<div class="a t ser" style="left:948px;width:300px;text-align:center;top:578.0px;font-size:7px;line-height:8.4px;color:#b8c4ca;font-weight:bold">aaa134</div>
<div class="a t ser" style="left:1048px;width:300px;text-align:center;top:578.0px;font-size:7px;line-height:8.4px;color:#b8c4ca;font-weight:bold">1</div>
<div class="a" style="left:927px;top:606.3999999999999px;width:310px;height:2.6px;background:#46646f"></div>
<div class="a t ser" style="left:832px;width:300px;text-align:center;top:594.9px;font-size:7px;line-height:8.4px;color:#b8c4ca;font-weight:bold">1</div>
<div class="a t ser" style="left:948px;width:300px;text-align:center;top:594.9px;font-size:7px;line-height:8.4px;color:#b8c4ca;font-weight:bold">cube_1105</div>
<div class="a t ser" style="left:1048px;width:300px;text-align:center;top:594.9px;font-size:7px;line-height:8.4px;color:#b8c4ca;font-weight:bold">1</div>
<div class="a" style="left:927px;top:623.3px;width:310px;height:2.6px;background:#46646f"></div>
<div class="a t ser" style="left:832px;width:300px;text-align:center;top:611.8px;font-size:7px;line-height:8.4px;color:#b8c4ca;font-weight:bold">1</div>
<div class="a t ser" style="left:948px;width:300px;text-align:center;top:611.8px;font-size:7px;line-height:8.4px;color:#b8c4ca;font-weight:bold">baise_1105</div>
<div class="a t ser" style="left:1048px;width:300px;text-align:center;top:611.8px;font-size:7px;line-height:8.4px;color:#b8c4ca;font-weight:bold">1</div>
<div class="a" style="left:927px;top:640.1999999999999px;width:310px;height:2.6px;background:#46646f"></div>
<div class="a t ser" style="left:832px;width:300px;text-align:center;top:628.7px;font-size:7px;line-height:8.4px;color:#b8c4ca;font-weight:bold">1</div>
<svg class="a" style="left:1084px;top:629.4px;opacity:0.58" width="28" height="7"><g stroke="#b8c4ca" fill="none"><rect x="0.7" y="0.8" width="2.2" height="5.2" fill="none" stroke-width="1.00"/><line x1="1.4" y1="0.4" x2="4.5" y2="0.4" stroke-width="1.00"/><line x1="1.4" y1="2.4" x2="6.2" y2="2.4" stroke-width="1.00"/><line x1="2.3" y1="3.5" x2="4.7" y2="3.5" stroke-width="1.00"/><line x1="0.9" y1="5.1" x2="4.5" y2="5.1" stroke-width="1.00"/><line x1="2.1" y1="6.4" x2="5.2" y2="6.4" stroke-width="1.00"/><line x1="2.3" y1="2.0" x2="2.3" y2="5.9" stroke-width="1.00"/><line x1="4.4" y1="1.3" x2="4.4" y2="6.8" stroke-width="1.00"/><line x1="4.3" y1="1.0" x2="4.3" y2="6.1" stroke-width="1.00"/><line x1="8.3" y1="1.0" x2="12.5" y2="1.0" stroke-width="1.00"/><line x1="9.4" y1="2.5" x2="12.0" y2="2.5" stroke-width="1.00"/><line x1="9.2" y1="4.5" x2="11.1" y2="4.5" stroke-width="1.00"/><line x1="7.7" y1="6.3" x2="13.0" y2="6.3" stroke-width="1.00"/><line x1="11.4" y1="1.4" x2="11.4" y2="5.7" stroke-width="1.00"/><line x1="10.5" y1="1.8" x2="10.5" y2="6.1" stroke-width="1.00"/><line x1="8.3" y1="0.7" x2="8.3" y2="6.2" stroke-width="1.00"/><rect x="14.7" y="0.8" width="2.2" height="5.2" fill="none" stroke-width="1.00"/><line x1="15.2" y1="1.0" x2="19.2" y2="1.0" stroke-width="1.00"/><line x1="16.6" y1="2.3" x2="18.7" y2="2.3" stroke-width="1.00"/><line x1="16.6" y1="4.7" x2="18.7" y2="4.7" stroke-width="1.00"/><line x1="15.8" y1="6.6" x2="19.2" y2="6.6" stroke-width="1.00"/><line x1="19.7" y1="1.0" x2="19.7" y2="5.9" stroke-width="1.00"/><line x1="16.5" y1="1.8" x2="16.5" y2="6.0" stroke-width="1.00"/><line x1="23.3" y1="0.8" x2="26.2" y2="0.8" stroke-width="1.00"/><line x1="23.3" y1="2.4" x2="25.4" y2="2.4" stroke-width="1.00"/><line x1="23.4" y1="4.3" x2="25.8" y2="4.3" stroke-width="1.00"/><line x1="23.9" y1="6.2" x2="25.4" y2="6.2" stroke-width="1.00"/><line x1="23.5" y1="0.5" x2="23.5" y2="6.8" stroke-width="1.00"/><line x1="22.1" y1="1.1" x2="22.1" y2="5.6" stroke-width="1.00"/><line x1="25.9" y1="1.3" x2="25.9" y2="6.8" stroke-width="1.00"/></g></svg>
<div class="a t ser" style="left:1048px;width:300px;text-align:center;top:628.7px;font-size:7px;line-height:8.4px;color:#b8c4ca;font-weight:bold">1</div>
<div class="a" style="left:927px;top:657.0999999999999px;width:310px;height:2.6px;background:#46646f"></div>
<div class="a t ser" style="left:832px;width:300px;text-align:center;top:645.6px;font-size:7px;line-height:8.4px;color:#b8c4ca;font-weight:bold">3</div>
<div class="a t ser" style="left:948px;width:300px;text-align:center;top:645.6px;font-size:7px;line-height:8.4px;color:#b8c4ca;font-weight:bold">2</div>
<div class="a t ser" style="left:1048px;width:300px;text-align:center;top:645.6px;font-size:7px;line-height:8.4px;color:#b8c4ca;font-weight:bold">3</div>
<div class="a" style="left:927px;top:673.9999999999999px;width:310px;height:2.6px;background:#46646f"></div>
<div class="a t ser" style="left:832px;width:300px;text-align:center;top:662.5px;font-size:7px;line-height:8.4px;color:#b8c4ca;font-weight:bold">3</div>
<div class="a t ser" style="left:948px;width:300px;text-align:center;top:662.5px;font-size:7px;line-height:8.4px;color:#b8c4ca;font-weight:bold">4</div>
<div class="a t ser" style="left:1048px;width:300px;text-align:center;top:662.5px;font-size:7px;line-height:8.4px;color:#b8c4ca;font-weight:bold">3</div>
<div class="a" style="left:927px;top:690.8999999999999px;width:310px;height:2.6px;background:#46646f"></div>
<div class="a t ser" style="left:832px;width:300px;text-align:center;top:679.4px;font-size:7px;line-height:8.4px;color:#b8c4ca;font-weight:bold">1</div>
<div class="a t ser" style="left:948px;width:300px;text-align:center;top:679.4px;font-size:7px;line-height:8.4px;color:#b8c4ca;font-weight:bold">22</div>
<div class="a t ser" style="left:1048px;width:300px;text-align:center;top:679.4px;font-size:7px;line-height:8.4px;color:#b8c4ca;font-weight:bold">1</div>
<div class="a" style="left:927px;top:707.8px;width:310px;height:2.6px;background:#46646f"></div>
<div class="a t ser" style="left:832px;width:300px;text-align:center;top:696.3px;font-size:7px;line-height:8.4px;color:#b8c4ca;font-weight:bold">1</div>
<div class="a t ser" style="left:948px;width:300px;text-align:center;top:696.3px;font-size:7px;line-height:8.4px;color:#b8c4ca;font-weight:bold">test112</div>
<div class="a t ser" style="left:1048px;width:300px;text-align:center;top:696.3px;font-size:7px;line-height:8.4px;color:#b8c4ca;font-weight:bold">1</div>
<div class="a" style="left:927px;top:724.6999999999999px;width:310px;height:2.6px;background:#46646f"></div>
<div class="a t ser" style="left:832px;width:300px;text-align:center;top:713.2px;font-size:7px;line-height:8.4px;color:#b8c4ca;font-weight:bold">1</div>
<div class="a t ser" style="left:948px;width:300px;text-align:center;top:713.2px;font-size:7px;line-height:8.4px;color:#b8c4ca;font-weight:bold">test11202</div>
<div class="a t ser" style="left:1048px;width:300px;text-align:center;top:713.2px;font-size:7px;line-height:8.4px;color:#b8c4ca;font-weight:bold">1</div>
<div class="a" style="left:927px;top:741.5999999999999px;width:310px;height:2.6px;background:#46646f"></div>
<div class="a t ser" style="left:832px;width:300px;text-align:center;top:730.1px;font-size:7px;line-height:8.4px;color:#b8c4ca;font-weight:bold">3</div>
<div class="a t ser" style="left:948px;width:300px;text-align:center;top:730.1px;font-size:7px;line-height:8.4px;color:#b8c4ca;font-weight:bold">23</div>
<div class="a t ser" style="left:1048px;width:300px;text-align:center;top:730.1px;font-size:7px;line-height:8.4px;color:#b8c4ca;font-weight:bold">3</div>
<div class="a" style="left:924px;top:758px;width:314px;height:222px;background:linear-gradient(180deg,#2b5462 0%,#1c404e 45%,#0e2432 100%)"></div>
<svg class="a" style="left:924px;top:758px" width="220" height="15"><path d="M0 0 L220 0 L205 15 L0 15 Z" fill="#8ef4fa"/></svg>
<div class="a" style="left:928px;top:762px;width:6px;height:6px;background:#3a7a88;opacity:.7"></div>
<div class="a t ser" style="left:942px;top:761.1px;font-size:9.8px;line-height:11.8px;color:#1e3a44;font-weight:bold;opacity:.75">Stage N<svg style="display:inline-block;vertical-align:-1px" width="76" height="8"><g stroke="#1e3a44" fill="none"><rect x="0.9" y="1.0" width="2.6" height="6.4" fill="none" stroke-width="1.19"/><line x1="3.8" y1="0.5" x2="7.6" y2="0.5" stroke-width="1.19"/><line x1="1.1" y1="3.0" x2="7.1" y2="3.0" stroke-width="1.19"/><line x1="3.8" y1="5.6" x2="6.9" y2="5.6" stroke-width="1.19"/><line x1="3.0" y1="7.3" x2="5.2" y2="7.3" stroke-width="1.19"/><line x1="5.9" y1="2.0" x2="5.9" y2="8.2" stroke-width="1.19"/><line x1="4.7" y1="2.4" x2="4.7" y2="7.6" stroke-width="1.19"/><line x1="4.2" y1="1.0" x2="4.2" y2="6.9" stroke-width="1.19"/><rect x="9.4" y="1.0" width="2.6" height="6.4" fill="none" stroke-width="1.19"/><line x1="12.3" y1="0.8" x2="14.2" y2="0.8" stroke-width="1.19"/><line x1="9.4" y1="3.2" x2="14.0" y2="3.2" stroke-width="1.19"/><line x1="10.6" y1="5.3" x2="15.6" y2="5.3" stroke-width="1.19"/><line x1="9.9" y1="7.2" x2="15.8" y2="7.2" stroke-width="1.19"/><line x1="11.7" y1="2.4" x2="11.7" y2="8.3" stroke-width="1.19"/><line x1="11.5" y1="2.4" x2="11.5" y2="7.5" stroke-width="1.19"/><line x1="18.5" y1="0.7" x2="23.6" y2="0.7" stroke-width="1.19"/><line x1="17.6" y1="3.1" x2="24.6" y2="3.1" stroke-width="1.19"/><line x1="19.1" y1="5.4" x2="24.2" y2="5.4" stroke-width="1.19"/><line x1="18.2" y1="7.4" x2="23.7" y2="7.4" stroke-width="1.19"/><line x1="20.9" y1="1.0" x2="20.9" y2="6.8" stroke-width="1.19"/><line x1="24.0" y1="0.8" x2="24.0" y2="8.1" stroke-width="1.19"/><line x1="26.8" y1="0.8" x2="31.9" y2="0.8" stroke-width="1.19"/><line x1="26.4" y1="3.5" x2="31.8" y2="3.5" stroke-width="1.19"/><line x1="28.6" y1="5.5" x2="32.2" y2="5.5" stroke-width="1.19"/><line x1="29.2" y1="7.8" x2="33.2" y2="7.8" stroke-width="1.19"/><line x1="30.3" y1="1.1" x2="30.3" y2="6.0" stroke-width="1.19"/><line x1="27.3" y1="0.5" x2="27.3" y2="8.5" stroke-width="1.19"/><line x1="30.4" y1="0.5" x2="30.4" y2="8.4" stroke-width="1.19"/><line x1="36.7" y1="1.1" x2="41.1" y2="1.1" stroke-width="1.19"/><line x1="36.0" y1="2.5" x2="39.3" y2="2.5" stroke-width="1.19"/><line x1="37.7" y1="4.2" x2="41.7" y2="4.2" stroke-width="1.19"/><line x1="34.7" y1="5.6" x2="39.8" y2="5.6" stroke-width="1.19"/><line x1="36.0" y1="7.8" x2="39.4" y2="7.8" stroke-width="1.19"/><line x1="38.2" y1="2.0" x2="38.2" y2="6.6" stroke-width="1.19"/><line x1="40.1" y1="0.6" x2="40.1" y2="8.2" stroke-width="1.19"/><line x1="37.7" y1="0.2" x2="37.7" y2="7.4" stroke-width="1.19"/><line x1="44.5" y1="0.4" x2="44.5" y2="8.1" stroke-width="1.19"/><line x1="44.4" y1="0.9" x2="48.6" y2="0.9" stroke-width="1.19"/><line x1="45.5" y1="3.3" x2="49.4" y2="3.3" stroke-width="1.19"/><line x1="43.8" y1="5.1" x2="49.7" y2="5.1" stroke-width="1.19"/><line x1="46.0" y1="8.1" x2="50.3" y2="8.1" stroke-width="1.19"/><line x1="45.8" y1="0.1" x2="45.8" y2="8.1" stroke-width="1.19"/><line x1="48.1" y1="1.5" x2="48.1" y2="7.8" stroke-width="1.19"/><line x1="53.0" y1="0.4" x2="53.0" y2="8.1" stroke-width="1.19"/><line x1="51.8" y1="0.5" x2="56.8" y2="0.5" stroke-width="1.19"/><line x1="53.7" y1="2.3" x2="56.6" y2="2.3" stroke-width="1.19"/><line x1="52.2" y1="4.2" x2="56.1" y2="4.2" stroke-width="1.19"/><line x1="53.6" y1="6.3" x2="56.3" y2="6.3" stroke-width="1.19"/><line x1="53.6" y1="7.8" x2="57.6" y2="7.8" stroke-width="1.19"/><line x1="56.3" y1="1.3" x2="56.3" y2="8.0" stroke-width="1.19"/><line x1="57.8" y1="2.3" x2="57.8" y2="6.1" stroke-width="1.19"/><line x1="53.6" y1="0.6" x2="53.6" y2="7.5" stroke-width="1.19"/><line x1="61.0" y1="0.6" x2="66.3" y2="0.6" stroke-width="1.19"/><line x1="62.0" y1="2.2" x2="66.7" y2="2.2" stroke-width="1.19"/><line x1="61.3" y1="4.3" x2="67.0" y2="4.3" stroke-width="1.19"/><line x1="61.4" y1="5.8" x2="64.8" y2="5.8" stroke-width="1.19"/><line x1="62.9" y1="7.5" x2="65.4" y2="7.5" stroke-width="1.19"/><line x1="65.2" y1="1.1" x2="65.2" y2="7.2" stroke-width="1.19"/><line x1="61.1" y1="0.5" x2="61.1" y2="7.6" stroke-width="1.19"/><rect x="68.9" y="1.0" width="2.6" height="6.4" fill="none" stroke-width="1.19"/><line x1="70.5" y1="1.1" x2="73.8" y2="1.1" stroke-width="1.19"/><line x1="70.4" y1="2.7" x2="74.6" y2="2.7" stroke-width="1.19"/><line x1="69.0" y1="4.7" x2="75.3" y2="4.7" stroke-width="1.19"/><line x1="71.0" y1="5.8" x2="75.8" y2="5.8" stroke-width="1.19"/><line x1="70.4" y1="7.5" x2="74.6" y2="7.5" stroke-width="1.19"/><line x1="71.2" y1="2.4" x2="71.2" y2="8.0" stroke-width="1.19"/><line x1="72.2" y1="1.2" x2="72.2" y2="8.3" stroke-width="1.19"/><line x1="75.0" y1="1.7" x2="75.0" y2="6.2" stroke-width="1.19"/></g></svg> | MTD</div>
<div class="a t ser" style="left:832px;width:300px;text-align:center;top:785.5px;font-size:7.5px;line-height:9.0px;color:#62d2e2;font-weight:bold">COUNT(content)</div>
<div class="a t ser" style="left:948px;width:300px;text-align:center;top:785.5px;font-size:7.5px;line-height:9.0px;color:#62d2e2;font-weight:bold">name</div>
<div class="a t ser" style="left:1048px;width:300px;text-align:center;top:785.5px;font-size:7.5px;line-height:9.0px;color:#62d2e2;font-weight:bold">COUNT(id)</div>
<div class="a" style="left:928px;top:797.5px;width:306px;height:2.6px;background:#46646f"></div>
<div class="a" style="left:928px;top:808.8px;width:306px;height:2.6px;background:#46646f"></div>
<div class="a t ser" style="left:832px;width:300px;text-align:center;top:797.3px;font-size:7px;line-height:8.4px;color:#b8c4ca;font-weight:bold">3</div>
<div class="a t ser" style="left:948px;width:300px;text-align:center;top:797.3px;font-size:7px;line-height:8.4px;color:#b8c4ca;font-weight:bold">test1</div>
<div class="a t ser" style="left:1048px;width:300px;text-align:center;top:797.3px;font-size:7px;line-height:8.4px;color:#b8c4ca;font-weight:bold">3</div>
<div class="a" style="left:928px;top:825.6999999999999px;width:306px;height:2.6px;background:#46646f"></div>
<div class="a t ser" style="left:832px;width:300px;text-align:center;top:814.2px;font-size:7px;line-height:8.4px;color:#b8c4ca;font-weight:bold">1</div>
<div class="a t ser" style="left:948px;width:300px;text-align:center;top:814.2px;font-size:7px;line-height:8.4px;color:#b8c4ca;font-weight:bold">aaa134</div>
<div class="a t ser" style="left:1048px;width:300px;text-align:center;top:814.2px;font-size:7px;line-height:8.4px;color:#b8c4ca;font-weight:bold">1</div>
<div class="a" style="left:928px;top:842.5999999999999px;width:306px;height:2.6px;background:#46646f"></div>
<div class="a t ser" style="left:832px;width:300px;text-align:center;top:831.1px;font-size:7px;line-height:8.4px;color:#b8c4ca;font-weight:bold">1</div>
<div class="a t ser" style="left:948px;width:300px;text-align:center;top:831.1px;font-size:7px;line-height:8.4px;color:#b8c4ca;font-weight:bold">cube_1105</div>
<div class="a t ser" style="left:1048px;width:300px;text-align:center;top:831.1px;font-size:7px;line-height:8.4px;color:#b8c4ca;font-weight:bold">1</div>
<div class="a" style="left:928px;top:859.5px;width:306px;height:2.6px;background:#46646f"></div>
<div class="a t ser" style="left:832px;width:300px;text-align:center;top:848.0px;font-size:7px;line-height:8.4px;color:#b8c4ca;font-weight:bold">1</div>
<div class="a t ser" style="left:948px;width:300px;text-align:center;top:848.0px;font-size:7px;line-height:8.4px;color:#b8c4ca;font-weight:bold">baise_1105</div>
<div class="a t ser" style="left:1048px;width:300px;text-align:center;top:848.0px;font-size:7px;line-height:8.4px;color:#b8c4ca;font-weight:bold">1</div>
<div class="a" style="left:928px;top:876.4px;width:306px;height:2.6px;background:#46646f"></div>
<div class="a t ser" style="left:832px;width:300px;text-align:center;top:864.9px;font-size:7px;line-height:8.4px;color:#b8c4ca;font-weight:bold">1</div>
<svg class="a" style="left:1084px;top:865.6px;opacity:0.58" width="28" height="7"><g stroke="#b8c4ca" fill="none"><rect x="0.7" y="0.8" width="2.2" height="5.2" fill="none" stroke-width="1.00"/><line x1="2.0" y1="0.7" x2="5.2" y2="0.7" stroke-width="1.00"/><line x1="1.2" y1="1.8" x2="5.2" y2="1.8" stroke-width="1.00"/><line x1="0.4" y1="3.2" x2="5.5" y2="3.2" stroke-width="1.00"/><line x1="1.4" y1="4.7" x2="4.6" y2="4.7" stroke-width="1.00"/><line x1="0.8" y1="6.4" x2="5.5" y2="6.4" stroke-width="1.00"/><line x1="3.7" y1="0.8" x2="3.7" y2="5.7" stroke-width="1.00"/><line x1="4.9" y1="1.3" x2="4.9" y2="6.7" stroke-width="1.00"/><line x1="8.7" y1="0.4" x2="8.7" y2="6.6" stroke-width="1.00"/><line x1="7.7" y1="0.5" x2="11.3" y2="0.5" stroke-width="1.00"/><line x1="9.5" y1="2.8" x2="11.8" y2="2.8" stroke-width="1.00"/><line x1="9.3" y1="4.4" x2="11.2" y2="4.4" stroke-width="1.00"/><line x1="9.8" y1="6.5" x2="11.6" y2="6.5" stroke-width="1.00"/><line x1="11.5" y1="0.7" x2="11.5" y2="6.7" stroke-width="1.00"/><line x1="9.1" y1="1.0" x2="9.1" y2="5.6" stroke-width="1.00"/><line x1="10.2" y1="1.7" x2="10.2" y2="6.1" stroke-width="1.00"/><line x1="16.1" y1="0.7" x2="18.9" y2="0.7" stroke-width="1.00"/><line x1="17.0" y1="2.7" x2="20.1" y2="2.7" stroke-width="1.00"/><line x1="14.9" y1="4.7" x2="18.6" y2="4.7" stroke-width="1.00"/><line x1="16.5" y1="6.4" x2="19.3" y2="6.4" stroke-width="1.00"/><line x1="16.1" y1="1.9" x2="16.1" y2="6.7" stroke-width="1.00"/><line x1="16.2" y1="0.8" x2="16.2" y2="5.4" stroke-width="1.00"/><line x1="18.6" y1="0.1" x2="18.6" y2="6.4" stroke-width="1.00"/><rect x="21.7" y="0.8" width="2.2" height="5.2" fill="none" stroke-width="1.00"/><line x1="21.5" y1="0.4" x2="26.0" y2="0.4" stroke-width="1.00"/><line x1="23.1" y1="2.9" x2="27.2" y2="2.9" stroke-width="1.00"/><line x1="21.7" y1="4.1" x2="25.2" y2="4.1" stroke-width="1.00"/><line x1="21.9" y1="6.4" x2="25.8" y2="6.4" stroke-width="1.00"/><line x1="25.5" y1="0.7" x2="25.5" y2="5.9" stroke-width="1.00"/><line x1="23.5" y1="1.2" x2="23.5" y2="5.6" stroke-width="1.00"/></g></svg>
<div class="a t ser" style="left:1048px;width:300px;text-align:center;top:864.9px;font-size:7px;line-height:8.4px;color:#b8c4ca;font-weight:bold">1</div>
<div class="a" style="left:928px;top:893.3px;width:306px;height:2.6px;background:#46646f"></div>
<div class="a t ser" style="left:832px;width:300px;text-align:center;top:881.8px;font-size:7px;line-height:8.4px;color:#b8c4ca;font-weight:bold">3</div>
<div class="a t ser" style="left:948px;width:300px;text-align:center;top:881.8px;font-size:7px;line-height:8.4px;color:#b8c4ca;font-weight:bold">2</div>
<div class="a t ser" style="left:1048px;width:300px;text-align:center;top:881.8px;font-size:7px;line-height:8.4px;color:#b8c4ca;font-weight:bold">3</div>
<div class="a" style="left:928px;top:910.1999999999999px;width:306px;height:2.6px;background:#46646f"></div>
<div class="a t ser" style="left:832px;width:300px;text-align:center;top:898.7px;font-size:7px;line-height:8.4px;color:#b8c4ca;font-weight:bold">3</div>
<div class="a t ser" style="left:948px;width:300px;text-align:center;top:898.7px;font-size:7px;line-height:8.4px;color:#b8c4ca;font-weight:bold">4</div>
<div class="a t ser" style="left:1048px;width:300px;text-align:center;top:898.7px;font-size:7px;line-height:8.4px;color:#b8c4ca;font-weight:bold">3</div>
<div class="a" style="left:928px;top:927.0999999999999px;width:306px;height:2.6px;background:#46646f"></div>
<div class="a t ser" style="left:832px;width:300px;text-align:center;top:915.6px;font-size:7px;line-height:8.4px;color:#b8c4ca;font-weight:bold">1</div>
<div class="a t ser" style="left:948px;width:300px;text-align:center;top:915.6px;font-size:7px;line-height:8.4px;color:#b8c4ca;font-weight:bold">22</div>
<div class="a t ser" style="left:1048px;width:300px;text-align:center;top:915.6px;font-size:7px;line-height:8.4px;color:#b8c4ca;font-weight:bold">1</div>
<div class="a" style="left:928px;top:944.0px;width:306px;height:2.6px;background:#46646f"></div>
<div class="a t ser" style="left:832px;width:300px;text-align:center;top:932.5px;font-size:7px;line-height:8.4px;color:#b8c4ca;font-weight:bold">1</div>
<div class="a t ser" style="left:948px;width:300px;text-align:center;top:932.5px;font-size:7px;line-height:8.4px;color:#b8c4ca;font-weight:bold">test112</div>
<div class="a t ser" style="left:1048px;width:300px;text-align:center;top:932.5px;font-size:7px;line-height:8.4px;color:#b8c4ca;font-weight:bold">1</div>
<div class="a" style="left:928px;top:960.9px;width:306px;height:2.6px;background:#46646f"></div>
<div class="a t ser" style="left:832px;width:300px;text-align:center;top:949.4px;font-size:7px;line-height:8.4px;color:#b8c4ca;font-weight:bold">1</div>
<div class="a t ser" style="left:948px;width:300px;text-align:center;top:949.4px;font-size:7px;line-height:8.4px;color:#b8c4ca;font-weight:bold">test11202</div>
<div class="a t ser" style="left:1048px;width:300px;text-align:center;top:949.4px;font-size:7px;line-height:8.4px;color:#b8c4ca;font-weight:bold">1</div>
<div class="a t ser" style="left:832px;width:300px;text-align:center;top:966.3px;font-size:7px;line-height:8.4px;color:#b8c4ca;font-weight:bold">3</div>
<div class="a t ser" style="left:948px;width:300px;text-align:center;top:966.3px;font-size:7px;line-height:8.4px;color:#b8c4ca;font-weight:bold">23</div>
<div class="a t ser" style="left:1048px;width:300px;text-align:center;top:966.3px;font-size:7px;line-height:8.4px;color:#b8c4ca;font-weight:bold">3</div>
<div class="a" style="left:1246px;top:520px;width:345px;height:231px;background:linear-gradient(180deg,#2b5462 0%,#1c404e 45%,#0e2432 100%)"></div>
<svg class="a" style="left:1246px;top:520px" width="244" height="15"><path d="M0 0 L244 0 L229 15 L0 15 Z" fill="#8ef4fa"/></svg>
<div class="a" style="left:1250px;top:524px;width:6px;height:6px;background:#3a7a88;opacity:.7"></div>
<div class="a t ser" style="left:1264px;top:523.1px;font-size:9.8px;line-height:11.8px;color:#1e3a44;font-weight:bold;opacity:.75">Pack Confirmed<svg style="display:inline-block;vertical-align:-1px" width="60" height="8"><g stroke="#1e3a44" fill="none"><line x1="1.5" y1="0.6" x2="5.8" y2="0.6" stroke-width="1.19"/><line x1="1.6" y1="2.7" x2="6.8" y2="2.7" stroke-width="1.19"/><line x1="0.9" y1="5.2" x2="7.5" y2="5.2" stroke-width="1.19"/><line x1="2.2" y1="7.6" x2="5.9" y2="7.6" stroke-width="1.19"/><line x1="5.4" y1="1.3" x2="5.4" y2="7.0" stroke-width="1.19"/><line x1="3.6" y1="1.3" x2="3.6" y2="7.1" stroke-width="1.19"/><line x1="4.4" y1="1.4" x2="4.4" y2="8.0" stroke-width="1.19"/><line x1="10.5" y1="0.4" x2="10.5" y2="8.1" stroke-width="1.19"/><line x1="10.0" y1="0.4" x2="13.6" y2="0.4" stroke-width="1.19"/><line x1="11.1" y1="2.8" x2="14.4" y2="2.8" stroke-width="1.19"/><line x1="11.9" y1="4.0" x2="16.0" y2="4.0" stroke-width="1.19"/><line x1="11.3" y1="6.1" x2="15.7" y2="6.1" stroke-width="1.19"/><line x1="10.3" y1="7.6" x2="15.2" y2="7.6" stroke-width="1.19"/><line x1="10.2" y1="0.6" x2="10.2" y2="8.4" stroke-width="1.19"/><line x1="13.0" y1="1.3" x2="13.0" y2="6.7" stroke-width="1.19"/><line x1="17.8" y1="1.3" x2="25.0" y2="1.3" stroke-width="1.19"/><line x1="18.0" y1="2.1" x2="23.2" y2="2.1" stroke-width="1.19"/><line x1="17.9" y1="4.4" x2="23.7" y2="4.4" stroke-width="1.19"/><line x1="19.0" y1="6.3" x2="24.3" y2="6.3" stroke-width="1.19"/><line x1="19.5" y1="7.7" x2="22.5" y2="7.7" stroke-width="1.19"/><line x1="22.7" y1="0.6" x2="22.7" y2="7.2" stroke-width="1.19"/><line x1="23.9" y1="1.7" x2="23.9" y2="8.0" stroke-width="1.19"/><line x1="24.2" y1="2.4" x2="24.2" y2="7.5" stroke-width="1.19"/><rect x="26.4" y="1.0" width="2.6" height="6.4" fill="none" stroke-width="1.19"/><line x1="29.1" y1="1.0" x2="32.3" y2="1.0" stroke-width="1.19"/><line x1="27.1" y1="2.9" x2="31.0" y2="2.9" stroke-width="1.19"/><line x1="27.8" y1="5.7" x2="33.4" y2="5.7" stroke-width="1.19"/><line x1="26.6" y1="7.4" x2="32.9" y2="7.4" stroke-width="1.19"/><line x1="31.3" y1="0.1" x2="31.3" y2="6.0" stroke-width="1.19"/><line x1="31.5" y1="0.4" x2="31.5" y2="6.5" stroke-width="1.19"/><rect x="34.9" y="1.0" width="2.6" height="6.4" fill="none" stroke-width="1.19"/><line x1="36.7" y1="1.2" x2="41.9" y2="1.2" stroke-width="1.19"/><line x1="37.5" y1="3.4" x2="41.2" y2="3.4" stroke-width="1.19"/><line x1="34.9" y1="5.2" x2="39.0" y2="5.2" stroke-width="1.19"/><line x1="37.4" y1="7.8" x2="39.9" y2="7.8" stroke-width="1.19"/><line x1="37.6" y1="1.7" x2="37.6" y2="7.0" stroke-width="1.19"/><line x1="39.2" y1="0.1" x2="39.2" y2="7.5" stroke-width="1.19"/><line x1="36.9" y1="0.5" x2="36.9" y2="6.2" stroke-width="1.19"/><line x1="44.3" y1="1.0" x2="50.3" y2="1.0" stroke-width="1.19"/><line x1="43.4" y1="3.3" x2="49.4" y2="3.3" stroke-width="1.19"/><line x1="45.3" y1="5.5" x2="50.3" y2="5.5" stroke-width="1.19"/><line x1="43.0" y1="7.5" x2="48.7" y2="7.5" stroke-width="1.19"/><line x1="44.5" y1="0.6" x2="44.5" y2="6.2" stroke-width="1.19"/><line x1="45.9" y1="1.6" x2="45.9" y2="7.4" stroke-width="1.19"/><line x1="46.1" y1="2.4" x2="46.1" y2="7.6" stroke-width="1.19"/><line x1="53.0" y1="0.4" x2="53.0" y2="8.1" stroke-width="1.19"/><line x1="53.2" y1="0.9" x2="58.3" y2="0.9" stroke-width="1.19"/><line x1="52.3" y1="3.2" x2="56.6" y2="3.2" stroke-width="1.19"/><line x1="51.8" y1="5.6" x2="58.6" y2="5.6" stroke-width="1.19"/><line x1="52.1" y1="7.3" x2="57.4" y2="7.3" stroke-width="1.19"/><line x1="56.0" y1="1.9" x2="56.0" y2="7.9" stroke-width="1.19"/><line x1="56.6" y1="0.1" x2="56.6" y2="8.1" stroke-width="1.19"/><line x1="53.1" y1="0.4" x2="53.1" y2="6.0" stroke-width="1.19"/></g></svg> | Daily</div>
<div class="a t ser" style="left:1162px;width:300px;text-align:center;top:549.5px;font-size:7.5px;line-height:9.0px;color:#62d2e2;font-weight:bold">COUNT(content)</div>
<div class="a t ser" style="left:1285px;width:300px;text-align:center;top:549.5px;font-size:7.5px;line-height:9.0px;color:#62d2e2;font-weight:bold">name</div>
<div class="a t ser" style="left:1391px;width:300px;text-align:center;top:549.5px;font-size:7.5px;line-height:9.0px;color:#62d2e2;font-weight:bold">COUNT(id)</div>
<div class="a" style="left:1250px;top:561.3px;width:337px;height:2.6px;background:#46646f"></div>
<div class="a" style="left:1250px;top:572.5999999999999px;width:337px;height:2.6px;background:#46646f"></div>
<div class="a t ser" style="left:1162px;width:300px;text-align:center;top:561.1px;font-size:7px;line-height:8.4px;color:#b8c4ca;font-weight:bold">3</div>
<div class="a t ser" style="left:1285px;width:300px;text-align:center;top:561.1px;font-size:7px;line-height:8.4px;color:#b8c4ca;font-weight:bold">test1</div>
<div class="a t ser" style="left:1391px;width:300px;text-align:center;top:561.1px;font-size:7px;line-height:8.4px;color:#b8c4ca;font-weight:bold">3</div>
<div class="a" style="left:1250px;top:589.4999999999999px;width:337px;height:2.6px;background:#46646f"></div>
<div class="a t ser" style="left:1162px;width:300px;text-align:center;top:578.0px;font-size:7px;line-height:8.4px;color:#b8c4ca;font-weight:bold">1</div>
<div class="a t ser" style="left:1285px;width:300px;text-align:center;top:578.0px;font-size:7px;line-height:8.4px;color:#b8c4ca;font-weight:bold">aaa134</div>
<div class="a t ser" style="left:1391px;width:300px;text-align:center;top:578.0px;font-size:7px;line-height:8.4px;color:#b8c4ca;font-weight:bold">1</div>
<div class="a" style="left:1250px;top:606.3999999999999px;width:337px;height:2.6px;background:#46646f"></div>
<div class="a t ser" style="left:1162px;width:300px;text-align:center;top:594.9px;font-size:7px;line-height:8.4px;color:#b8c4ca;font-weight:bold">1</div>
<div class="a t ser" style="left:1285px;width:300px;text-align:center;top:594.9px;font-size:7px;line-height:8.4px;color:#b8c4ca;font-weight:bold">cube_1105</div>
<div class="a t ser" style="left:1391px;width:300px;text-align:center;top:594.9px;font-size:7px;line-height:8.4px;color:#b8c4ca;font-weight:bold">1</div>
<div class="a" style="left:1250px;top:623.3px;width:337px;height:2.6px;background:#46646f"></div>
<div class="a t ser" style="left:1162px;width:300px;text-align:center;top:611.8px;font-size:7px;line-height:8.4px;color:#b8c4ca;font-weight:bold">1</div>
<div class="a t ser" style="left:1285px;width:300px;text-align:center;top:611.8px;font-size:7px;line-height:8.4px;color:#b8c4ca;font-weight:bold">baise_1105</div>
<div class="a t ser" style="left:1391px;width:300px;text-align:center;top:611.8px;font-size:7px;line-height:8.4px;color:#b8c4ca;font-weight:bold">1</div>
<div class="a" style="left:1250px;top:640.1999999999999px;width:337px;height:2.6px;background:#46646f"></div>
<div class="a t ser" style="left:1162px;width:300px;text-align:center;top:628.7px;font-size:7px;line-height:8.4px;color:#b8c4ca;font-weight:bold">1</div>
<svg class="a" style="left:1421px;top:629.4px;opacity:0.58" width="28" height="7"><g stroke="#b8c4ca" fill="none"><rect x="0.7" y="0.8" width="2.2" height="5.2" fill="none" stroke-width="1.00"/><line x1="1.5" y1="1.0" x2="4.3" y2="1.0" stroke-width="1.00"/><line x1="2.8" y1="2.2" x2="5.6" y2="2.2" stroke-width="1.00"/><line x1="0.5" y1="4.7" x2="4.4" y2="4.7" stroke-width="1.00"/><line x1="0.9" y1="6.2" x2="4.4" y2="6.2" stroke-width="1.00"/><line x1="1.4" y1="1.1" x2="1.4" y2="5.0" stroke-width="1.00"/><line x1="5.1" y1="1.7" x2="5.1" y2="5.8" stroke-width="1.00"/><line x1="8.7" y1="0.6" x2="11.2" y2="0.6" stroke-width="1.00"/><line x1="8.0" y1="2.6" x2="11.9" y2="2.6" stroke-width="1.00"/><line x1="9.9" y1="4.1" x2="12.6" y2="4.1" stroke-width="1.00"/><line x1="8.9" y1="6.2" x2="13.4" y2="6.2" stroke-width="1.00"/><line x1="8.8" y1="1.7" x2="8.8" y2="6.8" stroke-width="1.00"/><line x1="12.6" y1="0.2" x2="12.6" y2="6.3" stroke-width="1.00"/><line x1="15.1" y1="0.6" x2="20.6" y2="0.6" stroke-width="1.00"/><line x1="16.5" y1="1.8" x2="19.7" y2="1.8" stroke-width="1.00"/><line x1="16.8" y1="3.6" x2="19.0" y2="3.6" stroke-width="1.00"/><line x1="16.0" y1="4.7" x2="18.4" y2="4.7" stroke-width="1.00"/><line x1="16.3" y1="6.2" x2="19.6" y2="6.2" stroke-width="1.00"/><line x1="20.0" y1="1.8" x2="20.0" y2="6.3" stroke-width="1.00"/><line x1="19.8" y1="0.3" x2="19.8" y2="5.7" stroke-width="1.00"/><line x1="17.8" y1="0.3" x2="17.8" y2="6.5" stroke-width="1.00"/><rect x="21.7" y="0.8" width="2.2" height="5.2" fill="none" stroke-width="1.00"/><line x1="22.2" y1="0.8" x2="25.9" y2="0.8" stroke-width="1.00"/><line x1="22.0" y1="2.2" x2="26.2" y2="2.2" stroke-width="1.00"/><line x1="24.2" y1="3.8" x2="25.8" y2="3.8" stroke-width="1.00"/><line x1="23.3" y1="4.8" x2="25.6" y2="4.8" stroke-width="1.00"/><line x1="22.0" y1="6.5" x2="26.5" y2="6.5" stroke-width="1.00"/><line x1="25.7" y1="0.2" x2="25.7" y2="6.3" stroke-width="1.00"/><line x1="25.1" y1="1.3" x2="25.1" y2="5.9" stroke-width="1.00"/><line x1="24.5" y1="0.1" x2="24.5" y2="5.8" stroke-width="1.00"/></g></svg>
<div class="a t ser" style="left:1391px;width:300px;text-align:center;top:628.7px;font-size:7px;line-height:8.4px;color:#b8c4ca;font-weight:bold">1</div>
<div class="a" style="left:1250px;top:657.0999999999999px;width:337px;height:2.6px;background:#46646f"></div>
<div class="a t ser" style="left:1162px;width:300px;text-align:center;top:645.6px;font-size:7px;line-height:8.4px;color:#b8c4ca;font-weight:bold">3</div>
<div class="a t ser" style="left:1285px;width:300px;text-align:center;top:645.6px;font-size:7px;line-height:8.4px;color:#b8c4ca;font-weight:bold">2</div>
<div class="a t ser" style="left:1391px;width:300px;text-align:center;top:645.6px;font-size:7px;line-height:8.4px;color:#b8c4ca;font-weight:bold">3</div>
<div class="a" style="left:1250px;top:673.9999999999999px;width:337px;height:2.6px;background:#46646f"></div>
<div class="a t ser" style="left:1162px;width:300px;text-align:center;top:662.5px;font-size:7px;line-height:8.4px;color:#b8c4ca;font-weight:bold">3</div>
<div class="a t ser" style="left:1285px;width:300px;text-align:center;top:662.5px;font-size:7px;line-height:8.4px;color:#b8c4ca;font-weight:bold">4</div>
<div class="a t ser" style="left:1391px;width:300px;text-align:center;top:662.5px;font-size:7px;line-height:8.4px;color:#b8c4ca;font-weight:bold">3</div>
<div class="a" style="left:1250px;top:690.8999999999999px;width:337px;height:2.6px;background:#46646f"></div>
<div class="a t ser" style="left:1162px;width:300px;text-align:center;top:679.4px;font-size:7px;line-height:8.4px;color:#b8c4ca;font-weight:bold">1</div>
<div class="a t ser" style="left:1285px;width:300px;text-align:center;top:679.4px;font-size:7px;line-height:8.4px;color:#b8c4ca;font-weight:bold">22</div>
<div class="a t ser" style="left:1391px;width:300px;text-align:center;top:679.4px;font-size:7px;line-height:8.4px;color:#b8c4ca;font-weight:bold">1</div>
<div class="a" style="left:1250px;top:707.8px;width:337px;height:2.6px;background:#46646f"></div>
<div class="a t ser" style="left:1162px;width:300px;text-align:center;top:696.3px;font-size:7px;line-height:8.4px;color:#b8c4ca;font-weight:bold">1</div>
<div class="a t ser" style="left:1285px;width:300px;text-align:center;top:696.3px;font-size:7px;line-height:8.4px;color:#b8c4ca;font-weight:bold">test112</div>
<div class="a t ser" style="left:1391px;width:300px;text-align:center;top:696.3px;font-size:7px;line-height:8.4px;color:#b8c4ca;font-weight:bold">1</div>
<div class="a" style="left:1250px;top:724.6999999999999px;width:337px;height:2.6px;background:#46646f"></div>
<div class="a t ser" style="left:1162px;width:300px;text-align:center;top:713.2px;font-size:7px;line-height:8.4px;color:#b8c4ca;font-weight:bold">1</div>
<div class="a t ser" style="left:1285px;width:300px;text-align:center;top:713.2px;font-size:7px;line-height:8.4px;color:#b8c4ca;font-weight:bold">test11202</div>
<div class="a t ser" style="left:1391px;width:300px;text-align:center;top:713.2px;font-size:7px;line-height:8.4px;color:#b8c4ca;font-weight:bold">1</div>
<div class="a" style="left:1250px;top:741.5999999999999px;width:337px;height:2.6px;background:#46646f"></div>
<div class="a t ser" style="left:1162px;width:300px;text-align:center;top:730.1px;font-size:7px;line-height:8.4px;color:#b8c4ca;font-weight:bold">3</div>
<div class="a t ser" style="left:1285px;width:300px;text-align:center;top:730.1px;font-size:7px;line-height:8.4px;color:#b8c4ca;font-weight:bold">23</div>
<div class="a t ser" style="left:1391px;width:300px;text-align:center;top:730.1px;font-size:7px;line-height:8.4px;color:#b8c4ca;font-weight:bold">3</div>
<div class="a" style="left:1243px;top:758px;width:353px;height:222px;background:linear-gradient(180deg,#2b5462 0%,#1c404e 45%,#0e2432 100%)"></div>
<svg class="a" style="left:1243px;top:758px" width="248" height="15"><path d="M0 0 L248 0 L233 15 L0 15 Z" fill="#8ef4fa"/></svg>
<div class="a" style="left:1247px;top:762px;width:6px;height:6px;background:#3a7a88;opacity:.7"></div>
<div class="a t ser" style="left:1261px;top:761.1px;font-size:9.8px;line-height:11.8px;color:#1e3a44;font-weight:bold;opacity:.75">Shipped MTD</div>
<div class="a t ser" style="left:1157px;width:300px;text-align:center;top:789.0px;font-size:7.5px;line-height:9.0px;color:#62d2e2;font-weight:bold">COUNT(content)</div>
<div class="a t ser" style="left:1287px;width:300px;text-align:center;top:789.0px;font-size:7.5px;line-height:9.0px;color:#62d2e2;font-weight:bold">name</div>
<div class="a t ser" style="left:1398px;width:300px;text-align:center;top:789.0px;font-size:7.5px;line-height:9.0px;color:#62d2e2;font-weight:bold">COUNT(id)</div>
<div class="a" style="left:1247px;top:800.7px;width:345px;height:2.6px;background:#46646f"></div>
<div class="a" style="left:1247px;top:812.0px;width:345px;height:2.6px;background:#46646f"></div>
<div class="a t ser" style="left:1157px;width:300px;text-align:center;top:800.5px;font-size:7px;line-height:8.4px;color:#b8c4ca;font-weight:bold">3</div>
<div class="a t ser" style="left:1287px;width:300px;text-align:center;top:800.5px;font-size:7px;line-height:8.4px;color:#b8c4ca;font-weight:bold">test1</div>
<div class="a t ser" style="left:1398px;width:300px;text-align:center;top:800.5px;font-size:7px;line-height:8.4px;color:#b8c4ca;font-weight:bold">3</div>
<div class="a" style="left:1247px;top:828.9px;width:345px;height:2.6px;background:#46646f"></div>
<div class="a t ser" style="left:1157px;width:300px;text-align:center;top:817.4px;font-size:7px;line-height:8.4px;color:#b8c4ca;font-weight:bold">1</div>
<div class="a t ser" style="left:1287px;width:300px;text-align:center;top:817.4px;font-size:7px;line-height:8.4px;color:#b8c4ca;font-weight:bold">aaa134</div>
<div class="a t ser" style="left:1398px;width:300px;text-align:center;top:817.4px;font-size:7px;line-height:8.4px;color:#b8c4ca;font-weight:bold">1</div>
<div class="a" style="left:1247px;top:845.8px;width:345px;height:2.6px;background:#46646f"></div>
<div class="a t ser" style="left:1157px;width:300px;text-align:center;top:834.3px;font-size:7px;line-height:8.4px;color:#b8c4ca;font-weight:bold">1</div>
<div class="a t ser" style="left:1287px;width:300px;text-align:center;top:834.3px;font-size:7px;line-height:8.4px;color:#b8c4ca;font-weight:bold">cube_1105</div>
<div class="a t ser" style="left:1398px;width:300px;text-align:center;top:834.3px;font-size:7px;line-height:8.4px;color:#b8c4ca;font-weight:bold">1</div>
<div class="a" style="left:1247px;top:862.7px;width:345px;height:2.6px;background:#46646f"></div>
<div class="a t ser" style="left:1157px;width:300px;text-align:center;top:851.2px;font-size:7px;line-height:8.4px;color:#b8c4ca;font-weight:bold">1</div>
<div class="a t ser" style="left:1287px;width:300px;text-align:center;top:851.2px;font-size:7px;line-height:8.4px;color:#b8c4ca;font-weight:bold">baise_1105</div>
<div class="a t ser" style="left:1398px;width:300px;text-align:center;top:851.2px;font-size:7px;line-height:8.4px;color:#b8c4ca;font-weight:bold">1</div>
<div class="a" style="left:1247px;top:879.6px;width:345px;height:2.6px;background:#46646f"></div>
<div class="a t ser" style="left:1157px;width:300px;text-align:center;top:868.1px;font-size:7px;line-height:8.4px;color:#b8c4ca;font-weight:bold">1</div>
<svg class="a" style="left:1423px;top:868.8px;opacity:0.58" width="28" height="7"><g stroke="#b8c4ca" fill="none"><line x1="1.7" y1="0.4" x2="1.7" y2="6.6" stroke-width="1.00"/><line x1="1.7" y1="0.5" x2="5.3" y2="0.5" stroke-width="1.00"/><line x1="1.2" y1="2.2" x2="5.5" y2="2.2" stroke-width="1.00"/><line x1="2.4" y1="3.3" x2="6.0" y2="3.3" stroke-width="1.00"/><line x1="2.1" y1="4.9" x2="6.4" y2="4.9" stroke-width="1.00"/><line x1="3.1" y1="6.4" x2="4.4" y2="6.4" stroke-width="1.00"/><line x1="4.4" y1="0.9" x2="4.4" y2="6.7" stroke-width="1.00"/><line x1="3.7" y1="0.4" x2="3.7" y2="6.3" stroke-width="1.00"/><line x1="10.0" y1="0.6" x2="11.5" y2="0.6" stroke-width="1.00"/><line x1="8.1" y1="2.7" x2="11.7" y2="2.7" stroke-width="1.00"/><line x1="9.7" y1="4.4" x2="13.4" y2="4.4" stroke-width="1.00"/><line x1="9.2" y1="6.0" x2="12.3" y2="6.0" stroke-width="1.00"/><line x1="8.2" y1="0.3" x2="8.2" y2="5.0" stroke-width="1.00"/><line x1="10.7" y1="0.3" x2="10.7" y2="6.2" stroke-width="1.00"/><line x1="16.2" y1="0.6" x2="19.0" y2="0.6" stroke-width="1.00"/><line x1="16.2" y1="2.5" x2="18.7" y2="2.5" stroke-width="1.00"/><line x1="15.9" y1="4.1" x2="18.9" y2="4.1" stroke-width="1.00"/><line x1="15.2" y1="6.3" x2="19.2" y2="6.3" stroke-width="1.00"/><line x1="15.1" y1="1.0" x2="15.1" y2="5.5" stroke-width="1.00"/><line x1="18.0" y1="1.1" x2="18.0" y2="6.0" stroke-width="1.00"/><rect x="21.7" y="0.8" width="2.2" height="5.2" fill="none" stroke-width="1.00"/><line x1="22.4" y1="0.6" x2="25.4" y2="0.6" stroke-width="1.00"/><line x1="23.4" y1="2.9" x2="25.3" y2="2.9" stroke-width="1.00"/><line x1="22.6" y1="4.5" x2="25.8" y2="4.5" stroke-width="1.00"/><line x1="23.3" y1="6.6" x2="27.4" y2="6.6" stroke-width="1.00"/><line x1="26.2" y1="0.2" x2="26.2" y2="5.1" stroke-width="1.00"/><line x1="25.5" y1="1.1" x2="25.5" y2="6.9" stroke-width="1.00"/><line x1="26.7" y1="0.9" x2="26.7" y2="6.1" stroke-width="1.00"/></g></svg>
<div class="a t ser" style="left:1398px;width:300px;text-align:center;top:868.1px;font-size:7px;line-height:8.4px;color:#b8c4ca;font-weight:bold">1</div>
<div class="a" style="left:1247px;top:896.5px;width:345px;height:2.6px;background:#46646f"></div>
<div class="a t ser" style="left:1157px;width:300px;text-align:center;top:885.0px;font-size:7px;line-height:8.4px;color:#b8c4ca;font-weight:bold">3</div>
<div class="a t ser" style="left:1287px;width:300px;text-align:center;top:885.0px;font-size:7px;line-height:8.4px;color:#b8c4ca;font-weight:bold">2</div>
<div class="a t ser" style="left:1398px;width:300px;text-align:center;top:885.0px;font-size:7px;line-height:8.4px;color:#b8c4ca;font-weight:bold">3</div>
<div class="a" style="left:1247px;top:913.4px;width:345px;height:2.6px;background:#46646f"></div>
<div class="a t ser" style="left:1157px;width:300px;text-align:center;top:901.9px;font-size:7px;line-height:8.4px;color:#b8c4ca;font-weight:bold">3</div>
<div class="a t ser" style="left:1287px;width:300px;text-align:center;top:901.9px;font-size:7px;line-height:8.4px;color:#b8c4ca;font-weight:bold">4</div>
<div class="a t ser" style="left:1398px;width:300px;text-align:center;top:901.9px;font-size:7px;line-height:8.4px;color:#b8c4ca;font-weight:bold">3</div>
<div class="a" style="left:1247px;top:930.3px;width:345px;height:2.6px;background:#46646f"></div>
<div class="a t ser" style="left:1157px;width:300px;text-align:center;top:918.8px;font-size:7px;line-height:8.4px;color:#b8c4ca;font-weight:bold">1</div>
<div class="a t ser" style="left:1287px;width:300px;text-align:center;top:918.8px;font-size:7px;line-height:8.4px;color:#b8c4ca;font-weight:bold">22</div>
<div class="a t ser" style="left:1398px;width:300px;text-align:center;top:918.8px;font-size:7px;line-height:8.4px;color:#b8c4ca;font-weight:bold">1</div>
<div class="a" style="left:1247px;top:947.2px;width:345px;height:2.6px;background:#46646f"></div>
<div class="a t ser" style="left:1157px;width:300px;text-align:center;top:935.7px;font-size:7px;line-height:8.4px;color:#b8c4ca;font-weight:bold">1</div>
<div class="a t ser" style="left:1287px;width:300px;text-align:center;top:935.7px;font-size:7px;line-height:8.4px;color:#b8c4ca;font-weight:bold">test112</div>
<div class="a t ser" style="left:1398px;width:300px;text-align:center;top:935.7px;font-size:7px;line-height:8.4px;color:#b8c4ca;font-weight:bold">1</div>
<div class="a" style="left:1247px;top:964.1px;width:345px;height:2.6px;background:#46646f"></div>
<div class="a t ser" style="left:1157px;width:300px;text-align:center;top:952.6px;font-size:7px;line-height:8.4px;color:#b8c4ca;font-weight:bold">1</div>
<div class="a t ser" style="left:1287px;width:300px;text-align:center;top:952.6px;font-size:7px;line-height:8.4px;color:#b8c4ca;font-weight:bold">test11202</div>
<div class="a t ser" style="left:1398px;width:300px;text-align:center;top:952.6px;font-size:7px;line-height:8.4px;color:#b8c4ca;font-weight:bold">1</div>
<div class="a t ser" style="left:1157px;width:300px;text-align:center;top:969.5px;font-size:7px;line-height:8.4px;color:#b8c4ca;font-weight:bold">3</div>
<div class="a t ser" style="left:1287px;width:300px;text-align:center;top:969.5px;font-size:7px;line-height:8.4px;color:#b8c4ca;font-weight:bold">23</div>
<div class="a t ser" style="left:1398px;width:300px;text-align:center;top:969.5px;font-size:7px;line-height:8.4px;color:#b8c4ca;font-weight:bold">3</div>
<div class="a" style="left:1591px;top:391px;width:278px;height:591px;background:#07101b"></div>
<div class="a" style="left:1596px;top:395px;width:262px;height:28px;background:#2f4a56"></div>
<svg class="a" style="left:1605px;top:399px" width="18" height="20" viewBox="0 0 18 20"><path d="M3 2 L11 2 L15 6 L15 18 L3 18 Z" fill="none" stroke="#6ee0ea" stroke-width="2.2"/><path d="M8 8 L13 8 L13 15 L8 15" fill="none" stroke="#6ee0ea" stroke-width="2"/></svg>
<div class="a t ser" style="left:1635px;top:403.3px;font-size:9.5px;line-height:11.4px;color:#6ad6e0;font-weight:bold">building/pending</div>
<div class="a t ser" style="left:1773px;top:403.0px;font-size:10px;line-height:12.0px;color:#6ad6e0;font-weight:bold;letter-spacing:.3px">v5000/6000</div>
<div class="a" style="left:1596px;top:429px;width:7px;height:8px;background:#4f6ad0"></div>
<div class="a t ser" style="left:1605px;top:428.5px;font-size:7.5px;line-height:9.0px;color:#a0aab2;font-weight:bold">Supplier1</div>
<div class="a" style="left:1643px;top:429px;width:7px;height:8px;background:#8cc86a"></div>
<div class="a t ser" style="left:1652px;top:428.5px;font-size:7.5px;line-height:9.0px;color:#a0aab2;font-weight:bold">Supplier1</div>
<div class="a" style="left:1690px;top:429px;width:7px;height:8px;background:#f0c040"></div>
<div class="a t ser" style="left:1699px;top:428.5px;font-size:7.5px;line-height:9.0px;color:#a0aab2;font-weight:bold">Supplier1</div>
<div class="a" style="left:1738px;top:429px;width:7px;height:8px;background:#e85a5a"></div>
<div class="a t ser" style="left:1747px;top:428.5px;font-size:7.5px;line-height:9.0px;color:#a0aab2;font-weight:bold">Supplier1</div>
<div class="a" style="left:1786px;top:429px;width:7px;height:8px;background:#60b8e0"></div>
<div class="a t ser" style="left:1795px;top:428.5px;font-size:7.5px;line-height:9.0px;color:#a0aab2;font-weight:bold">Supplier1</div>
<div class="a" style="left:1600px;top:707px;width:269px;height:32px;background:#2f4a56"></div>
<svg class="a" style="left:1609px;top:711px" width="16" height="24" viewBox="0 0 16 24"><rect x="2" y="2" width="11" height="20" fill="none" stroke="#6ee0ea" stroke-width="2.2"/><rect x="5" y="12" width="6" height="8" fill="#6ee0ea"/></svg>
<div class="a t ser" style="left:1633px;top:717.3px;font-size:9.5px;line-height:11.4px;color:#6ad6e0;font-weight:bold">open PO/pending</div>
<div class="a t ser" style="left:1773px;top:717.0px;font-size:10px;line-height:12.0px;color:#6ad6e0;font-weight:bold;letter-spacing:.3px">8000/3000</div>
<svg class="a" style="left:0;top:0" width="1920" height="1080"><path d="M1628.63,513.21 A41.4,41.4 0 0 1 1668.00,484.60" fill="none" stroke="#5ab0e0" stroke-width="3.2"/><path d="M1668.00,484.85 A41.15,41.15 0 0 1 1707.14,513.28" fill="none" stroke="#5068d0" stroke-width="6.5"/><path d="M1707.37,513.21 A41.4,41.4 0 0 1 1691.75,559.91" fill="none" stroke="#7cc05a" stroke-width="3.2"/><path d="M1691.46,559.50 A40.9,40.9 0 0 1 1644.54,559.50" fill="none" stroke="#f0c040" stroke-width="4.2"/><path d="M1644.37,559.75 A41.2,41.2 0 0 1 1628.82,513.27" fill="none" stroke="#e85a5a" stroke-width="3.6"/></svg>
<div class="a t ser" style="left:1518px;width:300px;text-align:center;top:507.4px;font-size:8.5px;line-height:10.2px;color:#e8ecef;font-weight:bold">8888</div>
<div class="a" style="left:1657px;top:532px;width:22px;height:2px;background:#505a62"></div>
<div class="a t ser" style="left:1518px;width:300px;text-align:center;top:542.5px;font-size:7.5px;line-height:9.0px;color:#c0c8cc;font-weight:bold">CountryA</div>
<svg class="a" style="left:0;top:0" width="1920" height="1080"><path d="M1771.72,511.59 A43.4,43.4 0 0 1 1813.00,481.60" fill="none" stroke="#5ab0e0" stroke-width="3.2"/><path d="M1813.00,482.20 A42.8,42.8 0 0 1 1853.71,511.77" fill="none" stroke="#5068d0" stroke-width="8"/><path d="M1854.28,511.59 A43.4,43.4 0 0 1 1837.89,560.55" fill="none" stroke="#7cc05a" stroke-width="3.2"/><path d="M1837.61,560.14 A42.9,42.9 0 0 1 1788.39,560.14" fill="none" stroke="#f0c040" stroke-width="4.2"/><path d="M1788.22,560.39 A43.2,43.2 0 0 1 1771.91,511.65" fill="none" stroke="#e85a5a" stroke-width="3.6"/></svg>
<div class="a t ser" style="left:1663px;width:300px;text-align:center;top:506.4px;font-size:8.5px;line-height:10.2px;color:#e8ecef;font-weight:bold">8888</div>
<div class="a" style="left:1802px;top:531px;width:22px;height:2px;background:#505a62"></div>
<div class="a t ser" style="left:1663px;width:300px;text-align:center;top:541.5px;font-size:7.5px;line-height:9.0px;color:#c0c8cc;font-weight:bold">CountryA</div>
<svg class="a" style="left:0;top:0" width="1920" height="1080"><path d="M1629.53,634.82 A39.4,39.4 0 0 1 1667.00,607.60" fill="none" stroke="#5ab0e0" stroke-width="3.2"/><path d="M1667.00,607.85 A39.15,39.15 0 0 1 1704.23,634.90" fill="none" stroke="#5068d0" stroke-width="6.5"/><path d="M1704.47,634.82 A39.4,39.4 0 0 1 1689.60,679.27" fill="none" stroke="#7cc05a" stroke-width="3.2"/><path d="M1689.31,678.87 A38.9,38.9 0 0 1 1644.69,678.87" fill="none" stroke="#f0c040" stroke-width="4.2"/><path d="M1644.52,679.11 A39.2,39.2 0 0 1 1629.72,634.89" fill="none" stroke="#e85a5a" stroke-width="3.6"/></svg>
<div class="a t ser" style="left:1517px;width:300px;text-align:center;top:628.4px;font-size:8.5px;line-height:10.2px;color:#e8ecef;font-weight:bold">8888</div>
<div class="a" style="left:1656px;top:653px;width:22px;height:2px;background:#505a62"></div>
<div class="a t ser" style="left:1517px;width:300px;text-align:center;top:663.5px;font-size:7.5px;line-height:9.0px;color:#c0c8cc;font-weight:bold">CountryA</div>
<svg class="a" style="left:0;top:0" width="1920" height="1080"><path d="M1779.48,638.13 A38.4,38.4 0 0 1 1816.00,611.60" fill="none" stroke="#5ab0e0" stroke-width="3.2"/><path d="M1816.00,611.85 A38.15,38.15 0 0 1 1852.28,638.21" fill="none" stroke="#5068d0" stroke-width="6.5"/><path d="M1852.52,638.13 A38.4,38.4 0 0 1 1838.03,681.46" fill="none" stroke="#7cc05a" stroke-width="3.2"/><path d="M1837.74,681.05 A37.9,37.9 0 0 1 1794.26,681.05" fill="none" stroke="#f0c040" stroke-width="4.2"/><path d="M1794.09,681.29 A38.2,38.2 0 0 1 1779.67,638.20" fill="none" stroke="#e85a5a" stroke-width="3.6"/></svg>
<div class="a t ser" style="left:1666px;width:300px;text-align:center;top:631.4px;font-size:8.5px;line-height:10.2px;color:#e8ecef;font-weight:bold">8888</div>
<div class="a" style="left:1805px;top:656px;width:22px;height:2px;background:#505a62"></div>
<div class="a t ser" style="left:1666px;width:300px;text-align:center;top:666.5px;font-size:7.5px;line-height:9.0px;color:#c0c8cc;font-weight:bold">CountryA</div>
<svg class="a" style="left:0;top:0" width="1920" height="1080"><path d="M1627.63,786.21 A41.4,41.4 0 0 1 1667.00,757.60" fill="none" stroke="#5ab0e0" stroke-width="3.2"/><path d="M1667.00,757.85 A41.15,41.15 0 0 1 1706.14,786.28" fill="none" stroke="#5068d0" stroke-width="6.5"/><path d="M1706.37,786.21 A41.4,41.4 0 0 1 1690.75,832.91" fill="none" stroke="#7cc05a" stroke-width="3.2"/><path d="M1690.46,832.50 A40.9,40.9 0 0 1 1643.54,832.50" fill="none" stroke="#f0c040" stroke-width="4.2"/><path d="M1643.37,832.75 A41.2,41.2 0 0 1 1627.82,786.27" fill="none" stroke="#e85a5a" stroke-width="3.6"/></svg>
<div class="a t ser" style="left:1517px;width:300px;text-align:center;top:780.4px;font-size:8.5px;line-height:10.2px;color:#e8ecef;font-weight:bold">8888</div>
<div class="a" style="left:1656px;top:805px;width:22px;height:2px;background:#505a62"></div>
<div class="a t ser" style="left:1517px;width:300px;text-align:center;top:815.5px;font-size:7.5px;line-height:9.0px;color:#c0c8cc;font-weight:bold">CountryA</div>
<svg class="a" style="left:0;top:0" width="1920" height="1080"><path d="M1768.53,786.82 A39.4,39.4 0 0 1 1806.00,759.60" fill="none" stroke="#5ab0e0" stroke-width="3.2"/><path d="M1806.00,759.85 A39.15,39.15 0 0 1 1843.23,786.90" fill="none" stroke="#5068d0" stroke-width="6.5"/><path d="M1843.47,786.82 A39.4,39.4 0 0 1 1828.60,831.27" fill="none" stroke="#7cc05a" stroke-width="3.2"/><path d="M1828.31,830.87 A38.9,38.9 0 0 1 1783.69,830.87" fill="none" stroke="#f0c040" stroke-width="4.2"/><path d="M1783.52,831.11 A39.2,39.2 0 0 1 1768.72,786.89" fill="none" stroke="#e85a5a" stroke-width="3.6"/></svg>
<div class="a t ser" style="left:1656px;width:300px;text-align:center;top:780.4px;font-size:8.5px;line-height:10.2px;color:#e8ecef;font-weight:bold">8888</div>
<div class="a" style="left:1795px;top:805px;width:22px;height:2px;background:#505a62"></div>
<div class="a t ser" style="left:1656px;width:300px;text-align:center;top:815.5px;font-size:7.5px;line-height:9.0px;color:#c0c8cc;font-weight:bold">CountryA</div>
<svg class="a" style="left:0;top:0" width="1920" height="1080"><path d="M1627.63,902.21 A41.4,41.4 0 0 1 1667.00,873.60" fill="none" stroke="#5ab0e0" stroke-width="3.2"/><path d="M1667.00,873.85 A41.15,41.15 0 0 1 1706.14,902.28" fill="none" stroke="#5068d0" stroke-width="6.5"/><path d="M1706.37,902.21 A41.4,41.4 0 0 1 1690.75,948.91" fill="none" stroke="#7cc05a" stroke-width="3.2"/><path d="M1690.46,948.50 A40.9,40.9 0 0 1 1643.54,948.50" fill="none" stroke="#f0c040" stroke-width="4.2"/><path d="M1643.37,948.75 A41.2,41.2 0 0 1 1627.82,902.27" fill="none" stroke="#e85a5a" stroke-width="3.6"/></svg>
<div class="a t ser" style="left:1517px;width:300px;text-align:center;top:896.4px;font-size:8.5px;line-height:10.2px;color:#e8ecef;font-weight:bold">8888</div>
<div class="a" style="left:1656px;top:921px;width:22px;height:2px;background:#505a62"></div>
<div class="a t ser" style="left:1517px;width:300px;text-align:center;top:931.5px;font-size:7.5px;line-height:9.0px;color:#c0c8cc;font-weight:bold">CountryA</div>
<svg class="a" style="left:0;top:0" width="1920" height="1080"><path d="M1765.58,903.52 A40.4,40.4 0 0 1 1804.00,875.60" fill="none" stroke="#5ab0e0" stroke-width="3.2"/><path d="M1804.00,875.85 A40.15,40.15 0 0 1 1842.18,903.59" fill="none" stroke="#5068d0" stroke-width="6.5"/><path d="M1842.42,903.52 A40.4,40.4 0 0 1 1827.17,949.09" fill="none" stroke="#7cc05a" stroke-width="3.2"/><path d="M1826.89,948.68 A39.9,39.9 0 0 1 1781.11,948.68" fill="none" stroke="#f0c040" stroke-width="4.2"/><path d="M1780.94,948.93 A40.2,40.2 0 0 1 1765.77,903.58" fill="none" stroke="#e85a5a" stroke-width="3.6"/></svg>
<div class="a t ser" style="left:1654px;width:300px;text-align:center;top:897.4px;font-size:8.5px;line-height:10.2px;color:#e8ecef;font-weight:bold">8888</div>
<div class="a" style="left:1793px;top:922px;width:22px;height:2px;background:#505a62"></div>
<div class="a t ser" style="left:1654px;width:300px;text-align:center;top:932.5px;font-size:7.5px;line-height:9.0px;color:#c0c8cc;font-weight:bold">CountryA</div>
</div></div></div></body></html>
